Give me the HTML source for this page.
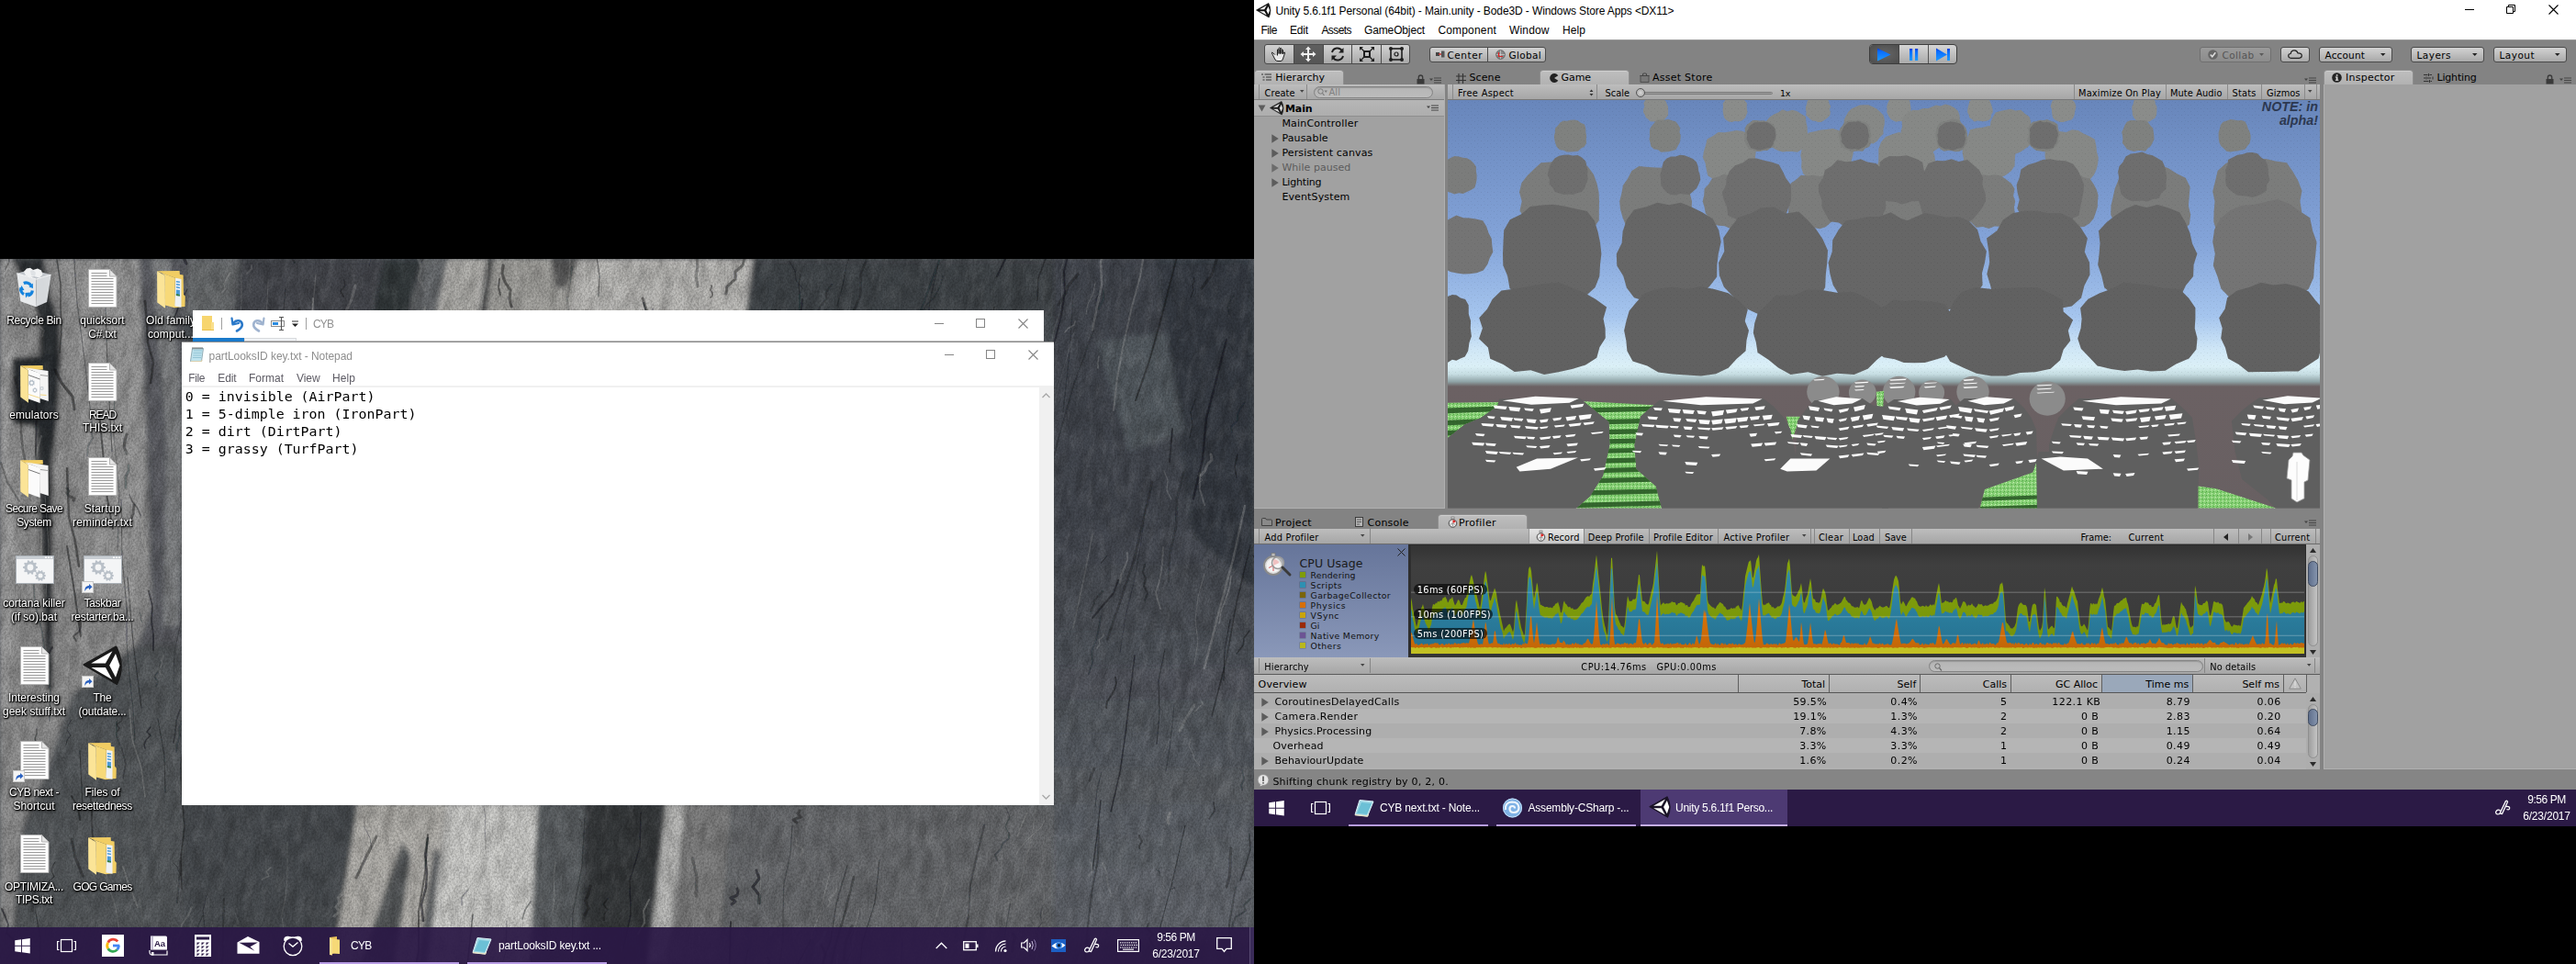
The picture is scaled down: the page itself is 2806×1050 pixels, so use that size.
<!DOCTYPE html><html><head><meta charset="utf-8"><title>desktop</title><style>
html,body{margin:0;padding:0;background:#000;}
body{width:2806px;height:1050px;position:relative;overflow:hidden;font-family:"Liberation Sans",sans-serif;}
.a{position:absolute;}
svg{display:block;overflow:visible}
</style></head><body><div class="a" id="lm" style="left:0;top:282px;width:1366px;height:768px;overflow:hidden"><svg width="1366" height="768" viewBox="0 0 1366 768" style="position:absolute;left:0;top:0">
<defs>
<filter id="wblur" x="-5%" y="-5%" width="110%" height="110%"><feGaussianBlur stdDeviation="2.500"/></filter>
<filter id="grain" x="0" y="0" width="100%" height="100%">
<feTurbulence type="fractalNoise" baseFrequency="0.55 0.4" numOctaves="2" seed="9" result="n"/>
<feColorMatrix in="n" type="matrix" values="0 0 0 0 0  0 0 0 0 0  0 0 0 0 0  3 0 0 0 -1.1"/>
</filter>
<filter id="cblur"><feGaussianBlur stdDeviation="0.700"/></filter>
<filter id="rock" x="0" y="0" width="100%" height="100%">
<feTurbulence type="fractalNoise" baseFrequency="0.09 0.035" numOctaves="4" seed="7" result="n"/>
<feColorMatrix in="n" type="matrix" values="0 0 0 0 0  0 0 0 0 0  0 0 0 0 0  2.2 1.2 0 0 -1.35"/>
</filter>
<filter id="rock2" x="0" y="0" width="100%" height="100%">
<feTurbulence type="fractalNoise" baseFrequency="0.12 0.05" numOctaves="4" seed="23" result="n"/>
<feColorMatrix in="n" type="matrix" values="0 0 0 0 1  0 0 0 0 1  0 0 0 0 1  2.2 1.2 0 0 -1.45"/>
</filter>
</defs>
<rect width="1366" height="768" fill="#4f5459"/>
<g filter="url(#wblur)"><polygon points="0,0 152,0 160,200 165,380 150,420 78,475 50,560 25,620 15,728 0,728" fill="#959595" opacity="1"/><polygon points="0,0 14,0 16,300 10,500 0,520" fill="#a5a5a5" opacity="1"/><polygon points="70,0 150,0 158,200 150,380 100,380 90,200" fill="#9f9f9f" opacity="1"/><polygon points="152,0 225,0 235,60 200,60 198,420 150,420 165,380 160,200" fill="#5e6166" opacity="1"/><polygon points="165,0 185,0 200,200 195,400 178,400 182,200" fill="#858789" opacity="1"/><polygon points="13,0 48,0 55,40 65,70 66,108 62,182 57,220 57,330 58,470 50,470 46,330 41,220 39,182 43,108 43,70 35,40" fill="#2d3035" opacity="1"/><polygon points="13,108 62,104 60,185 14,180" fill="#2a2e33" opacity="1"/><polygon points="78,475 150,420 198,420 198,728 15,728 25,620 50,560" fill="#585c5f" opacity="1"/><polygon points="205,0 262,0 255,62 200,62" fill="#6d6f72" opacity="1"/><polygon points="262,0 460,0 445,62 255,62" fill="#474a4f" opacity="1"/><polygon points="418,0 460,0 445,62 405,62" fill="#363a3e" opacity="1"/><polygon points="460,0 488,0 475,62 445,62" fill="#6b6d6f" opacity="1"/><polygon points="488,0 530,0 522,62 475,62" fill="#b7b6b2" opacity="1"/><polygon points="530,0 537,0 529,62 522,62" fill="#3a3c41" opacity="1"/><polygon points="537,0 631,0 620,62 529,62" fill="#a9a8a4" opacity="1"/><polygon points="600,0 631,0 616,32 605,32" fill="#5a5a5a" opacity="1"/><polygon points="631,0 821,0 812,62 620,62" fill="#c1c0bd" opacity="1"/><polygon points="821,0 1150,0 1150,62 812,62" fill="#42474c" opacity="1"/><polygon points="1148,0 1366,0 1366,40 1148,40" fill="#454a51" opacity="1"/><polygon points="1148,37 1366,37 1366,77 1148,77" fill="#454a51" opacity="1"/><polygon points="1148,74 1366,74 1366,114 1148,114" fill="#454a51" opacity="1"/><polygon points="1148,111 1366,111 1366,151 1148,151" fill="#454a51" opacity="1"/><polygon points="1148,148 1366,148 1366,188 1148,188" fill="#454a51" opacity="1"/><polygon points="1148,185 1366,185 1366,225 1148,225" fill="#454a51" opacity="1"/><polygon points="1148,222 1366,222 1366,262 1148,262" fill="#454a51" opacity="1"/><polygon points="1148,259 1366,259 1366,299 1148,299" fill="#454a51" opacity="1"/><polygon points="1148,296 1366,296 1366,336 1148,336" fill="#494e55" opacity="1"/><polygon points="1148,333 1366,333 1366,373 1148,373" fill="#4b5057" opacity="1"/><polygon points="1148,370 1366,370 1366,410 1148,410" fill="#4f535a" opacity="1"/><polygon points="1148,407 1366,407 1366,447 1148,447" fill="#51565d" opacity="1"/><polygon points="1148,444 1366,444 1366,484 1148,484" fill="#555960" opacity="1"/><polygon points="1148,481 1366,481 1366,521 1148,521" fill="#585d63" opacity="1"/><polygon points="1148,518 1366,518 1366,558 1148,558" fill="#5a5f66" opacity="1"/><polygon points="1148,555 1366,555 1366,595 1148,595" fill="#5e6368" opacity="1"/><polygon points="1148,592 1366,592 1366,632 1148,632" fill="#60656c" opacity="1"/><polygon points="1148,629 1366,629 1366,669 1148,669" fill="#64686e" opacity="1"/><polygon points="1148,666 1366,666 1366,706 1148,706" fill="#666b71" opacity="1"/><polygon points="1148,703 1366,703 1366,743 1148,743" fill="#666b71" opacity="1"/><polygon points="1260,0 1366,0 1366,360 1300,300" fill="#383d44" opacity="1"/><polygon points="1195,90 1270,80 1290,190 1230,210" fill="#575d64" opacity="1"/><polygon points="198,593 390,593 362,768 198,768" fill="#4b4f52" opacity="1"/><polygon points="390,593 487,593 466,768 362,768" fill="#b8b6b1" opacity="1"/><polygon points="438,635 448,650 430,768 392,768" fill="#5a5d5f" opacity="1"/><polygon points="473,640 480,650 473,768 455,768" fill="#65676b" opacity="1"/><polygon points="487,593 586,593 577,768 466,768" fill="#d4d4d1" opacity="1"/><polygon points="586,593 638,593 632,768 577,768" fill="#5f6366" opacity="1"/><polygon points="638,593 725.5,593 706,768 630,768" fill="#373b3e" opacity="1"/><polygon points="725.5,593 748,593 726,768 706,768" fill="#bfbfbd" opacity="1"/><polygon points="748,593 796,593 783,768 726,768" fill="#838383" opacity="1"/><polygon points="796,593 1148,593 1148,768 783,768" fill="#6c6e71" opacity="1"/></g><g filter="url(#cblur)"><path d="M873 -20L873 -12L876 -4" stroke="#14171b" stroke-width="1" opacity="0.26" fill="none" stroke-linecap="round" stroke-linejoin="round"/><path d="M36 121L40 163L39 205L40 247" stroke="#14171b" stroke-width="2" opacity="0.55" fill="none" stroke-linecap="round" stroke-linejoin="round"/><path d="M1308 232L1305 234L1306 237L1308 239L1310 241L1306 244" stroke="#d6d6d2" stroke-width="1" opacity="0.20" fill="none" stroke-linecap="round" stroke-linejoin="round"/><path d="M263 16L263 48L260 79L260 111L258 143L258 174" stroke="#d6d6d2" stroke-width="1" opacity="0.17" fill="none" stroke-linecap="round" stroke-linejoin="round"/><path d="M1279 484L1277 508L1274 533L1270 558" stroke="#14171b" stroke-width="1" opacity="0.34" fill="none" stroke-linecap="round" stroke-linejoin="round"/><path d="M313 -14L312 -10L313 -7L318 -3L318 0L321 4" stroke="#14171b" stroke-width="2" opacity="0.42" fill="none" stroke-linecap="round" stroke-linejoin="round"/><path d="M494 766L497 771L497 776L500 782L501 787L501 792" stroke="#d6d6d2" stroke-width="1.5" opacity="0.24" fill="none" stroke-linecap="round" stroke-linejoin="round"/><path d="M756 721L755 738L754 755L757 771L756 788" stroke="#d6d6d2" stroke-width="1" opacity="0.16" fill="none" stroke-linecap="round" stroke-linejoin="round"/><path d="M244 697L243 728L243 759L239 789" stroke="#14171b" stroke-width="2" opacity="0.38" fill="none" stroke-linecap="round" stroke-linejoin="round"/><path d="M1 222L8 243L21 264" stroke="#14171b" stroke-width="2" opacity="0.33" fill="none" stroke-linecap="round" stroke-linejoin="round"/><path d="M95 575L99 588L100 602L100 615L101 629L102 643" stroke="#14171b" stroke-width="2" opacity="0.43" fill="none" stroke-linecap="round" stroke-linejoin="round"/><path d="M510 687L503 695L503 704" stroke="#14171b" stroke-width="1.5" opacity="0.25" fill="none" stroke-linecap="round" stroke-linejoin="round"/><path d="M1174 17L1168 24L1163 30L1161 37L1157 43L1153 50" stroke="#14171b" stroke-width="3" opacity="0.42" fill="none" stroke-linecap="round" stroke-linejoin="round"/><path d="M1344 40L1340 46L1337 53L1339 60" stroke="#14171b" stroke-width="1.5" opacity="0.30" fill="none" stroke-linecap="round" stroke-linejoin="round"/><path d="M605 656L603 675L604 694L602 713" stroke="#d6d6d2" stroke-width="0.8" opacity="0.27" fill="none" stroke-linecap="round" stroke-linejoin="round"/><path d="M548 7L547 16L550 25L556 34L555 43L557 52" stroke="#14171b" stroke-width="3" opacity="0.49" fill="none" stroke-linecap="round" stroke-linejoin="round"/><path d="M1022 6L1013 46L1008 86L1008 127" stroke="#14171b" stroke-width="1" opacity="0.43" fill="none" stroke-linecap="round" stroke-linejoin="round"/><path d="M552 721L551 754L542 786L542 819L535 852" stroke="#14171b" stroke-width="0.8" opacity="0.45" fill="none" stroke-linecap="round" stroke-linejoin="round"/><path d="M1027 19L1024 30L1018 41L1008 52L1001 64" stroke="#14171b" stroke-width="1.5" opacity="0.30" fill="none" stroke-linecap="round" stroke-linejoin="round"/><path d="M1139 528L1125 623L1103 717" stroke="#d6d6d2" stroke-width="0.8" opacity="0.20" fill="none" stroke-linecap="round" stroke-linejoin="round"/><path d="M158 46L160 69L161 91L167 113L164 135" stroke="#14171b" stroke-width="2.5" opacity="0.49" fill="none" stroke-linecap="round" stroke-linejoin="round"/><path d="M866 630L868 634L867 638L874 642L874 646L872 650" stroke="#d6d6d2" stroke-width="1.5" opacity="0.20" fill="none" stroke-linecap="round" stroke-linejoin="round"/><path d="M49 258L53 313L50 368" stroke="#d6d6d2" stroke-width="1" opacity="0.24" fill="none" stroke-linecap="round" stroke-linejoin="round"/><path d="M341 43L339 101L335 159L329 217" stroke="#d6d6d2" stroke-width="2" opacity="0.27" fill="none" stroke-linecap="round" stroke-linejoin="round"/><path d="M1204 -20L1199 4L1200 28L1195 52L1190 77" stroke="#d6d6d2" stroke-width="2.5" opacity="0.25" fill="none" stroke-linecap="round" stroke-linejoin="round"/><path d="M1255 243L1235 329L1206 415" stroke="#14171b" stroke-width="2.5" opacity="0.36" fill="none" stroke-linecap="round" stroke-linejoin="round"/><path d="M1340 393L1334 426L1333 459" stroke="#14171b" stroke-width="1" opacity="0.59" fill="none" stroke-linecap="round" stroke-linejoin="round"/><path d="M2 708L6 717L9 725L7 734L15 742" stroke="#14171b" stroke-width="2" opacity="0.58" fill="none" stroke-linecap="round" stroke-linejoin="round"/><path d="M1139 206L1138 213L1137 220L1132 228L1129 235L1124 243" stroke="#14171b" stroke-width="3" opacity="0.32" fill="none" stroke-linecap="round" stroke-linejoin="round"/><path d="M128 729L125 739L126 749" stroke="#14171b" stroke-width="1" opacity="0.42" fill="none" stroke-linecap="round" stroke-linejoin="round"/><path d="M202 516L197 550L198 584L201 618L197 652L198 686" stroke="#14171b" stroke-width="1.5" opacity="0.53" fill="none" stroke-linecap="round" stroke-linejoin="round"/><path d="M912 758L910 795L903 831L901 868L895 905L889 941" stroke="#d6d6d2" stroke-width="2" opacity="0.26" fill="none" stroke-linecap="round" stroke-linejoin="round"/><path d="M375 23L376 29L371 35L374 41" stroke="#14171b" stroke-width="1.5" opacity="0.38" fill="none" stroke-linecap="round" stroke-linejoin="round"/><path d="M1236 432L1231 474L1226 517L1220 559L1210 602" stroke="#14171b" stroke-width="1.5" opacity="0.58" fill="none" stroke-linecap="round" stroke-linejoin="round"/><path d="M40 232L45 285L45 338" stroke="#d6d6d2" stroke-width="1.5" opacity="0.28" fill="none" stroke-linecap="round" stroke-linejoin="round"/><path d="M906 28L900 36L900 44L893 52L891 60L885 68" stroke="#14171b" stroke-width="2" opacity="0.36" fill="none" stroke-linecap="round" stroke-linejoin="round"/><path d="M1023 2L1013 29L1003 56L996 83" stroke="#14171b" stroke-width="2.5" opacity="0.26" fill="none" stroke-linecap="round" stroke-linejoin="round"/><path d="M172 501L179 541L180 581" stroke="#14171b" stroke-width="1" opacity="0.46" fill="none" stroke-linecap="round" stroke-linejoin="round"/><path d="M1269 425L1262 459L1263 494L1260 528" stroke="#14171b" stroke-width="1" opacity="0.49" fill="none" stroke-linecap="round" stroke-linejoin="round"/><path d="M820 58L813 98L813 138L810 177L806 217" stroke="#d6d6d2" stroke-width="1.5" opacity="0.11" fill="none" stroke-linecap="round" stroke-linejoin="round"/><path d="M495 680L494 683L497 686L495 689L493 691L492 694" stroke="#d6d6d2" stroke-width="2" opacity="0.27" fill="none" stroke-linecap="round" stroke-linejoin="round"/><path d="M1277 185L1276 197L1275 209L1274 221" stroke="#14171b" stroke-width="2" opacity="0.55" fill="none" stroke-linecap="round" stroke-linejoin="round"/><path d="M1202 409L1201 412L1197 415L1198 418L1197 421L1195 424" stroke="#d6d6d2" stroke-width="1.5" opacity="0.22" fill="none" stroke-linecap="round" stroke-linejoin="round"/><path d="M1361 405L1355 413L1354 421L1347 430" stroke="#14171b" stroke-width="1.5" opacity="0.51" fill="none" stroke-linecap="round" stroke-linejoin="round"/><path d="M815 752L810 775L808 798L808 821L811 844" stroke="#14171b" stroke-width="1" opacity="0.44" fill="none" stroke-linecap="round" stroke-linejoin="round"/><path d="M140 -30L146 -17L151 -4" stroke="#d6d6d2" stroke-width="2" opacity="0.19" fill="none" stroke-linecap="round" stroke-linejoin="round"/><path d="M860 3L866 13L867 23L874 32" stroke="#14171b" stroke-width="1" opacity="0.40" fill="none" stroke-linecap="round" stroke-linejoin="round"/><path d="M82 736L78 754L77 772" stroke="#14171b" stroke-width="1" opacity="0.31" fill="none" stroke-linecap="round" stroke-linejoin="round"/><path d="M45 193L41 206L39 219L36 233" stroke="#d6d6d2" stroke-width="2" opacity="0.21" fill="none" stroke-linecap="round" stroke-linejoin="round"/><path d="M1241 628L1242 631L1244 635L1241 639L1241 642" stroke="#14171b" stroke-width="2" opacity="0.41" fill="none" stroke-linecap="round" stroke-linejoin="round"/><path d="M110 -8L109 -3L108 2L102 7L103 12" stroke="#d6d6d2" stroke-width="1" opacity="0.22" fill="none" stroke-linecap="round" stroke-linejoin="round"/><path d="M1362 312L1347 374L1336 436L1320 498" stroke="#14171b" stroke-width="1.5" opacity="0.48" fill="none" stroke-linecap="round" stroke-linejoin="round"/><path d="M1291 617L1278 674L1263 731" stroke="#14171b" stroke-width="1" opacity="0.52" fill="none" stroke-linecap="round" stroke-linejoin="round"/><path d="M1267 314L1266 331L1264 347L1259 364L1264 381" stroke="#d6d6d2" stroke-width="2" opacity="0.23" fill="none" stroke-linecap="round" stroke-linejoin="round"/><path d="M1247 333L1245 341L1248 348L1246 356L1250 364L1247 372" stroke="#14171b" stroke-width="2" opacity="0.42" fill="none" stroke-linecap="round" stroke-linejoin="round"/><path d="M1201 658L1205 667L1206 677L1208 686L1211 695" stroke="#d6d6d2" stroke-width="2" opacity="0.15" fill="none" stroke-linecap="round" stroke-linejoin="round"/><path d="M515 714L505 807L497 901" stroke="#14171b" stroke-width="1.5" opacity="0.52" fill="none" stroke-linecap="round" stroke-linejoin="round"/><path d="M1248 268L1243 308L1236 349L1226 389L1220 429" stroke="#14171b" stroke-width="1" opacity="0.26" fill="none" stroke-linecap="round" stroke-linejoin="round"/><path d="M211 339L213 359L210 378L211 398L207 417L206 437" stroke="#14171b" stroke-width="2.5" opacity="0.36" fill="none" stroke-linecap="round" stroke-linejoin="round"/><path d="M311 33L304 111L305 189" stroke="#14171b" stroke-width="0.8" opacity="0.49" fill="none" stroke-linecap="round" stroke-linejoin="round"/><path d="M199 389L201 443L204 496L204 550" stroke="#d6d6d2" stroke-width="0.8" opacity="0.17" fill="none" stroke-linecap="round" stroke-linejoin="round"/><path d="M911 686L910 690L906 694L903 698L905 701L902 705" stroke="#d6d6d2" stroke-width="2" opacity="0.15" fill="none" stroke-linecap="round" stroke-linejoin="round"/><path d="M146 268L145 278L141 287" stroke="#14171b" stroke-width="3" opacity="0.45" fill="none" stroke-linecap="round" stroke-linejoin="round"/><path d="M1138 690L1135 717L1133 744L1127 772" stroke="#d6d6d2" stroke-width="1" opacity="0.21" fill="none" stroke-linecap="round" stroke-linejoin="round"/><path d="M123 198L126 217L123 236L128 254L126 273" stroke="#d6d6d2" stroke-width="2" opacity="0.17" fill="none" stroke-linecap="round" stroke-linejoin="round"/><path d="M463 53L459 70L461 88L460 105L458 123" stroke="#d6d6d2" stroke-width="2.5" opacity="0.28" fill="none" stroke-linecap="round" stroke-linejoin="round"/><path d="M846 722L844 728L844 734L845 740L852 747L846 753" stroke="#d6d6d2" stroke-width="3" opacity="0.15" fill="none" stroke-linecap="round" stroke-linejoin="round"/><path d="M1297 523L1295 530L1299 538L1301 545L1307 552" stroke="#d6d6d2" stroke-width="1" opacity="0.21" fill="none" stroke-linecap="round" stroke-linejoin="round"/><path d="M1169 40L1165 103L1158 167" stroke="#14171b" stroke-width="1" opacity="0.35" fill="none" stroke-linecap="round" stroke-linejoin="round"/><path d="M125 131L124 193L130 255L128 317" stroke="#14171b" stroke-width="1" opacity="0.29" fill="none" stroke-linecap="round" stroke-linejoin="round"/><path d="M295 663L290 667L293 672L285 676" stroke="#d6d6d2" stroke-width="1.5" opacity="0.20" fill="none" stroke-linecap="round" stroke-linejoin="round"/><path d="M489 597L487 623L486 649" stroke="#d6d6d2" stroke-width="1" opacity="0.19" fill="none" stroke-linecap="round" stroke-linejoin="round"/><path d="M701 48L708 70L711 91" stroke="#14171b" stroke-width="2" opacity="0.59" fill="none" stroke-linecap="round" stroke-linejoin="round"/><path d="M582 47L582 75L581 103L581 131L578 159" stroke="#d6d6d2" stroke-width="1" opacity="0.11" fill="none" stroke-linecap="round" stroke-linejoin="round"/><path d="M1083 52L1075 87L1069 122L1062 156L1053 191L1049 225" stroke="#14171b" stroke-width="1" opacity="0.56" fill="none" stroke-linecap="round" stroke-linejoin="round"/><path d="M209 706L205 715L198 725L196 735L192 745" stroke="#d6d6d2" stroke-width="2" opacity="0.20" fill="none" stroke-linecap="round" stroke-linejoin="round"/><path d="M578 700L572 709L569 719" stroke="#14171b" stroke-width="1.5" opacity="0.42" fill="none" stroke-linecap="round" stroke-linejoin="round"/><path d="M157 185L156 191L160 197L165 203L169 209" stroke="#d6d6d2" stroke-width="1" opacity="0.22" fill="none" stroke-linecap="round" stroke-linejoin="round"/><path d="M196 491L192 503L191 515L189 527" stroke="#14171b" stroke-width="1.5" opacity="0.41" fill="none" stroke-linecap="round" stroke-linejoin="round"/><path d="M775 29L775 31L774 34L776 37L776 40L774 42" stroke="#14171b" stroke-width="2" opacity="0.40" fill="none" stroke-linecap="round" stroke-linejoin="round"/><path d="M301 755L304 759L300 762L303 765L306 768L305 771" stroke="#14171b" stroke-width="2" opacity="0.29" fill="none" stroke-linecap="round" stroke-linejoin="round"/><path d="M1138 611L1134 619L1125 627L1117 635L1110 643L1106 651" stroke="#d6d6d2" stroke-width="1" opacity="0.20" fill="none" stroke-linecap="round" stroke-linejoin="round"/><path d="M1137 703L1133 713L1135 723L1128 733L1131 742" stroke="#14171b" stroke-width="1" opacity="0.36" fill="none" stroke-linecap="round" stroke-linejoin="round"/><path d="M1309 482L1310 485L1305 489L1302 493" stroke="#d6d6d2" stroke-width="1.5" opacity="0.22" fill="none" stroke-linecap="round" stroke-linejoin="round"/><path d="M930 673L921 710L910 748L901 786L890 823L884 861" stroke="#14171b" stroke-width="2.5" opacity="0.40" fill="none" stroke-linecap="round" stroke-linejoin="round"/><path d="M78 632L82 652L90 672" stroke="#14171b" stroke-width="3" opacity="0.44" fill="none" stroke-linecap="round" stroke-linejoin="round"/><path d="M85 44L90 63L89 83L92 102L93 122L99 142" stroke="#d6d6d2" stroke-width="2" opacity="0.11" fill="none" stroke-linecap="round" stroke-linejoin="round"/><path d="M529 586L527 597L529 609L528 620L529 632L529 643" stroke="#14171b" stroke-width="1" opacity="0.28" fill="none" stroke-linecap="round" stroke-linejoin="round"/><path d="M193 243L196 272L196 302L197 331L203 361L207 390" stroke="#d6d6d2" stroke-width="2" opacity="0.12" fill="none" stroke-linecap="round" stroke-linejoin="round"/><path d="M1362 697L1355 704L1357 710L1346 717L1343 724L1342 730" stroke="#14171b" stroke-width="2" opacity="0.32" fill="none" stroke-linecap="round" stroke-linejoin="round"/><path d="M904 668L893 713L876 757L865 802" stroke="#d6d6d2" stroke-width="1" opacity="0.24" fill="none" stroke-linecap="round" stroke-linejoin="round"/><path d="M983 743L981 774L972 806L970 837L965 868L960 899" stroke="#14171b" stroke-width="1" opacity="0.36" fill="none" stroke-linecap="round" stroke-linejoin="round"/><path d="M1051 589L1051 593L1046 598L1040 603L1042 608L1040 612" stroke="#d6d6d2" stroke-width="1.5" opacity="0.11" fill="none" stroke-linecap="round" stroke-linejoin="round"/><path d="M373 691L368 696L370 701L366 706L370 711L364 716" stroke="#d6d6d2" stroke-width="3" opacity="0.27" fill="none" stroke-linecap="round" stroke-linejoin="round"/><path d="M39 712L44 740L43 769L51 797L53 825L53 853" stroke="#14171b" stroke-width="1" opacity="0.57" fill="none" stroke-linecap="round" stroke-linejoin="round"/><path d="M108 167L112 209L115 251L123 294" stroke="#14171b" stroke-width="2" opacity="0.52" fill="none" stroke-linecap="round" stroke-linejoin="round"/><path d="M151 691L155 718L154 744" stroke="#d6d6d2" stroke-width="1" opacity="0.15" fill="none" stroke-linecap="round" stroke-linejoin="round"/><path d="M117 748L123 753L122 759L123 764L132 769L132 775" stroke="#14171b" stroke-width="1" opacity="0.41" fill="none" stroke-linecap="round" stroke-linejoin="round"/><path d="M454 -4L459 9L456 21L463 34" stroke="#d6d6d2" stroke-width="3" opacity="0.19" fill="none" stroke-linecap="round" stroke-linejoin="round"/><path d="M60 121L67 135L79 150L81 164" stroke="#14171b" stroke-width="3" opacity="0.51" fill="none" stroke-linecap="round" stroke-linejoin="round"/><path d="M1307 234L1307 251L1312 268" stroke="#d6d6d2" stroke-width="2" opacity="0.23" fill="none" stroke-linecap="round" stroke-linejoin="round"/><path d="M140 225L140 231L137 237L137 243L137 249" stroke="#14171b" stroke-width="3" opacity="0.26" fill="none" stroke-linecap="round" stroke-linejoin="round"/><path d="M78 502L74 508L73 513L77 519L73 524L72 529" stroke="#14171b" stroke-width="1" opacity="0.46" fill="none" stroke-linecap="round" stroke-linejoin="round"/><path d="M928 727L921 745L919 763" stroke="#14171b" stroke-width="3" opacity="0.35" fill="none" stroke-linecap="round" stroke-linejoin="round"/><path d="M707 698L701 710L702 723L695 735" stroke="#d6d6d2" stroke-width="2" opacity="0.28" fill="none" stroke-linecap="round" stroke-linejoin="round"/><path d="M1228 320L1228 328L1225 336L1221 345L1220 353" stroke="#d6d6d2" stroke-width="2" opacity="0.20" fill="none" stroke-linecap="round" stroke-linejoin="round"/><path d="M871 601L869 604L872 608L864 611L868 614" stroke="#14171b" stroke-width="3" opacity="0.44" fill="none" stroke-linecap="round" stroke-linejoin="round"/><path d="M90 282L93 311L94 340L98 369L98 399" stroke="#d6d6d2" stroke-width="1.5" opacity="0.11" fill="none" stroke-linecap="round" stroke-linejoin="round"/><path d="M1199 590L1195 628L1190 666" stroke="#14171b" stroke-width="1.5" opacity="0.55" fill="none" stroke-linecap="round" stroke-linejoin="round"/><path d="M221 715L216 726L214 737L212 748L209 758" stroke="#14171b" stroke-width="1" opacity="0.47" fill="none" stroke-linecap="round" stroke-linejoin="round"/><path d="M230 721L234 737L234 753" stroke="#d6d6d2" stroke-width="1" opacity="0.11" fill="none" stroke-linecap="round" stroke-linejoin="round"/><path d="M41 678L36 694L35 710" stroke="#14171b" stroke-width="3" opacity="0.28" fill="none" stroke-linecap="round" stroke-linejoin="round"/><path d="M196 656L196 671L194 686L193 701" stroke="#14171b" stroke-width="2" opacity="0.29" fill="none" stroke-linecap="round" stroke-linejoin="round"/><path d="M132 194L133 202L136 210L145 218L145 225" stroke="#d6d6d2" stroke-width="1.5" opacity="0.27" fill="none" stroke-linecap="round" stroke-linejoin="round"/><path d="M1201 362L1197 366L1193 371L1192 375L1190 380L1188 384" stroke="#14171b" stroke-width="2" opacity="0.35" fill="none" stroke-linecap="round" stroke-linejoin="round"/><path d="M62 1L66 27L66 52L67 77L65 102" stroke="#14171b" stroke-width="1.5" opacity="0.52" fill="none" stroke-linecap="round" stroke-linejoin="round"/><path d="M132 262L133 326L139 390" stroke="#14171b" stroke-width="1" opacity="0.43" fill="none" stroke-linecap="round" stroke-linejoin="round"/><path d="M1353 557L1354 562L1355 568L1352 573L1353 578" stroke="#14171b" stroke-width="2" opacity="0.26" fill="none" stroke-linecap="round" stroke-linejoin="round"/><path d="M36 343L38 375L46 407L50 439L55 471L54 503" stroke="#14171b" stroke-width="2" opacity="0.27" fill="none" stroke-linecap="round" stroke-linejoin="round"/><path d="M930 -14L922 7L918 29L912 51" stroke="#14171b" stroke-width="1" opacity="0.39" fill="none" stroke-linecap="round" stroke-linejoin="round"/><path d="M1192 555L1190 559L1189 563L1187 568" stroke="#14171b" stroke-width="3" opacity="0.36" fill="none" stroke-linecap="round" stroke-linejoin="round"/><path d="M923 661L911 702L905 742L890 783L879 824" stroke="#14171b" stroke-width="1.5" opacity="0.34" fill="none" stroke-linecap="round" stroke-linejoin="round"/><path d="M1275 603L1273 607L1272 611L1273 615" stroke="#d6d6d2" stroke-width="3" opacity="0.27" fill="none" stroke-linecap="round" stroke-linejoin="round"/><path d="M1275 523L1271 529L1269 535L1267 541L1261 547L1264 553" stroke="#d6d6d2" stroke-width="1.5" opacity="0.11" fill="none" stroke-linecap="round" stroke-linejoin="round"/><path d="M1336 88L1325 131L1314 174L1310 218L1300 261" stroke="#14171b" stroke-width="2.5" opacity="0.59" fill="none" stroke-linecap="round" stroke-linejoin="round"/><path d="M1162 -10L1156 12L1157 34L1155 55L1148 77L1144 99" stroke="#d6d6d2" stroke-width="0.8" opacity="0.17" fill="none" stroke-linecap="round" stroke-linejoin="round"/><path d="M1268 231L1272 241L1271 252L1276 262" stroke="#d6d6d2" stroke-width="1.5" opacity="0.18" fill="none" stroke-linecap="round" stroke-linejoin="round"/><path d="M19 232L21 249L22 265" stroke="#d6d6d2" stroke-width="3" opacity="0.19" fill="none" stroke-linecap="round" stroke-linejoin="round"/><path d="M1341 346L1339 359L1335 371L1330 384L1328 397" stroke="#d6d6d2" stroke-width="1.5" opacity="0.27" fill="none" stroke-linecap="round" stroke-linejoin="round"/><path d="M937 706L926 758L917 811L908 864" stroke="#d6d6d2" stroke-width="2.5" opacity="0.15" fill="none" stroke-linecap="round" stroke-linejoin="round"/><path d="M1193 26L1191 37L1185 49L1183 60" stroke="#d6d6d2" stroke-width="1" opacity="0.26" fill="none" stroke-linecap="round" stroke-linejoin="round"/><path d="M711 54L711 60L710 66L710 72L707 78L704 83" stroke="#14171b" stroke-width="1" opacity="0.43" fill="none" stroke-linecap="round" stroke-linejoin="round"/><path d="M348 -38L345 -35L347 -33L350 -31L351 -29L352 -27" stroke="#d6d6d2" stroke-width="1" opacity="0.11" fill="none" stroke-linecap="round" stroke-linejoin="round"/><path d="M1356 269L1343 328L1327 387L1312 446" stroke="#d6d6d2" stroke-width="2.5" opacity="0.26" fill="none" stroke-linecap="round" stroke-linejoin="round"/><path d="M5 -22L4 -13L9 -5L10 3L6 11" stroke="#14171b" stroke-width="1.5" opacity="0.37" fill="none" stroke-linecap="round" stroke-linejoin="round"/><path d="M1279 678L1277 680L1276 683L1280 685L1274 687L1276 689" stroke="#14171b" stroke-width="1" opacity="0.27" fill="none" stroke-linecap="round" stroke-linejoin="round"/><path d="M395 619L397 651L391 682L389 714" stroke="#d6d6d2" stroke-width="2.5" opacity="0.14" fill="none" stroke-linecap="round" stroke-linejoin="round"/><path d="M759 -2L760 8L758 19L760 30" stroke="#14171b" stroke-width="3" opacity="0.35" fill="none" stroke-linecap="round" stroke-linejoin="round"/><path d="M1101 699L1093 745L1085 792L1076 838L1061 885" stroke="#14171b" stroke-width="1" opacity="0.34" fill="none" stroke-linecap="round" stroke-linejoin="round"/><path d="M824 666L827 675L820 684L827 693L827 702" stroke="#14171b" stroke-width="3" opacity="0.57" fill="none" stroke-linecap="round" stroke-linejoin="round"/><path d="M160 768L159 771L160 774L157 778L157 781L160 785" stroke="#14171b" stroke-width="1.5" opacity="0.52" fill="none" stroke-linecap="round" stroke-linejoin="round"/><path d="M637 609L634 661L624 713L623 765" stroke="#14171b" stroke-width="1" opacity="0.39" fill="none" stroke-linecap="round" stroke-linejoin="round"/><path d="M1289 233L1282 262L1281 292L1274 322L1273 351" stroke="#14171b" stroke-width="2.5" opacity="0.31" fill="none" stroke-linecap="round" stroke-linejoin="round"/><path d="M80 -13L84 48L92 109L99 170" stroke="#14171b" stroke-width="0.8" opacity="0.54" fill="none" stroke-linecap="round" stroke-linejoin="round"/><path d="M623 9L618 45L621 81L618 117L622 153L614 190" stroke="#14171b" stroke-width="2.5" opacity="0.25" fill="none" stroke-linecap="round" stroke-linejoin="round"/><path d="M1101 695L1097 697L1102 700L1097 702L1094 704L1096 707" stroke="#d6d6d2" stroke-width="2" opacity="0.15" fill="none" stroke-linecap="round" stroke-linejoin="round"/><path d="M410 629L399 651L388 674" stroke="#14171b" stroke-width="3" opacity="0.44" fill="none" stroke-linecap="round" stroke-linejoin="round"/><path d="M113 643L116 675L126 707L131 739" stroke="#d6d6d2" stroke-width="0.8" opacity="0.27" fill="none" stroke-linecap="round" stroke-linejoin="round"/><path d="M650 -2L653 19L652 40" stroke="#14171b" stroke-width="1" opacity="0.55" fill="none" stroke-linecap="round" stroke-linejoin="round"/><path d="M544 22L543 31L545 39" stroke="#14171b" stroke-width="2" opacity="0.51" fill="none" stroke-linecap="round" stroke-linejoin="round"/><path d="M73 313L81 362L88 411" stroke="#14171b" stroke-width="2" opacity="0.52" fill="none" stroke-linecap="round" stroke-linejoin="round"/><path d="M100 177L99 186L101 195L96 204L95 214" stroke="#14171b" stroke-width="2" opacity="0.25" fill="none" stroke-linecap="round" stroke-linejoin="round"/><path d="M700 43L705 58L707 72" stroke="#14171b" stroke-width="3" opacity="0.39" fill="none" stroke-linecap="round" stroke-linejoin="round"/><path d="M1356 156L1351 163L1348 169L1348 176L1341 183L1342 189" stroke="#14171b" stroke-width="2" opacity="0.27" fill="none" stroke-linecap="round" stroke-linejoin="round"/><path d="M185 -35L189 -21L197 -8L203 5" stroke="#14171b" stroke-width="3" opacity="0.54" fill="none" stroke-linecap="round" stroke-linejoin="round"/><path d="M1322 592L1323 601L1317 610" stroke="#14171b" stroke-width="1.5" opacity="0.44" fill="none" stroke-linecap="round" stroke-linejoin="round"/><path d="M1119 603L1113 616L1108 629" stroke="#d6d6d2" stroke-width="1.5" opacity="0.24" fill="none" stroke-linecap="round" stroke-linejoin="round"/><path d="M1261 663L1259 665L1263 667L1263 670L1263 672" stroke="#14171b" stroke-width="1" opacity="0.34" fill="none" stroke-linecap="round" stroke-linejoin="round"/><path d="M883 741L877 754L870 766L866 779" stroke="#14171b" stroke-width="1.5" opacity="0.43" fill="none" stroke-linecap="round" stroke-linejoin="round"/><path d="M471 -20L468 -12L464 -5L459 3" stroke="#14171b" stroke-width="1.5" opacity="0.37" fill="none" stroke-linecap="round" stroke-linejoin="round"/><path d="M92 -4L93 14L95 32L94 49" stroke="#d6d6d2" stroke-width="0.8" opacity="0.13" fill="none" stroke-linecap="round" stroke-linejoin="round"/><path d="M1206 323L1204 326L1201 329L1200 331" stroke="#14171b" stroke-width="1" opacity="0.53" fill="none" stroke-linecap="round" stroke-linejoin="round"/><path d="M1319 213L1320 219L1315 224L1313 230L1308 236" stroke="#d6d6d2" stroke-width="3" opacity="0.25" fill="none" stroke-linecap="round" stroke-linejoin="round"/><path d="M326 54L326 59L326 63L324 68" stroke="#14171b" stroke-width="3" opacity="0.42" fill="none" stroke-linecap="round" stroke-linejoin="round"/><path d="M73 250L75 253L73 255L75 258L81 261L80 263" stroke="#14171b" stroke-width="3" opacity="0.42" fill="none" stroke-linecap="round" stroke-linejoin="round"/><path d="M751 51L752 64L744 76L747 88" stroke="#d6d6d2" stroke-width="1" opacity="0.18" fill="none" stroke-linecap="round" stroke-linejoin="round"/><path d="M1365 323L1370 333L1371 342L1372 352L1376 362" stroke="#14171b" stroke-width="1.5" opacity="0.51" fill="none" stroke-linecap="round" stroke-linejoin="round"/><path d="M1072 617L1064 650L1057 682L1055 715L1049 747" stroke="#14171b" stroke-width="2" opacity="0.36" fill="none" stroke-linecap="round" stroke-linejoin="round"/><path d="M928 37L920 90L917 144L911 197" stroke="#d6d6d2" stroke-width="1" opacity="0.12" fill="none" stroke-linecap="round" stroke-linejoin="round"/><path d="M1202 35L1202 44L1197 54" stroke="#14171b" stroke-width="3" opacity="0.25" fill="none" stroke-linecap="round" stroke-linejoin="round"/><path d="M87 392L88 397L88 401L86 406L80 411L83 416" stroke="#14171b" stroke-width="2" opacity="0.45" fill="none" stroke-linecap="round" stroke-linejoin="round"/><path d="M1143 -27L1140 -3L1131 21L1130 45" stroke="#14171b" stroke-width="1.5" opacity="0.49" fill="none" stroke-linecap="round" stroke-linejoin="round"/><path d="M1197 35L1197 39L1194 43L1194 46" stroke="#14171b" stroke-width="1" opacity="0.36" fill="none" stroke-linecap="round" stroke-linejoin="round"/><path d="M292 23L291 48L288 72L284 97L281 121L284 146" stroke="#d6d6d2" stroke-width="0.8" opacity="0.25" fill="none" stroke-linecap="round" stroke-linejoin="round"/><path d="M141 257L144 264L150 272L153 279" stroke="#14171b" stroke-width="1.5" opacity="0.45" fill="none" stroke-linecap="round" stroke-linejoin="round"/><path d="M207 293L202 327L199 361L197 395L190 429L189 463" stroke="#14171b" stroke-width="0.8" opacity="0.29" fill="none" stroke-linecap="round" stroke-linejoin="round"/><path d="M1286 -18L1275 25L1264 68L1252 111L1237 154" stroke="#14171b" stroke-width="2" opacity="0.51" fill="none" stroke-linecap="round" stroke-linejoin="round"/><path d="M872 17L870 28L871 38L871 48L871 59L869 69" stroke="#14171b" stroke-width="1" opacity="0.55" fill="none" stroke-linecap="round" stroke-linejoin="round"/><path d="M23 15L23 16L23 18L26 20L25 22L23 24" stroke="#d6d6d2" stroke-width="2" opacity="0.19" fill="none" stroke-linecap="round" stroke-linejoin="round"/><path d="M114 24L117 117L122 210" stroke="#14171b" stroke-width="1" opacity="0.47" fill="none" stroke-linecap="round" stroke-linejoin="round"/><path d="M1302 153L1297 167L1299 181L1296 195" stroke="#14171b" stroke-width="1" opacity="0.51" fill="none" stroke-linecap="round" stroke-linejoin="round"/><path d="M224 730L219 749L206 767" stroke="#d6d6d2" stroke-width="1.5" opacity="0.26" fill="none" stroke-linecap="round" stroke-linejoin="round"/><path d="M87 536L88 556L89 576L90 596" stroke="#14171b" stroke-width="1" opacity="0.55" fill="none" stroke-linecap="round" stroke-linejoin="round"/><path d="M60 657L57 662L56 667L59 673L53 678L55 683" stroke="#14171b" stroke-width="1" opacity="0.57" fill="none" stroke-linecap="round" stroke-linejoin="round"/><path d="M781 56L781 85L778 114" stroke="#d6d6d2" stroke-width="2" opacity="0.27" fill="none" stroke-linecap="round" stroke-linejoin="round"/><path d="M118 329L123 333L123 337L124 340L124 344L127 348" stroke="#14171b" stroke-width="1.5" opacity="0.46" fill="none" stroke-linecap="round" stroke-linejoin="round"/><path d="M206 713L209 719L209 725L205 730L209 736L208 741" stroke="#d6d6d2" stroke-width="1" opacity="0.10" fill="none" stroke-linecap="round" stroke-linejoin="round"/><path d="M672 8L668 46L666 83L660 121L656 158" stroke="#d6d6d2" stroke-width="1" opacity="0.19" fill="none" stroke-linecap="round" stroke-linejoin="round"/><path d="M809 10L806 27L804 44L801 62L800 79" stroke="#d6d6d2" stroke-width="1" opacity="0.17" fill="none" stroke-linecap="round" stroke-linejoin="round"/><path d="M212 93L214 104L224 116" stroke="#14171b" stroke-width="1.5" opacity="0.41" fill="none" stroke-linecap="round" stroke-linejoin="round"/><path d="M1170 80L1152 142L1141 204L1127 265" stroke="#d6d6d2" stroke-width="0.8" opacity="0.15" fill="none" stroke-linecap="round" stroke-linejoin="round"/><path d="M631 610L634 614L633 618" stroke="#14171b" stroke-width="1.5" opacity="0.39" fill="none" stroke-linecap="round" stroke-linejoin="round"/><path d="M1110 -22L1096 -2L1086 19" stroke="#14171b" stroke-width="2" opacity="0.58" fill="none" stroke-linecap="round" stroke-linejoin="round"/><path d="M40 512L40 517L38 523L40 528" stroke="#14171b" stroke-width="1.5" opacity="0.47" fill="none" stroke-linecap="round" stroke-linejoin="round"/><path d="M654 31L661 43L662 54" stroke="#d6d6d2" stroke-width="1.5" opacity="0.24" fill="none" stroke-linecap="round" stroke-linejoin="round"/><path d="M662 697L657 703L662 709L658 714L658 720" stroke="#14171b" stroke-width="1.5" opacity="0.53" fill="none" stroke-linecap="round" stroke-linejoin="round"/><path d="M1365 747L1365 753L1369 760L1369 766L1365 773L1368 779" stroke="#d6d6d2" stroke-width="1" opacity="0.27" fill="none" stroke-linecap="round" stroke-linejoin="round"/><path d="M1248 -17L1242 19L1232 56L1224 92L1217 129L1213 165" stroke="#d6d6d2" stroke-width="2" opacity="0.25" fill="none" stroke-linecap="round" stroke-linejoin="round"/><path d="M27 346L24 354L24 362L28 369L24 377" stroke="#d6d6d2" stroke-width="1.5" opacity="0.25" fill="none" stroke-linecap="round" stroke-linejoin="round"/><path d="M152 385L154 389L153 392L155 396" stroke="#14171b" stroke-width="1" opacity="0.36" fill="none" stroke-linecap="round" stroke-linejoin="round"/><path d="M1215 456L1216 462L1214 469L1211 475L1206 482L1205 489" stroke="#14171b" stroke-width="2" opacity="0.51" fill="none" stroke-linecap="round" stroke-linejoin="round"/><path d="M874 44L873 54L870 64" stroke="#14171b" stroke-width="2" opacity="0.56" fill="none" stroke-linecap="round" stroke-linejoin="round"/><path d="M16 129L21 149L23 169L23 189L25 209L29 228" stroke="#14171b" stroke-width="2.5" opacity="0.39" fill="none" stroke-linecap="round" stroke-linejoin="round"/><path d="M139 347L145 418L154 489" stroke="#14171b" stroke-width="1" opacity="0.53" fill="none" stroke-linecap="round" stroke-linejoin="round"/><path d="M1300 20L1301 24L1299 29L1300 33L1299 37L1297 42" stroke="#14171b" stroke-width="1" opacity="0.59" fill="none" stroke-linecap="round" stroke-linejoin="round"/><path d="M73 228L74 254L75 281L82 308L86 335" stroke="#14171b" stroke-width="2.5" opacity="0.48" fill="none" stroke-linecap="round" stroke-linejoin="round"/><path d="M210 252L213 256L210 261L208 266L213 270" stroke="#14171b" stroke-width="1.5" opacity="0.32" fill="none" stroke-linecap="round" stroke-linejoin="round"/><path d="M643 683L641 691L638 699L641 707L637 715" stroke="#14171b" stroke-width="3" opacity="0.41" fill="none" stroke-linecap="round" stroke-linejoin="round"/><path d="M206 523L209 529L206 536L207 542L204 549L200 555" stroke="#14171b" stroke-width="1.5" opacity="0.54" fill="none" stroke-linecap="round" stroke-linejoin="round"/><path d="M1166 -12L1159 13L1160 37L1156 61L1150 86L1140 110" stroke="#14171b" stroke-width="2" opacity="0.58" fill="none" stroke-linecap="round" stroke-linejoin="round"/><path d="M578 759L582 781L591 803" stroke="#14171b" stroke-width="2" opacity="0.50" fill="none" stroke-linecap="round" stroke-linejoin="round"/><path d="M754 652L759 673L758 694" stroke="#14171b" stroke-width="3" opacity="0.30" fill="none" stroke-linecap="round" stroke-linejoin="round"/><path d="M138 191L136 198L135 205L138 212" stroke="#14171b" stroke-width="3" opacity="0.42" fill="none" stroke-linecap="round" stroke-linejoin="round"/><path d="M948 -9L938 15L937 40L927 64L920 88" stroke="#14171b" stroke-width="2.5" opacity="0.34" fill="none" stroke-linecap="round" stroke-linejoin="round"/><path d="M134 662L141 684L150 706" stroke="#d6d6d2" stroke-width="2" opacity="0.21" fill="none" stroke-linecap="round" stroke-linejoin="round"/><path d="M1037 661L1018 722L1005 783" stroke="#d6d6d2" stroke-width="1" opacity="0.17" fill="none" stroke-linecap="round" stroke-linejoin="round"/><path d="M274 7L274 11L269 16" stroke="#d6d6d2" stroke-width="2" opacity="0.19" fill="none" stroke-linecap="round" stroke-linejoin="round"/><path d="M1312 343L1305 368L1302 393L1305 417L1301 442" stroke="#d6d6d2" stroke-width="1" opacity="0.22" fill="none" stroke-linecap="round" stroke-linejoin="round"/><path d="M1181 741L1173 771L1167 800L1157 829L1149 858" stroke="#d6d6d2" stroke-width="1" opacity="0.10" fill="none" stroke-linecap="round" stroke-linejoin="round"/><path d="M376 684L375 706L368 729L373 752L370 775L367 798" stroke="#d6d6d2" stroke-width="1" opacity="0.25" fill="none" stroke-linecap="round" stroke-linejoin="round"/><path d="M1301 486L1292 500L1285 514" stroke="#d6d6d2" stroke-width="3" opacity="0.22" fill="none" stroke-linecap="round" stroke-linejoin="round"/><path d="M530 -11L531 15L526 41L523 67L522 93L520 119" stroke="#d6d6d2" stroke-width="2.5" opacity="0.22" fill="none" stroke-linecap="round" stroke-linejoin="round"/><path d="M1197 106L1196 113L1196 119" stroke="#d6d6d2" stroke-width="1.5" opacity="0.26" fill="none" stroke-linecap="round" stroke-linejoin="round"/><path d="M1190 300L1180 351L1169 402" stroke="#d6d6d2" stroke-width="1.5" opacity="0.18" fill="none" stroke-linecap="round" stroke-linejoin="round"/><path d="M164 510L160 515L164 519L159 524L157 529L158 533" stroke="#14171b" stroke-width="1.5" opacity="0.60" fill="none" stroke-linecap="round" stroke-linejoin="round"/><path d="M1348 213L1345 226L1347 238" stroke="#14171b" stroke-width="1.5" opacity="0.52" fill="none" stroke-linecap="round" stroke-linejoin="round"/><path d="M652 -36L654 -25L663 -13L664 -1" stroke="#14171b" stroke-width="1.5" opacity="0.25" fill="none" stroke-linecap="round" stroke-linejoin="round"/><path d="M140 367L141 369L144 372L141 375L149 377" stroke="#d6d6d2" stroke-width="3" opacity="0.21" fill="none" stroke-linecap="round" stroke-linejoin="round"/><path d="M225 693L221 710L223 728L222 745" stroke="#14171b" stroke-width="1" opacity="0.26" fill="none" stroke-linecap="round" stroke-linejoin="round"/><path d="M811 -1L809 7L801 14L801 22L792 30L791 38" stroke="#14171b" stroke-width="3" opacity="0.44" fill="none" stroke-linecap="round" stroke-linejoin="round"/><path d="M138 380L138 417L141 454L145 491L147 529" stroke="#14171b" stroke-width="0.8" opacity="0.47" fill="none" stroke-linecap="round" stroke-linejoin="round"/><path d="M403 -8L404 -0L402 8" stroke="#14171b" stroke-width="1" opacity="0.28" fill="none" stroke-linecap="round" stroke-linejoin="round"/><path d="M204 33L200 41L195 50L192 59L188 68" stroke="#14171b" stroke-width="1.5" opacity="0.59" fill="none" stroke-linecap="round" stroke-linejoin="round"/><path d="M397 608L397 619L403 631L405 643" stroke="#14171b" stroke-width="1" opacity="0.30" fill="none" stroke-linecap="round" stroke-linejoin="round"/><path d="M155 283L155 303L161 322" stroke="#d6d6d2" stroke-width="3" opacity="0.24" fill="none" stroke-linecap="round" stroke-linejoin="round"/><path d="M1341 642L1340 653L1340 663L1339 674L1336 684" stroke="#14171b" stroke-width="3" opacity="0.38" fill="none" stroke-linecap="round" stroke-linejoin="round"/><path d="M1218 350L1213 364L1201 378L1190 391" stroke="#14171b" stroke-width="2" opacity="0.55" fill="none" stroke-linecap="round" stroke-linejoin="round"/><path d="M130 495L133 499L133 503L127 507L130 511L128 515" stroke="#14171b" stroke-width="1" opacity="0.58" fill="none" stroke-linecap="round" stroke-linejoin="round"/><path d="M1325 1L1320 17L1309 32" stroke="#14171b" stroke-width="3" opacity="0.45" fill="none" stroke-linecap="round" stroke-linejoin="round"/><path d="M162 362L166 378L165 394L167 410L167 426" stroke="#14171b" stroke-width="2" opacity="0.54" fill="none" stroke-linecap="round" stroke-linejoin="round"/><path d="M466 627L463 669L456 711L456 753L449 795" stroke="#14171b" stroke-width="2" opacity="0.50" fill="none" stroke-linecap="round" stroke-linejoin="round"/><path d="M466 631L463 649L465 667L464 685L459 703L461 721" stroke="#14171b" stroke-width="2.5" opacity="0.56" fill="none" stroke-linecap="round" stroke-linejoin="round"/><path d="M256 712L260 724L260 737" stroke="#d6d6d2" stroke-width="1" opacity="0.11" fill="none" stroke-linecap="round" stroke-linejoin="round"/><path d="M899 733L896 741L888 750L888 759" stroke="#d6d6d2" stroke-width="3" opacity="0.19" fill="none" stroke-linecap="round" stroke-linejoin="round"/><path d="M141 491L144 523L154 555L158 586" stroke="#d6d6d2" stroke-width="1.5" opacity="0.26" fill="none" stroke-linecap="round" stroke-linejoin="round"/><path d="M958 655L953 701L939 746L935 791L929 836" stroke="#14171b" stroke-width="1" opacity="0.50" fill="none" stroke-linecap="round" stroke-linejoin="round"/><path d="M796 722L794 794L788 866" stroke="#14171b" stroke-width="2" opacity="0.55" fill="none" stroke-linecap="round" stroke-linejoin="round"/><path d="M199 502L195 511L196 519L193 528L192 537" stroke="#14171b" stroke-width="2" opacity="0.27" fill="none" stroke-linecap="round" stroke-linejoin="round"/><path d="M698 604L697 641L686 677L687 714L679 751" stroke="#14171b" stroke-width="1.5" opacity="0.58" fill="none" stroke-linecap="round" stroke-linejoin="round"/><path d="M1187 655L1189 661L1190 666L1186 672" stroke="#d6d6d2" stroke-width="2" opacity="0.20" fill="none" stroke-linecap="round" stroke-linejoin="round"/><path d="M178 432L176 437L176 442L173 447L175 452" stroke="#d6d6d2" stroke-width="1.5" opacity="0.21" fill="none" stroke-linecap="round" stroke-linejoin="round"/><path d="M251 15L247 21L244 27L245 33L240 38" stroke="#d6d6d2" stroke-width="1.5" opacity="0.22" fill="none" stroke-linecap="round" stroke-linejoin="round"/><path d="M1361 626L1362 643L1357 660L1351 677" stroke="#14171b" stroke-width="1.5" opacity="0.47" fill="none" stroke-linecap="round" stroke-linejoin="round"/><path d="M1251 724L1249 729L1256 735L1252 740L1255 746L1259 752" stroke="#14171b" stroke-width="2" opacity="0.43" fill="none" stroke-linecap="round" stroke-linejoin="round"/><path d="M229 733L227 737L231 741" stroke="#d6d6d2" stroke-width="1.5" opacity="0.18" fill="none" stroke-linecap="round" stroke-linejoin="round"/><path d="M1200 559L1195 578L1193 597" stroke="#14171b" stroke-width="1" opacity="0.37" fill="none" stroke-linecap="round" stroke-linejoin="round"/><path d="M344 17L336 106L327 194" stroke="#d6d6d2" stroke-width="1.5" opacity="0.18" fill="none" stroke-linecap="round" stroke-linejoin="round"/><path d="M8 542L12 551L13 560L21 569L21 578" stroke="#d6d6d2" stroke-width="2" opacity="0.12" fill="none" stroke-linecap="round" stroke-linejoin="round"/><path d="M1123 -15L1127 -11L1121 -7L1127 -3L1123 1" stroke="#d6d6d2" stroke-width="2" opacity="0.13" fill="none" stroke-linecap="round" stroke-linejoin="round"/><path d="M57 423L52 432L50 442L52 451" stroke="#14171b" stroke-width="2" opacity="0.57" fill="none" stroke-linecap="round" stroke-linejoin="round"/><path d="M1092 649L1081 739L1072 829" stroke="#d6d6d2" stroke-width="1.5" opacity="0.11" fill="none" stroke-linecap="round" stroke-linejoin="round"/><path d="M793 729L790 735L790 742L788 749L782 755L783 762" stroke="#d6d6d2" stroke-width="1" opacity="0.16" fill="none" stroke-linecap="round" stroke-linejoin="round"/><path d="M1103 735L1106 739L1104 744L1103 749L1103 754" stroke="#14171b" stroke-width="3" opacity="0.38" fill="none" stroke-linecap="round" stroke-linejoin="round"/><path d="M829 640L829 675L826 710" stroke="#d6d6d2" stroke-width="1" opacity="0.21" fill="none" stroke-linecap="round" stroke-linejoin="round"/><path d="M863 617L861 648L854 680L853 711L853 743L848 774" stroke="#14171b" stroke-width="0.8" opacity="0.44" fill="none" stroke-linecap="round" stroke-linejoin="round"/><path d="M1171 68L1170 72L1163 76L1160 80" stroke="#d6d6d2" stroke-width="1.5" opacity="0.25" fill="none" stroke-linecap="round" stroke-linejoin="round"/><path d="M1191 78L1169 139L1152 199L1138 260" stroke="#14171b" stroke-width="1.5" opacity="0.34" fill="none" stroke-linecap="round" stroke-linejoin="round"/><path d="M621 -2L620 21L619 45L617 69L615 93" stroke="#d6d6d2" stroke-width="2" opacity="0.15" fill="none" stroke-linecap="round" stroke-linejoin="round"/><path d="M803 686L804 689L803 693L796 696L801 700L797 703" stroke="#14171b" stroke-width="3" opacity="0.55" fill="none" stroke-linecap="round" stroke-linejoin="round"/><path d="M215 446L213 475L211 503L209 532L205 560L202 589" stroke="#d6d6d2" stroke-width="1" opacity="0.19" fill="none" stroke-linecap="round" stroke-linejoin="round"/><path d="M175 439L174 444L173 449L168 455L172 460L170 466" stroke="#14171b" stroke-width="1.5" opacity="0.31" fill="none" stroke-linecap="round" stroke-linejoin="round"/><path d="M387 29L383 44L376 59L369 74" stroke="#d6d6d2" stroke-width="3" opacity="0.24" fill="none" stroke-linecap="round" stroke-linejoin="round"/><path d="M937 705L936 717L932 729L926 741L928 753L923 765" stroke="#14171b" stroke-width="1" opacity="0.32" fill="none" stroke-linecap="round" stroke-linejoin="round"/><path d="M1199 389L1197 402L1194 415L1189 427L1190 440L1186 452" stroke="#14171b" stroke-width="2" opacity="0.25" fill="none" stroke-linecap="round" stroke-linejoin="round"/><path d="M1096 598L1100 608L1095 618L1100 628" stroke="#14171b" stroke-width="1" opacity="0.34" fill="none" stroke-linecap="round" stroke-linejoin="round"/><path d="M7 561L4 568L7 575L7 581L5 588" stroke="#d6d6d2" stroke-width="1.5" opacity="0.16" fill="none" stroke-linecap="round" stroke-linejoin="round"/><path d="M836 761L839 765L836 769L838 773L835 777" stroke="#14171b" stroke-width="1.5" opacity="0.44" fill="none" stroke-linecap="round" stroke-linejoin="round"/><path d="M189 658L193 662L194 666L197 670L195 674" stroke="#14171b" stroke-width="1" opacity="0.39" fill="none" stroke-linecap="round" stroke-linejoin="round"/><path d="M1099 625L1099 631L1092 637L1090 643L1084 649L1086 655" stroke="#14171b" stroke-width="2" opacity="0.26" fill="none" stroke-linecap="round" stroke-linejoin="round"/><path d="M78 585L83 594L86 603L87 611" stroke="#14171b" stroke-width="2" opacity="0.52" fill="none" stroke-linecap="round" stroke-linejoin="round"/><path d="M895 748L899 757L897 767" stroke="#14171b" stroke-width="3" opacity="0.43" fill="none" stroke-linecap="round" stroke-linejoin="round"/><path d="M1316 327L1317 332L1316 336" stroke="#14171b" stroke-width="1" opacity="0.37" fill="none" stroke-linecap="round" stroke-linejoin="round"/><path d="M1197 617L1196 654L1189 691L1185 727L1182 764" stroke="#14171b" stroke-width="2" opacity="0.34" fill="none" stroke-linecap="round" stroke-linejoin="round"/><path d="M37 54L40 62L39 70L48 78L46 85" stroke="#d6d6d2" stroke-width="1.5" opacity="0.17" fill="none" stroke-linecap="round" stroke-linejoin="round"/><path d="M127 504L127 520L133 535L137 550L134 565" stroke="#14171b" stroke-width="1.5" opacity="0.33" fill="none" stroke-linecap="round" stroke-linejoin="round"/><path d="M313 635L313 655L313 675L311 695L307 715L309 734" stroke="#d6d6d2" stroke-width="0.8" opacity="0.22" fill="none" stroke-linecap="round" stroke-linejoin="round"/><path d="M1346 685L1339 724L1340 764L1334 803" stroke="#14171b" stroke-width="2" opacity="0.33" fill="none" stroke-linecap="round" stroke-linejoin="round"/><path d="M239 749L235 806L234 863" stroke="#d6d6d2" stroke-width="0.8" opacity="0.17" fill="none" stroke-linecap="round" stroke-linejoin="round"/></g>
<g transform="rotate(9 683 384)"><rect x="-200" y="-200" width="1800" height="1200" fill="#000" filter="url(#rock)" opacity="0.16"/></g>
<g transform="rotate(11 683 384)"><rect x="-200" y="-200" width="1800" height="1200" filter="url(#rock2)" opacity="0.07"/></g>
<rect width="1366" height="768" fill="#000" filter="url(#grain)" opacity="0.15"/>
<rect width="1366" height="768" fill="#fff" filter="url(#grain)" opacity="0.06" transform="translate(3,5)"/>
</svg></div>
<div class="a" style="left:17px;top:290.5px"><svg width="40" height="45" viewBox="0 0 40 45"><path d="M1.300 6.800L17.500 2.500L38.600 8.200L22.700 13Z" fill="#c9ced3" opacity="0.950"/><path d="M9 5L12 1.500L16 0.800L19 3L24 1.500L28 3.500L29.500 8L26 11.500L20 10L16 11L11 9Z" fill="#f1f2f3"/><path d="M16 4L19 3L22 6L21 10L17 9Z" fill="#dfe2e5"/><path d="M1.300 6.800L22.700 13L22.100 43.300L5.300 37.300Z" fill="#eceef0" opacity="0.960"/><path d="M22.700 13L38.600 8.200L34.100 37.900L22.100 43.300Z" fill="#dde0e3" opacity="0.960"/><path d="M1.300 6.800L22.700 13L38.600 8.200" fill="none" stroke="#f8f9fa" stroke-width="1"/><g fill="none" stroke="#1583dd" stroke-width="3.200"><path d="M8.800 17.500A6.300 6.300 0 0 1 16.800 20"/><path d="M18.300 25.500A6.300 6.300 0 0 1 13.300 31"/><path d="M9 29.500A6.300 6.300 0 0 1 6 22.500"/></g><path d="M14.500 21.500L18.800 17.500L19 23Z M16 27.500L11 33.500L10.500 28Z M4 25.500L6.500 20L9.500 25Z" fill="#1583dd"/></svg></div><div class="a" style="left:7.25px;top:340.80px;line-height:16px;font-size:12px;color:#fff;white-space:pre;font-family:'Liberation Sans',sans-serif;letter-spacing:-0.351px;text-shadow:1px 1px 1px #000,0 0 3px #000,1px 1px 3px rgba(0,0,0,.9),0 1px 2px rgba(0,0,0,.8);">Recycle Bin</div>
<div class="a" style="left:96.0px;top:292.5px"><svg width="32" height="42" viewBox="0 0 32 42"><path d="M0.5 0.5h23l7.5 7.5v33.5h-30.5z" fill="#fdfdfd" stroke="#b4b4b4"/><rect x="3.5" y="4" width="17" height="1" fill="#9c9c9c"/><rect x="3.5" y="7" width="17" height="1" fill="#9c9c9c"/><rect x="3.5" y="10" width="24" height="1" fill="#9c9c9c"/><rect x="3.5" y="13" width="24" height="1" fill="#9c9c9c"/><rect x="3.5" y="16" width="24" height="1" fill="#9c9c9c"/><rect x="3.5" y="19" width="24" height="1" fill="#9c9c9c"/><rect x="3.5" y="22" width="24" height="1" fill="#9c9c9c"/><rect x="3.5" y="25" width="24" height="1" fill="#9c9c9c"/><rect x="3.5" y="28" width="24" height="1" fill="#9c9c9c"/><rect x="3.5" y="31" width="24" height="1" fill="#9c9c9c"/><rect x="3.5" y="34" width="24" height="1" fill="#9c9c9c"/><rect x="3.5" y="37" width="24" height="1" fill="#9c9c9c"/><path d="M23.5 0.5v7.5h7.5z" fill="#e4e4e4" stroke="#b4b4b4" stroke-linejoin="round"/></svg></div><div class="a" style="left:87.25px;top:340.80px;line-height:16px;font-size:12px;color:#fff;white-space:pre;font-family:'Liberation Sans',sans-serif;letter-spacing:0.054px;text-shadow:1px 1px 1px #000,0 0 3px #000,1px 1px 3px rgba(0,0,0,.9),0 1px 2px rgba(0,0,0,.8);">quicksort</div><div class="a" style="left:96.25px;top:355.60px;line-height:16px;font-size:12px;color:#fff;white-space:pre;font-family:'Liberation Sans',sans-serif;letter-spacing:-0.140px;text-shadow:1px 1px 1px #000,0 0 3px #000,1px 1px 3px rgba(0,0,0,.9),0 1px 2px rgba(0,0,0,.8);">C#.txt</div>
<div class="a" style="left:170.7px;top:295.0px"><svg width="32" height="42" viewBox="0 0 32 42"><path d="M0.100 0.300L24.600 0L24.900 4L28.600 4.400L29 25.800L30.800 27.700L30.500 38.900L26.800 39.200L19 40.200L19.900 7.800L5 2.200Z" fill="#f1cd63"/><path d="M20.200 7.800L26.500 9L26.500 39.800L19.300 38.600Z" fill="#eef1f4"/><path d="M20.900 10.900L24.900 11.500V13L20.900 12.400ZM20.900 14L24.900 14.600V16.100L20.900 15.500ZM20.900 17.100L24.900 17.700V19.200L20.900 18.600ZM20.900 20.500L24.900 21.100V27.500L20.900 26.900Z" fill="#4a9ad8"/><path d="M20.900 25L24.900 26V27.500L20.900 26.900Z" fill="#3d7f3a"/><path d="M5 2.200L19.900 7.800L19 40.200L9 37.400L8.700 5.300Z" fill="#f7d979"/><path d="M0.100 0.300L8.700 5.300L9 40.800L0.300 34.600Z" fill="#fbe497"/></svg></div><div class="a" style="left:159.00px;top:340.80px;line-height:16px;font-size:12px;color:#fff;white-space:pre;font-family:'Liberation Sans',sans-serif;letter-spacing:0.066px;text-shadow:1px 1px 1px #000,0 0 3px #000,1px 1px 3px rgba(0,0,0,.9),0 1px 2px rgba(0,0,0,.8);">Old family</div><div class="a" style="left:161.00px;top:355.60px;line-height:16px;font-size:12px;color:#fff;white-space:pre;font-family:'Liberation Sans',sans-serif;letter-spacing:0.072px;text-shadow:1px 1px 1px #000,0 0 3px #000,1px 1px 3px rgba(0,0,0,.9),0 1px 2px rgba(0,0,0,.8);">comput...</div>
<div class="a" style="left:21.7px;top:397.8px"><svg width="32" height="42" viewBox="0 0 32 42"><path d="M0.100 0.300L24.600 0L24.900 4.500L9 5.300Z" fill="#f1cd63"/><path d="M6 2.500L30.500 6L30.800 39L21.500 36L21.300 9Z" fill="#f4f4f4"/><path d="M5 2.800L21.800 8.800L21.600 41L9 36.500L8.700 5.300Z" fill="#fbfbfb"/><path d="M9 10.500L21.500 15" stroke="#555" stroke-width="0.800"/><path d="M22 10.500L30 11.500" stroke="#777" stroke-width="0.700"/><polygon points="16.1,18.7 16.1,19.3 15.2,19.6 15.1,20.1 15.6,20.8 15.2,21.4 14.3,21.1 13.9,21.4 13.9,22.3 13.3,22.5 12.8,21.8 12.2,21.8 11.7,22.5 11.1,22.3 11.1,21.4 10.7,21.1 9.8,21.4 9.4,20.8 9.9,20.1 9.8,19.6 8.9,19.3 8.9,18.7 9.8,18.4 9.9,17.9 9.4,17.2 9.8,16.6 10.7,16.9 11.1,16.6 11.1,15.7 11.7,15.5 12.2,16.2 12.8,16.2 13.3,15.5 13.9,15.7 13.9,16.6 14.3,16.9 15.2,16.6 15.6,17.2 15.1,17.9 15.2,18.4" fill="#b7c0ca"/><circle cx="12.5" cy="19" r="1.5" fill="#fbfbfb"/><polygon points="18.8,26.7 18.8,27.3 18.1,27.5 18.0,27.9 18.4,28.4 18.1,28.8 17.4,28.6 17.1,28.9 17.1,29.6 16.6,29.7 16.2,29.2 15.8,29.2 15.4,29.7 14.9,29.6 14.9,28.9 14.6,28.6 13.9,28.8 13.6,28.4 14.0,27.9 13.9,27.5 13.2,27.3 13.2,26.7 13.9,26.5 14.0,26.1 13.6,25.6 13.9,25.2 14.6,25.4 14.9,25.1 14.9,24.4 15.4,24.3 15.8,24.8 16.2,24.8 16.6,24.3 17.1,24.4 17.1,25.1 17.4,25.4 18.1,25.2 18.4,25.6 18.0,26.1 18.1,26.5" fill="#b7c0ca"/><circle cx="16" cy="27" r="1.2" fill="#fbfbfb"/><polygon points="25.8,24.8 25.8,25.2 25.2,25.4 25.1,25.7 25.5,26.2 25.2,26.5 24.7,26.4 24.4,26.5 24.4,27.1 24.0,27.2 23.7,26.8 23.3,26.8 23.0,27.2 22.6,27.1 22.6,26.5 22.3,26.4 21.8,26.5 21.5,26.2 21.9,25.7 21.8,25.4 21.2,25.2 21.2,24.8 21.8,24.6 21.9,24.3 21.5,23.8 21.8,23.5 22.3,23.6 22.6,23.5 22.6,22.9 23.0,22.8 23.3,23.2 23.7,23.2 24.0,22.8 24.4,22.9 24.4,23.5 24.7,23.6 25.2,23.5 25.5,23.8 25.1,24.3 25.2,24.6" fill="#c3cad2"/><circle cx="23.5" cy="25" r="1.0" fill="#f4f4f4"/><path d="M9 31.500L21.500 35.500" stroke="#f0d27a" stroke-width="0.900"/><path d="M22 32L28.500 32.500" stroke="#f0d27a" stroke-width="0.900"/><path d="M0.100 0.300L8.700 5.300L9 40.800L0.300 34.600Z" fill="#fbe497"/></svg></div><div class="a" style="left:10.25px;top:443.60px;line-height:16px;font-size:12px;color:#fff;white-space:pre;font-family:'Liberation Sans',sans-serif;letter-spacing:0.090px;text-shadow:1px 1px 1px #000,0 0 3px #000,1px 1px 3px rgba(0,0,0,.9),0 1px 2px rgba(0,0,0,.8);">emulators</div>
<div class="a" style="left:96.0px;top:395.3px"><svg width="32" height="42" viewBox="0 0 32 42"><path d="M0.5 0.5h23l7.5 7.5v33.5h-30.5z" fill="#fdfdfd" stroke="#b4b4b4"/><rect x="3.5" y="4" width="17" height="1" fill="#9c9c9c"/><rect x="3.5" y="7" width="17" height="1" fill="#9c9c9c"/><rect x="3.5" y="10" width="24" height="1" fill="#9c9c9c"/><rect x="3.5" y="13" width="24" height="1" fill="#9c9c9c"/><rect x="3.5" y="16" width="24" height="1" fill="#9c9c9c"/><rect x="3.5" y="19" width="24" height="1" fill="#9c9c9c"/><rect x="3.5" y="22" width="24" height="1" fill="#9c9c9c"/><rect x="3.5" y="25" width="24" height="1" fill="#9c9c9c"/><rect x="3.5" y="28" width="24" height="1" fill="#9c9c9c"/><rect x="3.5" y="31" width="24" height="1" fill="#9c9c9c"/><rect x="3.5" y="34" width="24" height="1" fill="#9c9c9c"/><rect x="3.5" y="37" width="24" height="1" fill="#9c9c9c"/><path d="M23.5 0.5v7.5h7.5z" fill="#e4e4e4" stroke="#b4b4b4" stroke-linejoin="round"/></svg></div><div class="a" style="left:97.00px;top:443.60px;line-height:16px;font-size:12px;color:#fff;white-space:pre;font-family:'Liberation Sans',sans-serif;letter-spacing:-1.085px;text-shadow:1px 1px 1px #000,0 0 3px #000,1px 1px 3px rgba(0,0,0,.9),0 1px 2px rgba(0,0,0,.8);">READ</div><div class="a" style="left:90.00px;top:458.40px;line-height:16px;font-size:12px;color:#fff;white-space:pre;font-family:'Liberation Sans',sans-serif;letter-spacing:-0.042px;text-shadow:1px 1px 1px #000,0 0 3px #000,1px 1px 3px rgba(0,0,0,.9),0 1px 2px rgba(0,0,0,.8);">THIS.txt</div>
<div class="a" style="left:21.7px;top:500.6px"><svg width="32" height="42" viewBox="0 0 32 42"><path d="M0.100 0.300L24.600 0L24.900 4.500L9 5.300Z" fill="#f1cd63"/><path d="M6 2.500L30.500 6L30.800 39L21.500 36L21.300 9Z" fill="#f4f4f4"/><path d="M5 2.800L21.800 8.800L21.600 41L9 36.500L8.700 5.300Z" fill="#fbfbfb"/><path d="M9 10.500L21.500 15" stroke="#555" stroke-width="0.800"/><path d="M22 10.500L30 11.500" stroke="#777" stroke-width="0.700"/><path d="M0.100 0.300L8.700 5.300L9 40.800L0.300 34.600Z" fill="#fbe497"/></svg></div><div class="a" style="left:6.00px;top:546.40px;line-height:16px;font-size:12px;color:#fff;white-space:pre;font-family:'Liberation Sans',sans-serif;letter-spacing:-0.610px;text-shadow:1px 1px 1px #000,0 0 3px #000,1px 1px 3px rgba(0,0,0,.9),0 1px 2px rgba(0,0,0,.8);">Secure Save</div><div class="a" style="left:18.25px;top:561.20px;line-height:16px;font-size:12px;color:#fff;white-space:pre;font-family:'Liberation Sans',sans-serif;letter-spacing:-0.418px;text-shadow:1px 1px 1px #000,0 0 3px #000,1px 1px 3px rgba(0,0,0,.9),0 1px 2px rgba(0,0,0,.8);">System</div>
<div class="a" style="left:96.0px;top:498.1px"><svg width="32" height="42" viewBox="0 0 32 42"><path d="M0.5 0.5h23l7.5 7.5v33.5h-30.5z" fill="#fdfdfd" stroke="#b4b4b4"/><rect x="3.5" y="4" width="17" height="1" fill="#9c9c9c"/><rect x="3.5" y="7" width="17" height="1" fill="#9c9c9c"/><rect x="3.5" y="10" width="24" height="1" fill="#9c9c9c"/><rect x="3.5" y="13" width="24" height="1" fill="#9c9c9c"/><rect x="3.5" y="16" width="24" height="1" fill="#9c9c9c"/><rect x="3.5" y="19" width="24" height="1" fill="#9c9c9c"/><rect x="3.5" y="22" width="24" height="1" fill="#9c9c9c"/><rect x="3.5" y="25" width="24" height="1" fill="#9c9c9c"/><rect x="3.5" y="28" width="24" height="1" fill="#9c9c9c"/><rect x="3.5" y="31" width="24" height="1" fill="#9c9c9c"/><rect x="3.5" y="34" width="24" height="1" fill="#9c9c9c"/><rect x="3.5" y="37" width="24" height="1" fill="#9c9c9c"/><path d="M23.5 0.5v7.5h7.5z" fill="#e4e4e4" stroke="#b4b4b4" stroke-linejoin="round"/></svg></div><div class="a" style="left:91.75px;top:546.40px;line-height:16px;font-size:12px;color:#fff;white-space:pre;font-family:'Liberation Sans',sans-serif;letter-spacing:0.116px;text-shadow:1px 1px 1px #000,0 0 3px #000,1px 1px 3px rgba(0,0,0,.9),0 1px 2px rgba(0,0,0,.8);">Startup</div><div class="a" style="left:79.00px;top:561.20px;line-height:16px;font-size:12px;color:#fff;white-space:pre;font-family:'Liberation Sans',sans-serif;letter-spacing:0.193px;text-shadow:1px 1px 1px #000,0 0 3px #000,1px 1px 3px rgba(0,0,0,.9),0 1px 2px rgba(0,0,0,.8);">reminder.txt</div>
<div class="a" style="left:16.5px;top:605.4px"><svg width="42" height="31" viewBox="0 0 42 31"><rect x="0.5" y="0.5" width="41" height="30" fill="#f4f5f6" stroke="#aab0b6"/><rect x="1" y="1" width="40" height="3" fill="#c9ced3"/><rect x="32" y="1.5" width="2" height="1.5" fill="#fff"/><rect x="35" y="1.5" width="2" height="1.5" fill="#fff"/><rect x="38" y="1.5" width="2" height="1.5" fill="#fff"/><polygon points="24.0,12.3 24.0,13.7 22.1,14.4 21.7,15.5 22.9,17.1 22.0,18.3 20.1,17.7 19.2,18.4 19.1,20.4 17.8,20.8 16.6,19.2 15.4,19.2 14.2,20.8 12.9,20.4 12.8,18.4 11.9,17.7 10.0,18.3 9.1,17.1 10.3,15.5 9.9,14.4 8.0,13.7 8.0,12.3 9.9,11.6 10.3,10.5 9.1,8.9 10.0,7.7 11.9,8.3 12.8,7.6 12.9,5.6 14.2,5.2 15.4,6.8 16.6,6.8 17.8,5.2 19.1,5.6 19.2,7.6 20.1,8.3 22.0,7.7 22.9,8.9 21.7,10.5 22.1,11.6" fill="#b9c0c8"/><circle cx="16" cy="13" r="3.4" fill="#f4f5f6"/><polygon points="33.0,21.5 33.0,22.5 31.6,23.0 31.3,23.8 32.2,25.1 31.5,25.9 30.1,25.5 29.4,26.0 29.4,27.5 28.3,27.8 27.4,26.7 26.6,26.7 25.7,27.8 24.6,27.5 24.6,26.0 23.9,25.5 22.5,25.9 21.8,25.1 22.7,23.8 22.4,23.0 21.0,22.5 21.0,21.5 22.4,21.0 22.7,20.2 21.8,18.9 22.5,18.1 23.9,18.5 24.6,18.0 24.6,16.5 25.7,16.2 26.6,17.3 27.4,17.3 28.3,16.2 29.4,16.5 29.4,18.0 30.1,18.5 31.5,18.1 32.2,18.9 31.3,20.2 31.6,21.0" fill="#b9c0c8"/><circle cx="27" cy="22" r="2.5" fill="#f4f5f6"/></svg></div><div class="a" style="left:3.25px;top:649.20px;line-height:16px;font-size:12px;color:#fff;white-space:pre;font-family:'Liberation Sans',sans-serif;letter-spacing:-0.038px;text-shadow:1px 1px 1px #000,0 0 3px #000,1px 1px 3px rgba(0,0,0,.9),0 1px 2px rgba(0,0,0,.8);">cortana killer</div><div class="a" style="left:12.00px;top:664.00px;line-height:16px;font-size:12px;color:#fff;white-space:pre;font-family:'Liberation Sans',sans-serif;text-shadow:1px 1px 1px #000,0 0 3px #000,1px 1px 3px rgba(0,0,0,.9),0 1px 2px rgba(0,0,0,.8);">(if so).bat</div>
<div class="a" style="left:91.0px;top:605.4px"><svg width="42" height="31" viewBox="0 0 42 31"><rect x="0.5" y="0.5" width="41" height="30" fill="#f4f5f6" stroke="#aab0b6"/><rect x="1" y="1" width="40" height="3" fill="#c9ced3"/><rect x="32" y="1.5" width="2" height="1.5" fill="#fff"/><rect x="35" y="1.5" width="2" height="1.5" fill="#fff"/><rect x="38" y="1.5" width="2" height="1.5" fill="#fff"/><polygon points="24.0,12.3 24.0,13.7 22.1,14.4 21.7,15.5 22.9,17.1 22.0,18.3 20.1,17.7 19.2,18.4 19.1,20.4 17.8,20.8 16.6,19.2 15.4,19.2 14.2,20.8 12.9,20.4 12.8,18.4 11.9,17.7 10.0,18.3 9.1,17.1 10.3,15.5 9.9,14.4 8.0,13.7 8.0,12.3 9.9,11.6 10.3,10.5 9.1,8.9 10.0,7.7 11.9,8.3 12.8,7.6 12.9,5.6 14.2,5.2 15.4,6.8 16.6,6.8 17.8,5.2 19.1,5.6 19.2,7.6 20.1,8.3 22.0,7.7 22.9,8.9 21.7,10.5 22.1,11.6" fill="#b9c0c8"/><circle cx="16" cy="13" r="3.4" fill="#f4f5f6"/><polygon points="33.0,21.5 33.0,22.5 31.6,23.0 31.3,23.8 32.2,25.1 31.5,25.9 30.1,25.5 29.4,26.0 29.4,27.5 28.3,27.8 27.4,26.7 26.6,26.7 25.7,27.8 24.6,27.5 24.6,26.0 23.9,25.5 22.5,25.9 21.8,25.1 22.7,23.8 22.4,23.0 21.0,22.5 21.0,21.5 22.4,21.0 22.7,20.2 21.8,18.9 22.5,18.1 23.9,18.5 24.6,18.0 24.6,16.5 25.7,16.2 26.6,17.3 27.4,17.3 28.3,16.2 29.4,16.5 29.4,18.0 30.1,18.5 31.5,18.1 32.2,18.9 31.3,20.2 31.6,21.0" fill="#b9c0c8"/><circle cx="27" cy="22" r="2.5" fill="#f4f5f6"/></svg></div><div class="a" style="left:88.5px;top:632.9px"><svg width="13" height="13" viewBox="0 0 13 13"><rect x="0.5" y="0.5" width="12" height="12" fill="#f4f4f4" stroke="#c8c8c8"/><path d="M3.5 11 C3 7 5 5 8 5 L8 3 L11.5 6.2 L8 9.4 L8 7.4 C6 7.4 4.5 8.3 3.5 11Z" fill="#2a61c0"/></svg></div><div class="a" style="left:91.50px;top:649.20px;line-height:16px;font-size:12px;color:#fff;white-space:pre;font-family:'Liberation Sans',sans-serif;letter-spacing:-0.288px;text-shadow:1px 1px 1px #000,0 0 3px #000,1px 1px 3px rgba(0,0,0,.9),0 1px 2px rgba(0,0,0,.8);">Taskbar</div><div class="a" style="left:77.50px;top:664.00px;line-height:16px;font-size:12px;color:#fff;white-space:pre;font-family:'Liberation Sans',sans-serif;letter-spacing:-0.180px;text-shadow:1px 1px 1px #000,0 0 3px #000,1px 1px 3px rgba(0,0,0,.9),0 1px 2px rgba(0,0,0,.8);">restarter.ba...</div>
<div class="a" style="left:21.5px;top:703.7px"><svg width="32" height="42" viewBox="0 0 32 42"><path d="M0.5 0.5h23l7.5 7.5v33.5h-30.5z" fill="#fdfdfd" stroke="#b4b4b4"/><rect x="3.5" y="4" width="17" height="1" fill="#9c9c9c"/><rect x="3.5" y="7" width="17" height="1" fill="#9c9c9c"/><rect x="3.5" y="10" width="24" height="1" fill="#9c9c9c"/><rect x="3.5" y="13" width="24" height="1" fill="#9c9c9c"/><rect x="3.5" y="16" width="24" height="1" fill="#9c9c9c"/><rect x="3.5" y="19" width="24" height="1" fill="#9c9c9c"/><rect x="3.5" y="22" width="24" height="1" fill="#9c9c9c"/><rect x="3.5" y="25" width="24" height="1" fill="#9c9c9c"/><rect x="3.5" y="28" width="24" height="1" fill="#9c9c9c"/><rect x="3.5" y="31" width="24" height="1" fill="#9c9c9c"/><rect x="3.5" y="34" width="24" height="1" fill="#9c9c9c"/><rect x="3.5" y="37" width="24" height="1" fill="#9c9c9c"/><path d="M23.5 0.5v7.5h7.5z" fill="#e4e4e4" stroke="#b4b4b4" stroke-linejoin="round"/></svg></div><div class="a" style="left:9.00px;top:752.00px;line-height:16px;font-size:12px;color:#fff;white-space:pre;font-family:'Liberation Sans',sans-serif;text-shadow:1px 1px 1px #000,0 0 3px #000,1px 1px 3px rgba(0,0,0,.9),0 1px 2px rgba(0,0,0,.8);">Interesting</div><div class="a" style="left:3.00px;top:766.80px;line-height:16px;font-size:12px;color:#fff;white-space:pre;font-family:'Liberation Sans',sans-serif;letter-spacing:0.013px;text-shadow:1px 1px 1px #000,0 0 3px #000,1px 1px 3px rgba(0,0,0,.9),0 1px 2px rgba(0,0,0,.8);">geek stuff.txt</div>
<div class="a" style="left:90.2px;top:702.7px"><svg width="43.5" height="43.5" viewBox="0 0 100 100"><path d="M3 48.500L84 3Q108 50 86 97Z" fill="#1a1a1a" stroke="#1a1a1a" stroke-width="4" stroke-linejoin="round"/><path d="M21.200 44.600L74.600 14.400L57.300 44.900ZM21.700 55.400L57.300 55.100L74.200 85.900ZM82.700 20.800L92.900 50L82.700 79.700L67 50Z" fill="#fff"/></svg></div><div class="a" style="left:88.5px;top:735.7px"><svg width="13" height="13" viewBox="0 0 13 13"><rect x="0.5" y="0.5" width="12" height="12" fill="#f4f4f4" stroke="#c8c8c8"/><path d="M3.5 11 C3 7 5 5 8 5 L8 3 L11.5 6.2 L8 9.4 L8 7.4 C6 7.4 4.5 8.3 3.5 11Z" fill="#2a61c0"/></svg></div><div class="a" style="left:101.50px;top:752.00px;line-height:16px;font-size:12px;color:#fff;white-space:pre;font-family:'Liberation Sans',sans-serif;letter-spacing:-0.226px;text-shadow:1px 1px 1px #000,0 0 3px #000,1px 1px 3px rgba(0,0,0,.9),0 1px 2px rgba(0,0,0,.8);">The</div><div class="a" style="left:85.50px;top:766.80px;line-height:16px;font-size:12px;color:#fff;white-space:pre;font-family:'Liberation Sans',sans-serif;letter-spacing:-0.185px;text-shadow:1px 1px 1px #000,0 0 3px #000,1px 1px 3px rgba(0,0,0,.9),0 1px 2px rgba(0,0,0,.8);">(outdate...</div>
<div class="a" style="left:21.5px;top:806.5px"><svg width="32" height="42" viewBox="0 0 32 42"><path d="M0.5 0.5h23l7.5 7.5v33.5h-30.5z" fill="#fdfdfd" stroke="#b4b4b4"/><rect x="3.5" y="4" width="17" height="1" fill="#9c9c9c"/><rect x="3.5" y="7" width="17" height="1" fill="#9c9c9c"/><rect x="3.5" y="10" width="24" height="1" fill="#9c9c9c"/><rect x="3.5" y="13" width="24" height="1" fill="#9c9c9c"/><rect x="3.5" y="16" width="24" height="1" fill="#9c9c9c"/><rect x="3.5" y="19" width="24" height="1" fill="#9c9c9c"/><rect x="3.5" y="22" width="24" height="1" fill="#9c9c9c"/><rect x="3.5" y="25" width="24" height="1" fill="#9c9c9c"/><rect x="3.5" y="28" width="24" height="1" fill="#9c9c9c"/><rect x="3.5" y="31" width="24" height="1" fill="#9c9c9c"/><rect x="3.5" y="34" width="24" height="1" fill="#9c9c9c"/><rect x="3.5" y="37" width="24" height="1" fill="#9c9c9c"/><path d="M23.5 0.5v7.5h7.5z" fill="#e4e4e4" stroke="#b4b4b4" stroke-linejoin="round"/></svg></div><div class="a" style="left:14px;top:838.5px"><svg width="13" height="13" viewBox="0 0 13 13"><rect x="0.5" y="0.5" width="12" height="12" fill="#f4f4f4" stroke="#c8c8c8"/><path d="M3.5 11 C3 7 5 5 8 5 L8 3 L11.5 6.2 L8 9.4 L8 7.4 C6 7.4 4.5 8.3 3.5 11Z" fill="#2a61c0"/></svg></div><div class="a" style="left:10.00px;top:854.80px;line-height:16px;font-size:12px;color:#fff;white-space:pre;font-family:'Liberation Sans',sans-serif;letter-spacing:-0.402px;text-shadow:1px 1px 1px #000,0 0 3px #000,1px 1px 3px rgba(0,0,0,.9),0 1px 2px rgba(0,0,0,.8);">CYB next -</div><div class="a" style="left:14.50px;top:869.60px;line-height:16px;font-size:12px;color:#fff;white-space:pre;font-family:'Liberation Sans',sans-serif;letter-spacing:0.039px;text-shadow:1px 1px 1px #000,0 0 3px #000,1px 1px 3px rgba(0,0,0,.9),0 1px 2px rgba(0,0,0,.8);">Shortcut</div>
<div class="a" style="left:96.2px;top:809.0px"><svg width="32" height="42" viewBox="0 0 32 42"><path d="M0.100 0.300L24.600 0L24.900 4L28.600 4.400L29 25.800L30.800 27.700L30.500 38.900L26.800 39.200L19 40.200L19.900 7.800L5 2.200Z" fill="#f1cd63"/><path d="M20.200 7.800L26.500 9L26.500 39.800L19.300 38.600Z" fill="#eef1f4"/><path d="M20.900 10.900L24.900 11.500V13L20.900 12.400ZM20.900 14L24.900 14.600V16.100L20.900 15.500ZM20.900 17.100L24.900 17.700V19.200L20.900 18.600ZM20.900 20.500L24.900 21.100V27.500L20.900 26.900Z" fill="#4a9ad8"/><path d="M20.900 25L24.900 26V27.500L20.900 26.900Z" fill="#3d7f3a"/><path d="M5 2.200L19.900 7.800L19 40.200L9 37.400L8.700 5.300Z" fill="#f7d979"/><path d="M0.100 0.300L8.700 5.300L9 40.800L0.300 34.600Z" fill="#fbe497"/></svg></div><div class="a" style="left:92.50px;top:854.80px;line-height:16px;font-size:12px;color:#fff;white-space:pre;font-family:'Liberation Sans',sans-serif;letter-spacing:-0.085px;text-shadow:1px 1px 1px #000,0 0 3px #000,1px 1px 3px rgba(0,0,0,.9),0 1px 2px rgba(0,0,0,.8);">Files of</div><div class="a" style="left:79.00px;top:869.60px;line-height:16px;font-size:12px;color:#fff;white-space:pre;font-family:'Liberation Sans',sans-serif;letter-spacing:-0.309px;text-shadow:1px 1px 1px #000,0 0 3px #000,1px 1px 3px rgba(0,0,0,.9),0 1px 2px rgba(0,0,0,.8);">resettedness</div>
<div class="a" style="left:21.5px;top:909.3px"><svg width="32" height="42" viewBox="0 0 32 42"><path d="M0.5 0.5h23l7.5 7.5v33.5h-30.5z" fill="#fdfdfd" stroke="#b4b4b4"/><rect x="3.5" y="4" width="17" height="1" fill="#9c9c9c"/><rect x="3.5" y="7" width="17" height="1" fill="#9c9c9c"/><rect x="3.5" y="10" width="24" height="1" fill="#9c9c9c"/><rect x="3.5" y="13" width="24" height="1" fill="#9c9c9c"/><rect x="3.5" y="16" width="24" height="1" fill="#9c9c9c"/><rect x="3.5" y="19" width="24" height="1" fill="#9c9c9c"/><rect x="3.5" y="22" width="24" height="1" fill="#9c9c9c"/><rect x="3.5" y="25" width="24" height="1" fill="#9c9c9c"/><rect x="3.5" y="28" width="24" height="1" fill="#9c9c9c"/><rect x="3.5" y="31" width="24" height="1" fill="#9c9c9c"/><rect x="3.5" y="34" width="24" height="1" fill="#9c9c9c"/><rect x="3.5" y="37" width="24" height="1" fill="#9c9c9c"/><path d="M23.5 0.5v7.5h7.5z" fill="#e4e4e4" stroke="#b4b4b4" stroke-linejoin="round"/></svg></div><div class="a" style="left:5.00px;top:957.60px;line-height:16px;font-size:12px;color:#fff;white-space:pre;font-family:'Liberation Sans',sans-serif;letter-spacing:-0.243px;text-shadow:1px 1px 1px #000,0 0 3px #000,1px 1px 3px rgba(0,0,0,.9),0 1px 2px rgba(0,0,0,.8);">OPTIMIZA...</div><div class="a" style="left:17.00px;top:972.40px;line-height:16px;font-size:12px;color:#fff;white-space:pre;font-family:'Liberation Sans',sans-serif;letter-spacing:-0.334px;text-shadow:1px 1px 1px #000,0 0 3px #000,1px 1px 3px rgba(0,0,0,.9),0 1px 2px rgba(0,0,0,.8);">TIPS.txt</div>
<div class="a" style="left:96.2px;top:911.8px"><svg width="32" height="42" viewBox="0 0 32 42"><path d="M0.100 0.300L24.600 0L24.900 4L28.600 4.400L29 25.800L30.800 27.700L30.500 38.900L26.800 39.200L19 40.200L19.900 7.800L5 2.200Z" fill="#f1cd63"/><path d="M20.200 7.800L26.500 9L26.500 39.800L19.300 38.600Z" fill="#eef1f4"/><path d="M20.900 10.900L24.900 11.500V13L20.900 12.400ZM20.900 14L24.900 14.600V16.100L20.900 15.500ZM20.900 17.100L24.900 17.700V19.200L20.900 18.600ZM20.900 20.500L24.900 21.100V27.500L20.900 26.900Z" fill="#4a9ad8"/><path d="M20.900 25L24.900 26V27.500L20.900 26.900Z" fill="#3d7f3a"/><path d="M5 2.200L19.900 7.800L19 40.200L9 37.400L8.700 5.300Z" fill="#f7d979"/><path d="M0.100 0.300L8.700 5.300L9 40.800L0.300 34.600Z" fill="#fbe497"/></svg></div><div class="a" style="left:79.50px;top:957.60px;line-height:16px;font-size:12px;color:#fff;white-space:pre;font-family:'Liberation Sans',sans-serif;letter-spacing:-0.668px;text-shadow:1px 1px 1px #000,0 0 3px #000,1px 1px 3px rgba(0,0,0,.9),0 1px 2px rgba(0,0,0,.8);">GOG Games</div>
<div class="a" style="left:210px;top:338px;width:927px;height:40px;background:#fff"></div><div class="a" style="left:210px;top:371px;width:927px;height:1px;background:#b9b9b9"></div><div class="a" style="left:266px;top:368px;width:57px;height:3px;background:#f0f2f5;border:1px solid #d9dbde;border-bottom:none;box-sizing:border-box"></div><div class="a" style="left:210px;top:368px;width:56px;height:4px;background:#1979ca"></div><svg class="a" style="left:219px;top:343px" width="15" height="18" viewBox="0 0 15 18"><path d="M1 1h11v16h-11z" fill="#f7d56e"/><path d="M11 8h3v9h-3z" fill="#f9df8d"/><path d="M1 16h13v1h-13z" fill="#e8bf4d"/></svg><div class="a" style="left:241px;top:346px;width:1px;height:13px;background:#a0a0a0"></div><svg class="a" style="left:250px;top:344px" width="17" height="18" viewBox="0 0 17 18"><path d="M2.5 2.5 L3.5 9.5 L10 8" fill="none" stroke="#2b79c9" stroke-width="2.2" stroke-linejoin="round" stroke-linecap="round"/><path d="M4 8.5 C7 3.5 13.5 4.5 13.8 9.5 C14 12.5 11.5 14.5 8 16.5" fill="none" stroke="#2b79c9" stroke-width="2.6" stroke-linecap="round"/></svg><svg class="a" style="left:273px;top:344px" width="17" height="18" viewBox="0 0 17 18"><path d="M14.5 2.5 L13.5 9.5 L7 8" fill="none" stroke="#9fb3cf" stroke-width="2.2" stroke-linejoin="round" stroke-linecap="round"/><path d="M13 8.5 C10 3.5 3.5 4.5 3.2 9.5 C3 12.5 5.5 14.5 9 16.5" fill="none" stroke="#9fb3cf" stroke-width="2.6" stroke-linecap="round"/></svg><svg class="a" style="left:294px;top:344px" width="18" height="17" viewBox="0 0 18 17"><rect x="1.5" y="5.5" width="14" height="6" fill="#fff" stroke="#8c8c8c"/><rect x="3" y="7" width="6" height="3" fill="#2b8be0"/><path d="M10 1.5h5M10 15.500h5M12.500 1.500v14" stroke="#555" stroke-width="1.2" fill="none"/></svg><svg class="a" style="left:317px;top:349px" width="9" height="8" viewBox="0 0 9 8"><rect x="1" y="0.5" width="7" height="1" fill="#333"/><path d="M1 3.500h7l-3.500 3.500z" fill="#222"/></svg><div class="a" style="left:333px;top:346px;width:1px;height:13px;background:#a0a0a0"></div><div class="a" style="left:341.00px;top:345.40px;line-height:16px;font-size:12px;color:#909090;white-space:pre;font-family:'Liberation Sans',sans-serif;letter-spacing:-0.891px;">CYB</div><div class="a" style="left:1018px;top:352px;width:10px;height:1px;background:#858585"></div><div class="a" style="left:1063px;top:347px;width:8px;height:8px;border:1px solid #858585"></div><svg class="a" style="left:1108.5px;top:347px" width="11" height="11" viewBox="0 0 11 11"><path d="M0.5 0.5L10.5 10.5M10.5 0.5L0.5 10.5" stroke="#858585" stroke-width="1.1"/></svg>
<div class="a" style="left:198px;top:372px;width:950px;height:505px;background:#fff;border-top:1px solid #8d8d8d;box-sizing:border-box"></div><svg class="a" style="left:206px;top:377px" width="17" height="18" viewBox="0 0 17 18"><path d="M3.500 2.500h12l-2 14h-12z" fill="#bfe3ee" stroke="#7d9aa5" stroke-width="0.8"/><path d="M2 16.500h11.500l0.500-1.500" fill="none" stroke="#d9cfae" stroke-width="1.2"/><path d="M5 5h9M4.600 7.500h9M4.300 10h9M4 12.500h9" stroke="#8ec1d1" stroke-width="0.9"/><path d="M4 1v2.500M6 1v2.500M8 1v2.500M10 1v2.500M12 1v2.500M14 1v2.500" stroke="#6a6a6a" stroke-width="0.9"/></svg><div class="a" style="left:227.50px;top:380.10px;line-height:16px;font-size:12px;color:#8e8e8e;white-space:pre;font-family:'Liberation Sans',sans-serif;letter-spacing:-0.047px;">partLooksID key.txt - Notepad</div><div class="a" style="left:1029px;top:386px;width:10px;height:1px;background:#858585"></div><div class="a" style="left:1074px;top:381px;width:8px;height:8px;border:1px solid #858585"></div><svg class="a" style="left:1119.5px;top:381px" width="11" height="11" viewBox="0 0 11 11"><path d="M0.5 0.5L10.5 10.5M10.5 0.5L0.5 10.5" stroke="#858585" stroke-width="1.1"/></svg><div class="a" style="left:205.20px;top:404.00px;line-height:16px;font-size:12px;color:#5c5a63;white-space:pre;font-family:'Liberation Sans',sans-serif;letter-spacing:-0.334px;">File</div><div class="a" style="left:237.30px;top:404.00px;line-height:16px;font-size:12px;color:#5c5a63;white-space:pre;font-family:'Liberation Sans',sans-serif;letter-spacing:-0.169px;">Edit</div><div class="a" style="left:271.00px;top:404.00px;line-height:16px;font-size:12px;color:#5c5a63;white-space:pre;font-family:'Liberation Sans',sans-serif;">Format</div><div class="a" style="left:323.00px;top:404.00px;line-height:16px;font-size:12px;color:#5c5a63;white-space:pre;font-family:'Liberation Sans',sans-serif;letter-spacing:-0.073px;">View</div><div class="a" style="left:362.00px;top:404.00px;line-height:16px;font-size:12px;color:#5c5a63;white-space:pre;font-family:'Liberation Sans',sans-serif;letter-spacing:0.080px;">Help</div><div class="a" style="left:198px;top:420px;width:950px;height:2px;background:#f0f0f0"></div><div class="a" style="left:1132px;top:422px;width:16px;height:455px;background:#f0f0f0"></div><svg class="a" style="left:1135px;top:428px" width="9" height="6" viewBox="0 0 9 6"><path d="M0.500 5L4.500 1L8.500 5" fill="none" stroke="#a8a8a8" stroke-width="1.3"/></svg><svg class="a" style="left:1135px;top:865px" width="9" height="6" viewBox="0 0 9 6"><path d="M0.500 1L4.500 5L8.500 1" fill="none" stroke="#a8a8a8" stroke-width="1.3"/></svg><div class="a" style="left:201.70px;top:422.90px;line-height:19px;font-size:14.9px;color:#000;white-space:pre;font-family:'DejaVu Sans Mono','Liberation Mono',monospace;letter-spacing:0.030px;">0 = invisible (AirPart)</div><div class="a" style="left:201.70px;top:441.80px;line-height:19px;font-size:14.9px;color:#000;white-space:pre;font-family:'DejaVu Sans Mono','Liberation Mono',monospace;letter-spacing:0.030px;">1 = 5-dimple iron (IronPart)</div><div class="a" style="left:201.70px;top:460.70px;line-height:19px;font-size:14.9px;color:#000;white-space:pre;font-family:'DejaVu Sans Mono','Liberation Mono',monospace;letter-spacing:0.030px;">2 = dirt (DirtPart)</div><div class="a" style="left:201.70px;top:479.60px;line-height:19px;font-size:14.9px;color:#000;white-space:pre;font-family:'DejaVu Sans Mono','Liberation Mono',monospace;letter-spacing:0.030px;">3 = grassy (TurfPart)</div>
<div class="a" style="left:0;top:1010px;width:1366px;height:40px;background:rgba(42,24,69,0.93)"></div><div class="a" style="left:1361px;top:1010px;width:5px;height:40px;background:#3a2b58;border-left:1px solid #5a4c74;box-sizing:border-box"></div><svg class="a" style="left:15.5px;top:1021.5px" width="17" height="16.5" viewBox="0 0 17 17"><path d="M0 2.400L7 1.400V8H0zM8 1.250L17 0V8H8zM0 9H7V15.600L0 14.600zM8 9H17V17L8 15.750z" fill="#fff"/></svg><svg class="a" style="left:61.5px;top:1023px" width="21" height="15" viewBox="0 0 21 15"><rect x="4.500" y="0.500" width="12" height="13" fill="none" stroke="#fff" stroke-width="1.2"/><path d="M2.500 2.500H0.600V11.500H2.500M18.500 2.500H20.400V11.500H18.500" fill="none" stroke="#fff" stroke-width="1.2"/></svg><div class="a" style="left:111px;top:1018px;width:24px;height:24px;background:#fff"></div><svg class="a" style="left:115px;top:1022px" width="16" height="16" viewBox="0 0 16 16"><path d="M8 8 L15.300 8" stroke="#4285f4" stroke-width="2.800" fill="none"/><path d="M13.200 3.400A6.300 6.300 0 0 0 2.700 4.700" fill="none" stroke="#ea4335" stroke-width="2.800"/><path d="M2.700 4.700A6.300 6.300 0 0 0 2.700 11.300" fill="none" stroke="#fbbc05" stroke-width="2.800"/><path d="M2.700 11.300A6.300 6.300 0 0 0 12.700 12.400" fill="none" stroke="#34a853" stroke-width="2.800"/><path d="M12.700 12.400A6.300 6.300 0 0 0 14.300 8" fill="none" stroke="#4285f4" stroke-width="2.800"/></svg><svg class="a" style="left:162px;top:1019px" width="21" height="22" viewBox="0 0 21 22"><path d="M2 0.500H18.500Q20 0.500 20 2V15.500H2z" fill="#fff"/><rect x="2.500" y="1" width="2.500" height="14" fill="#c9c3d6"/><path d="M1 16Q0.500 21 3.500 21H20V16.500" fill="none" stroke="#fff" stroke-width="1.200"/><rect x="3" y="18" width="2.500" height="3.500" fill="#fff"/><text x="6" y="12" font-family="Liberation Sans,sans-serif" font-weight="bold" font-size="9.500" fill="#2b1a45">Aa</text></svg><svg class="a" style="left:212px;top:1018px" width="18" height="24" viewBox="0 0 18 24"><rect width="18" height="24" fill="#fff"/><rect x="2" y="2.500" width="14" height="3" fill="#2b1a45"/><path d="M2.5 8.5h3.300l-3.300 3z" fill="#2b1a45"/><path d="M7.5 8.5h3.300l-3.300 3z" fill="#2b1a45"/><path d="M12.5 8.5h3.300l-3.300 3z" fill="#2b1a45"/><path d="M2.5 12.5h3.300l-3.300 3z" fill="#2b1a45"/><path d="M7.5 12.5h3.300l-3.300 3z" fill="#2b1a45"/><path d="M12.5 12.5h3.300l-3.300 3z" fill="#2b1a45"/><path d="M2.5 16.5h3.300l-3.300 3z" fill="#2b1a45"/><path d="M7.5 16.5h3.300l-3.300 3z" fill="#2b1a45"/><path d="M12.5 16.5h3.300l-3.300 3z" fill="#2b1a45"/><path d="M2.5 20.5h3.300l-3.300 3z" fill="#2b1a45"/><path d="M7.5 20.5h3.300l-3.300 3z" fill="#2b1a45"/><path d="M12.5 20.5h3.300l-3.300 3z" fill="#2b1a45"/></svg><svg class="a" style="left:257.500px;top:1019px" width="25" height="21" viewBox="0 0 25 21"><path d="M0.500 7.600L12 1L24.500 6.900V19.800H0.500z" fill="#fff"/><path d="M2.400 7.800L22.900 7.400L14.500 12.200L19.500 16.700z" fill="#2b1a45"/></svg><svg class="a" style="left:307px;top:1018px" width="24" height="24" viewBox="0 0 24 24"><path d="M2.500 7Q1 2.500 6 1.800Q9 1.500 12 3.500Q15 1.500 18 1.800Q23 2.500 21.500 7z" fill="#fff"/><circle cx="12" cy="12.800" r="9.800" fill="#2b1a45" stroke="#fff" stroke-width="1.300"/><path d="M7.500 9.500L12 13L17.500 8.500" fill="none" stroke="#fff" stroke-width="1.400"/></svg><svg class="a" style="left:357.5px;top:1019px" width="14" height="22" viewBox="0 0 14 22"><path d="M1 2L9 1V18L1 21z" fill="#e9c25a"/><path d="M3 3.500L12 4.500V20L3 19.500z" fill="#f6d977"/><path d="M1 2L4 4V21.500L1 21z" fill="#f9e08f"/></svg><div class="a" style="left:382.00px;top:1021.90px;line-height:16px;font-size:12px;color:#fff;white-space:pre;font-family:'Liberation Sans',sans-serif;letter-spacing:-0.725px;">CYB</div><div class="a" style="left:348px;top:1048px;width:152px;height:2px;background:#b79ce4"></div><svg class="a" style="left:514px;top:1020px" width="22.0" height="20.0" viewBox="0 0 22 20"><path d="M6 1.500L21 3L14.500 19L1 17.500z" fill="#9fd8e6" stroke="#dff3f8" stroke-width="1"/><path d="M8 4L19 5.200L14 17L3 15.800z" fill="#6cc0d6"/><path d="M1 17.500L14.500 19L15.500 17" fill="none" stroke="#e8e2c8" stroke-width="1.300"/></svg><div class="a" style="left:543.00px;top:1021.90px;line-height:16px;font-size:12px;color:#fff;white-space:pre;font-family:'Liberation Sans',sans-serif;letter-spacing:-0.137px;">partLooksID key.txt ...</div><div class="a" style="left:509px;top:1048px;width:152px;height:2px;background:#b79ce4"></div><svg class="a" style="left:1019px;top:1026px" width="13" height="8" viewBox="0 0 13 8"><path d="M0.700 7L6.500 1.200L12.300 7" fill="none" stroke="#fff" stroke-width="1.300"/></svg><svg class="a" style="left:1049px;top:1025px" width="17" height="11" viewBox="0 0 17 11"><rect x="0.700" y="0.700" width="13.600" height="9" fill="none" stroke="#fff" stroke-width="1.300"/><rect x="15" y="3.500" width="1.500" height="3.500" fill="#fff"/><rect x="2.500" y="2.700" width="4" height="5" fill="#fff"/></svg><svg class="a" style="left:1083px;top:1023px" width="15" height="15" viewBox="0 0 15 15"><circle cx="12" cy="12.500" r="1.600" fill="#fff"/><path d="M7.500 13.500A5 5 0 0 1 12.500 8" fill="none" stroke="#fff" stroke-width="1.200"/><path d="M4.500 13.500A8.300 8.300 0 0 1 12.500 5" fill="none" stroke="#fff" stroke-width="1.200"/><path d="M1.500 13.500A11.500 11.500 0 0 1 12.500 1.800" fill="none" stroke="#fff" stroke-width="1.200"/></svg><svg class="a" style="left:1112px;top:1022px" width="18" height="15" viewBox="0 0 18 15"><path d="M0.700 5H3.500L7 1.500V13.500L3.500 10H0.700z" fill="none" stroke="#fff" stroke-width="1.200"/><path d="M9.500 5Q11 7.500 9.500 10" fill="none" stroke="#fff" stroke-width="1.100"/><path d="M12 3Q14.500 7.500 12 12" fill="none" stroke="#cbbfe0" stroke-width="1"/><path d="M14.500 1.500Q18 7.500 14.500 13.500" fill="none" stroke="#8f7fb0" stroke-width="1"/></svg><svg class="a" style="left:1145px;top:1023px" width="16" height="14" viewBox="0 0 16 14"><rect width="16" height="14" fill="#1c5fc4"/><path d="M0.500 7.500Q8 0 15.500 6.500Q8 13.500 0.500 7.500z" fill="#fff"/><circle cx="8.500" cy="6.800" r="3.300" fill="#2a7de0"/><circle cx="8.500" cy="6.800" r="1.700" fill="#0b1c3a"/></svg><svg class="a" style="left:1180px;top:1021px" width="18" height="17" viewBox="0 0 18 17"><path d="M6 15.500C2 17 0.500 14 2.500 12C4 10.500 6 11 6.500 12.500" fill="none" stroke="#fff" stroke-width="1.300"/><path d="M6 15L12.500 1.500Q14 0.500 14.500 2.500L8.500 15.500z" fill="none" stroke="#fff" stroke-width="1.300"/><path d="M13 7.500Q17.500 7 16.500 10Q15.500 11.500 13.500 10.500" fill="none" stroke="#fff" stroke-width="1.300"/></svg><svg class="a" style="left:1216.500px;top:1023px" width="24" height="14" viewBox="0 0 24 14"><rect x="0.600" y="0.600" width="22.800" height="12.800" fill="none" stroke="#fff" stroke-width="1.200"/><rect x="3.0" y="3.2" width="1.300" height="1.200" fill="#fff"/><rect x="5.4" y="3.2" width="1.300" height="1.200" fill="#fff"/><rect x="7.8" y="3.2" width="1.300" height="1.200" fill="#fff"/><rect x="10.2" y="3.2" width="1.300" height="1.200" fill="#fff"/><rect x="12.6" y="3.2" width="1.300" height="1.200" fill="#fff"/><rect x="15.0" y="3.2" width="1.300" height="1.200" fill="#fff"/><rect x="17.4" y="3.2" width="1.300" height="1.200" fill="#fff"/><rect x="19.8" y="3.2" width="1.300" height="1.200" fill="#fff"/><rect x="3.6" y="5.8" width="1.300" height="1.200" fill="#fff"/><rect x="6.0" y="5.8" width="1.300" height="1.200" fill="#fff"/><rect x="8.4" y="5.8" width="1.300" height="1.200" fill="#fff"/><rect x="10.799999999999999" y="5.8" width="1.300" height="1.200" fill="#fff"/><rect x="13.2" y="5.8" width="1.300" height="1.200" fill="#fff"/><rect x="15.6" y="5.8" width="1.300" height="1.200" fill="#fff"/><rect x="18.0" y="5.8" width="1.300" height="1.200" fill="#fff"/><rect x="20.400000000000002" y="5.8" width="1.300" height="1.200" fill="#fff"/><rect x="3.0" y="8.4" width="1.300" height="1.200" fill="#fff"/><rect x="5.4" y="8.4" width="1.300" height="1.200" fill="#fff"/><rect x="7.8" y="8.4" width="1.300" height="1.200" fill="#fff"/><rect x="10.2" y="8.4" width="1.300" height="1.200" fill="#fff"/><rect x="12.6" y="8.4" width="1.300" height="1.200" fill="#fff"/><rect x="15.0" y="8.4" width="1.300" height="1.200" fill="#fff"/><rect x="17.4" y="8.4" width="1.300" height="1.200" fill="#fff"/><rect x="19.8" y="8.4" width="1.300" height="1.200" fill="#fff"/><rect x="6" y="10.600" width="12" height="1.100" fill="#fff"/></svg><div class="a" style="left:1260.15px;top:1012.60px;line-height:16px;font-size:12px;color:#fff;white-space:pre;font-family:'Liberation Sans',sans-serif;letter-spacing:-0.427px;">9:56 PM</div><div class="a" style="left:1255.15px;top:1031.40px;line-height:16px;font-size:12px;color:#fff;white-space:pre;font-family:'Liberation Sans',sans-serif;letter-spacing:-0.187px;">6/23/2017</div><svg class="a" style="left:1324.500px;top:1021px" width="17" height="17" viewBox="0 0 17 17"><path d="M0.700 0.700H16.300V12.300H11L8.500 15.500L6 12.300H0.700z" fill="none" stroke="#fff" stroke-width="1.300"/></svg>
<div class="a" style="left:1366px;top:0px;width:1440px;height:43px;background:#fff;"></div><div class="a" style="left:1368px;top:2.500px"><svg width="16.5" height="16.5" viewBox="0 0 100 100"><path d="M3 48.500L84 3Q108 50 86 97Z" fill="#111" stroke="#111" stroke-width="4" stroke-linejoin="round"/><path d="M24 43.500L72 17L56 43.800ZM24.500 56L56 55.800L71.500 82.500ZM82 24L91 50L82 76.500L69 50Z" fill="#fff"/></svg></div><div class="a" style="left:1389.40px;top:4.40px;line-height:16px;font-size:12px;color:#000;white-space:pre;font-family:'Liberation Sans',sans-serif;letter-spacing:-0.108px;">Unity 5.6.1f1 Personal (64bit) - Main.unity - Bode3D - Windows Store Apps &lt;DX11&gt;</div><div class="a" style="left:1373.50px;top:25.10px;line-height:16px;font-size:12px;color:#000;white-space:pre;font-family:'Liberation Sans',sans-serif;letter-spacing:-0.459px;">File</div><div class="a" style="left:1405.00px;top:25.10px;line-height:16px;font-size:12px;color:#000;white-space:pre;font-family:'Liberation Sans',sans-serif;letter-spacing:-0.169px;">Edit</div><div class="a" style="left:1439.40px;top:25.10px;line-height:16px;font-size:12px;color:#000;white-space:pre;font-family:'Liberation Sans',sans-serif;letter-spacing:-0.569px;">Assets</div><div class="a" style="left:1486.00px;top:25.10px;line-height:16px;font-size:12px;color:#000;white-space:pre;font-family:'Liberation Sans',sans-serif;letter-spacing:-0.136px;">GameObject</div><div class="a" style="left:1566.40px;top:25.10px;line-height:16px;font-size:12px;color:#000;white-space:pre;font-family:'Liberation Sans',sans-serif;letter-spacing:0.173px;">Component</div><div class="a" style="left:1644.00px;top:25.10px;line-height:16px;font-size:12px;color:#000;white-space:pre;font-family:'Liberation Sans',sans-serif;letter-spacing:0.170px;">Window</div><div class="a" style="left:1702.00px;top:25.10px;line-height:16px;font-size:12px;color:#000;white-space:pre;font-family:'Liberation Sans',sans-serif;letter-spacing:0.080px;">Help</div><div class="a" style="left:2685px;top:10px;width:10px;height:1px;background:#000;"></div><svg class="a" style="left:2730px;top:5px" width="10" height="10" viewBox="0 0 10 10"><path d="M0.500 2.500H7.500V9.500H0.500z" fill="none" stroke="#000"/><path d="M2.500 2.500V0.500H9.500V7.500H7.500" fill="none" stroke="#000"/></svg><svg class="a" style="left:2775.500px;top:5px" width="11" height="11" viewBox="0 0 11 11"><path d="M0.500 0.500L10.500 10.500M10.500 0.500L0.500 10.500" stroke="#000" stroke-width="1.100"/></svg><div class="a" style="left:1366px;top:43px;width:1440px;height:795px;background:#838383;"></div><div class="a" style="left:1366px;top:43px;width:1440px;height:1px;background:#9a9a9a;"></div><div class="a" style="left:1377.0px;top:48px;width:32.8px;height:22px;background:linear-gradient(#d2d2d2,#a9a9a9);border:1px solid #4a4a4a;border-radius:3px 0 0 3px;box-sizing:border-box;"></div><div class="a" style="left:1408.8px;top:48px;width:32.8px;height:22px;background:linear-gradient(#5f5f5f,#555);border:1px solid #4a4a4a;border-radius:0;box-sizing:border-box;"></div><div class="a" style="left:1440.6px;top:48px;width:32.8px;height:22px;background:linear-gradient(#d2d2d2,#a9a9a9);border:1px solid #4a4a4a;border-radius:0;box-sizing:border-box;"></div><div class="a" style="left:1472.4px;top:48px;width:32.8px;height:22px;background:linear-gradient(#d2d2d2,#a9a9a9);border:1px solid #4a4a4a;border-radius:0;box-sizing:border-box;"></div><div class="a" style="left:1504.2px;top:48px;width:32px;height:22px;background:linear-gradient(#d2d2d2,#a9a9a9);border:1px solid #4a4a4a;border-radius:0 3px 3px 0;box-sizing:border-box;"></div><svg class="a" style="left:1384px;top:50px" width="18" height="18" viewBox="0 0 18 18"><path d="M4.500 9.500L2.500 7.500Q1 6.500 1.500 8L5 15Q6 16.500 8 16.500H11Q13 16.500 13.500 14L15.500 8Q15.800 6.500 14.500 7L13.500 9V4.500Q13 3.300 12 4.500V8.500V3Q11.300 1.800 10.500 3V8.500V2.500Q9.800 1.300 9 2.500V8.500V4Q8.200 2.800 7.500 4V10.500" fill="#e8e8e8" stroke="#1e1e1e" stroke-width="1" stroke-linejoin="round"/></svg><svg class="a" style="left:1416px;top:50px" width="18" height="18" viewBox="0 0 18 18"><path d="M9 0.500L12 4H10V8H14V6L17.500 9L14 12V10H10V14H12L9 17.500L6 14H8V10H4V12L0.500 9L4 6V8H8V4H6z" fill="#f0f0f0"/></svg><svg class="a" style="left:1448px;top:50px" width="18" height="18" viewBox="0 0 18 18"><path d="M3 7A6 6 0 0 1 14 5.500" fill="none" stroke="#1e1e1e" stroke-width="2"/><path d="M15.500 2V7.500H10z" fill="#1e1e1e"/><path d="M15 11A6 6 0 0 1 4 12.500" fill="none" stroke="#1e1e1e" stroke-width="2"/><path d="M2.500 16V10.500H8z" fill="#1e1e1e"/></svg><svg class="a" style="left:1480px;top:50px" width="18" height="18" viewBox="0 0 18 18"><rect x="6" y="6" width="6" height="6" fill="none" stroke="#1e1e1e" stroke-width="2"/><path d="M1 1H5L1 5zM17 1V5L13 1zM1 17V13L5 17zM17 17H13L17 13z" fill="#1e1e1e"/><path d="M2 2L6 6M16 2L12 6M2 16L6 12M16 16L12 12" stroke="#1e1e1e" stroke-width="1.300"/></svg><svg class="a" style="left:1512px;top:50px" width="18" height="18" viewBox="0 0 18 18"><rect x="3" y="3" width="12" height="12" fill="none" stroke="#1e1e1e" stroke-width="1.600"/><circle cx="9" cy="9" r="2" fill="none" stroke="#1e1e1e" stroke-width="1.200"/><circle cx="3" cy="3" r="2" fill="#1e1e1e"/><circle cx="15" cy="3" r="2" fill="#1e1e1e"/><circle cx="3" cy="15" r="2" fill="#1e1e1e"/><circle cx="15" cy="15" r="2" fill="#1e1e1e"/></svg><div class="a" style="left:1556.5px;top:50.5px;width:64px;height:17.5px;background:linear-gradient(#d2d2d2,#a9a9a9);border:1px solid #4a4a4a;border-radius:3px 0 0 3px;box-sizing:border-box;"></div><div class="a" style="left:1619.5px;top:50.5px;width:64.5px;height:17.5px;background:linear-gradient(#d2d2d2,#a9a9a9);border:1px solid #4a4a4a;border-radius:0 3px 3px 0;box-sizing:border-box;"></div><svg class="a" style="left:1563.500px;top:55px" width="10" height="8" viewBox="0 0 10 8"><rect x="0" y="2" width="4" height="4" fill="#444"/><path d="M3 4H6" stroke="#c33" stroke-width="1.500"/><rect x="6" y="0.500" width="3.500" height="7" fill="#555"/></svg><div class="a" style="left:1576.50px;top:53.10px;line-height:14px;font-size:10.5px;color:#000;white-space:pre;font-family:'DejaVu Sans','Liberation Sans',sans-serif;letter-spacing:0.527px;">Center</div><svg class="a" style="left:1628.500px;top:54px" width="11" height="11" viewBox="0 0 11 11"><circle cx="5.500" cy="5.500" r="4.800" fill="#888" stroke="#555" stroke-width="0.800"/><path d="M5.500 1V10M1 5.500H10" stroke="#ddd" stroke-width="0.600"/><path d="M3.500 3V7.500H8" fill="none" stroke="#d22" stroke-width="1.200"/></svg><div class="a" style="left:1643.50px;top:53.10px;line-height:14px;font-size:10.5px;color:#000;white-space:pre;font-family:'DejaVu Sans','Liberation Sans',sans-serif;letter-spacing:0.334px;">Global</div><div class="a" style="left:2036px;top:48px;width:96px;height:22px;background:linear-gradient(#d6d6d6,#aaa);border:1px solid #3c3c3c;border-radius:4px;box-sizing:border-box;"></div><div class="a" style="left:2037px;top:49px;width:31.5px;height:20px;background:radial-gradient(ellipse at center,#666 0%,#4c4c4c 100%);border-radius:3px 0 0 3px;"></div><div class="a" style="left:2068px;top:49px;width:1px;height:20px;background:#444;"></div><div class="a" style="left:2100px;top:49px;width:1px;height:20px;background:#555;"></div><svg class="a" style="left:2036px;top:48px" width="96" height="22" viewBox="0 0 96 22"><defs><linearGradient id="pb" x1="0" y1="0" x2="0" y2="1"><stop offset="0" stop-color="#0b38d8"/><stop offset="0.250" stop-color="#0a6cff"/><stop offset="1" stop-color="#1e9bff"/></linearGradient></defs><path d="M9 4.500L23.500 11.500L9 18.500z" fill="url(#pb)"/><rect x="44" y="5" width="3.200" height="13" fill="url(#pb)"/><rect x="50" y="5" width="3.200" height="13" fill="url(#pb)"/><path d="M73 4.500L85 11.500L73 18.500z" fill="url(#pb)"/><rect x="85" y="5" width="3" height="13" fill="url(#pb)"/></svg><div class="a" style="left:2396px;top:50.5px;width:78px;height:17px;background:linear-gradient(#9a9a9a,#8c8c8c);border:1px solid #6f6f6f;border-radius:3px;box-sizing:border-box;"></div><svg class="a" style="left:2405px;top:53.500px" width="11" height="11" viewBox="0 0 11 11"><circle cx="5.500" cy="5.500" r="5.300" fill="#666"/><path d="M2.800 5.500L4.800 7.800L8.300 3.300" fill="none" stroke="#ddd" stroke-width="1.600"/></svg><div class="a" style="left:2420.50px;top:53.00px;line-height:14px;font-size:10.5px;color:#555;white-space:pre;font-family:'DejaVu Sans','Liberation Sans',sans-serif;letter-spacing:0.385px;">Collab</div><svg class="a" style="left:2461px;top:58px" width="5" height="3" viewBox="0 0 5 3"><path d="M0 0H5L2.5 3z" fill="#5a5a5a"/></svg><div class="a" style="left:2484px;top:50.5px;width:32px;height:17.5px;background:linear-gradient(#d2d2d2,#a9a9a9);border:1px solid #4a4a4a;border-radius:3px;box-sizing:border-box;"></div><svg class="a" style="left:2492px;top:54px" width="16" height="10" viewBox="0 0 16 10"><path d="M3.500 9.300Q0.700 9.300 0.700 6.800Q0.700 4.600 3.200 4.500Q3.700 0.800 7.200 0.800Q10.200 0.800 11 3.800Q15.300 3.600 15.300 6.600Q15.300 9.300 12.500 9.300z" fill="none" stroke="#222" stroke-width="1.200"/></svg><div class="a" style="left:2526px;top:50.5px;width:79.5px;height:17.5px;background:linear-gradient(#d2d2d2,#a9a9a9);border:1px solid #4a4a4a;border-radius:3px;box-sizing:border-box;"></div><div class="a" style="left:2532.50px;top:53.00px;line-height:14px;font-size:10.5px;color:#000;white-space:pre;font-family:'DejaVu Sans','Liberation Sans',sans-serif;letter-spacing:0.158px;">Account</div><svg class="a" style="left:2592.5px;top:58px" width="5.5" height="3" viewBox="0 0 5.5 3"><path d="M0 0H5.5L2.75 3z" fill="#222"/></svg><div class="a" style="left:2626px;top:50.5px;width:79.5px;height:17.5px;background:linear-gradient(#d2d2d2,#a9a9a9);border:1px solid #4a4a4a;border-radius:3px;box-sizing:border-box;"></div><div class="a" style="left:2632.50px;top:53.00px;line-height:14px;font-size:10.5px;color:#000;white-space:pre;font-family:'DejaVu Sans','Liberation Sans',sans-serif;letter-spacing:0.459px;">Layers</div><svg class="a" style="left:2692.5px;top:58px" width="5.5" height="3" viewBox="0 0 5.5 3"><path d="M0 0H5.5L2.75 3z" fill="#222"/></svg><div class="a" style="left:2716px;top:50.5px;width:79.5px;height:17.5px;background:linear-gradient(#d2d2d2,#a9a9a9);border:1px solid #4a4a4a;border-radius:3px;box-sizing:border-box;"></div><div class="a" style="left:2722.50px;top:53.00px;line-height:14px;font-size:10.5px;color:#000;white-space:pre;font-family:'DejaVu Sans','Liberation Sans',sans-serif;letter-spacing:0.468px;">Layout</div><svg class="a" style="left:2782.5px;top:58px" width="5.5" height="3" viewBox="0 0 5.5 3"><path d="M0 0H5.5L2.75 3z" fill="#222"/></svg><div class="a" style="left:1366px;top:76px;width:98px;height:16.5px;background:linear-gradient(#bebebe,#b1b1b1);border-radius:4px 4px 0 0;border:1px solid #8f8f8f;border-bottom:none;box-sizing:border-box;box-shadow:inset 0 1px 0 #cfcfcf;"></div><svg class="a" style="left:1374px;top:80px" width="11" height="8" viewBox="0 0 11 8"><path d="M0 1H2M3.500 1H11M1.500 4H3.500M5 4H11M1.500 7H3.500M5 7H11" stroke="#333" stroke-width="1.200"/></svg><div class="a" style="left:1389.20px;top:78.40px;line-height:14px;font-size:11px;color:#000;white-space:pre;font-family:'DejaVu Sans','Liberation Sans',sans-serif;letter-spacing:0.092px;">Hierarchy</div><svg class="a" style="left:1542.5px;top:80.5px" width="9" height="11" viewBox="0 0 9 11"><rect x="0.500" y="5" width="8" height="5.500" fill="#3a3a3a"/><path d="M2.300 5V3.200Q2.300 1 4.500 1Q6.700 1 6.700 3.200V5" fill="none" stroke="#3a3a3a" stroke-width="1.300"/></svg><svg class="a" style="left:1557px;top:83.5px" width="13" height="7" viewBox="0 0 13 7"><path d="M0 1.500H4L2 4z" fill="#444"/><path d="M5 1H13M5 3.500H13M5 6H13" stroke="#444" stroke-width="1"/></svg><div class="a" style="left:1366px;top:92px;width:207.5px;height:462px;background:#a1a1a1;border-right:1px solid #b0b0b0;border-bottom:1px solid #b0b0b0;box-sizing:border-box;"></div><div class="a" style="left:1366px;top:92px;width:207px;height:16.5px;background:linear-gradient(#bdbdbd,#a6a6a6);border-bottom:1px solid #7d7d7d;box-sizing:border-box;"></div><div class="a" style="left:1371px;top:92px;width:1px;height:16px;background:#8a8a8a;"></div><div class="a" style="left:1423px;top:92px;width:1px;height:16px;background:#8a8a8a;"></div><div class="a" style="left:1377.60px;top:94.60px;line-height:13px;font-size:9.8px;color:#000;white-space:pre;font-family:'DejaVu Sans','Liberation Sans',sans-serif;letter-spacing:0.073px;">Create</div><svg class="a" style="left:1416px;top:98px" width="4.5" height="2.8" viewBox="0 0 4.5 2.8"><path d="M0 0H4.5L2.25 2.8z" fill="#444"/></svg><div class="a" style="left:1431px;top:93.5px;width:129.5px;height:13px;background:linear-gradient(#b5b5b5,#bcbcbc);border:1px solid #848484;border-radius:7px;box-sizing:border-box;box-shadow:inset 0 1px 1px #999;"></div><svg class="a" style="left:1435px;top:96px" width="11" height="9" viewBox="0 0 11 9"><circle cx="3.500" cy="3.500" r="2.700" fill="none" stroke="#7a7a7a" stroke-width="1"/><path d="M5.500 5.500L7.500 8" stroke="#7a7a7a" stroke-width="1.200"/><path d="M7.500 2.500H11L9.200 5z" fill="#7a7a7a"/></svg><div class="a" style="left:1447.50px;top:94.00px;line-height:13px;font-size:10px;color:#808080;white-space:pre;font-family:'DejaVu Sans','Liberation Sans',sans-serif;letter-spacing:0.034px;">All</div><div class="a" style="left:1366px;top:108.5px;width:207px;height:18px;background:linear-gradient(#b6b6b6,#aeaeae);border-bottom:1px solid #8e8e8e;box-sizing:border-box;"></div><svg class="a" style="left:1370px;top:113.500px" width="9" height="8" viewBox="0 0 9 8"><path d="M0.500 0.500H8.500L4.500 7.500z" fill="#5d5d5d"/></svg><div class="a" style="left:1382.500px;top:110px"><svg width="15.5" height="15.5" viewBox="0 0 100 100"><path d="M3 48.500L84 3Q108 50 86 97Z" fill="#1c1c1c" stroke="#1c1c1c" stroke-width="4" stroke-linejoin="round"/><path d="M24 43.500L72 17L56 43.800ZM24.500 56L56 55.800L71.500 82.500ZM82 24L91 50L82 76.500L69 50Z" fill="#dcdcdc"/></svg></div><div class="a" style="left:1400.00px;top:111.60px;line-height:14px;font-size:11px;color:#000;white-space:pre;font-family:'DejaVu Sans','Liberation Sans',sans-serif;font-weight:bold;letter-spacing:-0.118px;">Main</div><svg class="a" style="left:1553.5px;top:114px" width="13" height="7" viewBox="0 0 13 7"><path d="M0 1.500H4L2 4z" fill="#444"/><path d="M5 1H13M5 3.500H13M5 6H13" stroke="#444" stroke-width="1"/></svg><div class="a" style="left:1396.40px;top:128.00px;line-height:14px;font-size:11px;color:#000;white-space:pre;font-family:'DejaVu Sans','Liberation Sans',sans-serif;letter-spacing:0.188px;">MainController</div><div class="a" style="left:1396.40px;top:144.00px;line-height:14px;font-size:11px;color:#000;white-space:pre;font-family:'DejaVu Sans','Liberation Sans',sans-serif;letter-spacing:0.159px;">Pausable</div><svg class="a" style="left:1385px;top:145.7px" width="8" height="10" viewBox="0 0 8 10"><path d="M0.300 0.300L7.800 5L0.300 9.700z" fill="#5c5c5c"/></svg><div class="a" style="left:1396.40px;top:160.00px;line-height:14px;font-size:11px;color:#000;white-space:pre;font-family:'DejaVu Sans','Liberation Sans',sans-serif;letter-spacing:0.138px;">Persistent canvas</div><svg class="a" style="left:1385px;top:161.7px" width="8" height="10" viewBox="0 0 8 10"><path d="M0.300 0.300L7.800 5L0.300 9.700z" fill="#5c5c5c"/></svg><div class="a" style="left:1396.40px;top:176.00px;line-height:14px;font-size:11px;color:#5c5c5c;white-space:pre;font-family:'DejaVu Sans','Liberation Sans',sans-serif;letter-spacing:0.050px;">While paused</div><svg class="a" style="left:1385px;top:177.7px" width="8" height="10" viewBox="0 0 8 10"><path d="M0.300 0.300L7.800 5L0.300 9.700z" fill="#6c6c6c"/></svg><div class="a" style="left:1396.40px;top:192.00px;line-height:14px;font-size:11px;color:#000;white-space:pre;font-family:'DejaVu Sans','Liberation Sans',sans-serif;letter-spacing:-0.183px;">Lighting</div><svg class="a" style="left:1385px;top:193.7px" width="8" height="10" viewBox="0 0 8 10"><path d="M0.300 0.300L7.800 5L0.300 9.700z" fill="#5c5c5c"/></svg><div class="a" style="left:1396.40px;top:208.00px;line-height:14px;font-size:11px;color:#000;white-space:pre;font-family:'DejaVu Sans','Liberation Sans',sans-serif;letter-spacing:0.133px;">EventSystem</div><svg class="a" style="left:1585.500px;top:79.500px" width="11" height="11" viewBox="0 0 11 11"><path d="M3 0V11M7.500 0V11M0 3H11M0 7.500H11" stroke="#333" stroke-width="1.100"/></svg><div class="a" style="left:1600.50px;top:78.40px;line-height:14px;font-size:11px;color:#000;white-space:pre;font-family:'DejaVu Sans','Liberation Sans',sans-serif;letter-spacing:0.093px;">Scene</div><div class="a" style="left:1676.5px;top:76px;width:98.5px;height:16.5px;background:linear-gradient(#bebebe,#b1b1b1);border-radius:4px 4px 0 0;border:1px solid #8f8f8f;border-bottom:none;box-sizing:border-box;box-shadow:inset 0 1px 0 #cfcfcf;"></div><svg class="a" style="left:1688px;top:80px" width="10" height="10" viewBox="0 0 10 10"><path d="M5 5L9.300 2.200A5 5 0 1 0 9.300 7.800z" fill="#222"/></svg><div class="a" style="left:1700.50px;top:78.40px;line-height:14px;font-size:11px;color:#000;white-space:pre;font-family:'DejaVu Sans','Liberation Sans',sans-serif;letter-spacing:-0.062px;">Game</div><svg class="a" style="left:1786px;top:79px" width="11" height="11" viewBox="0 0 11 11"><rect x="1" y="3.500" width="9" height="7" fill="#777" stroke="#444" stroke-width="0.800"/><path d="M0.500 3.500H10.500M3.500 3.500Q2.500 0.500 5.500 0.800Q8.500 0.500 7.500 3.500" fill="none" stroke="#444" stroke-width="1"/></svg><div class="a" style="left:1800.00px;top:78.40px;line-height:14px;font-size:11px;color:#000;white-space:pre;font-family:'DejaVu Sans','Liberation Sans',sans-serif;letter-spacing:0.260px;">Asset Store</div><svg class="a" style="left:2510px;top:84px" width="13" height="7" viewBox="0 0 13 7"><path d="M0 1.500H4L2 4z" fill="#444"/><path d="M5 1H13M5 3.500H13M5 6H13" stroke="#444" stroke-width="1"/></svg><div class="a" style="left:1577px;top:92px;width:950px;height:16.5px;background:linear-gradient(#bdbdbd,#a6a6a6);border-bottom:1px solid #777;box-sizing:border-box;"></div><div class="a" style="left:1582px;top:92px;width:1px;height:16px;background:#8a8a8a;"></div><div class="a" style="left:1739px;top:92px;width:1px;height:16px;background:#8a8a8a;"></div><div class="a" style="left:1588.00px;top:94.50px;line-height:13px;font-size:9.8px;color:#000;white-space:pre;font-family:'DejaVu Sans','Liberation Sans',sans-serif;letter-spacing:0.345px;">Free Aspect</div><svg class="a" style="left:1731px;top:96.500px" width="5" height="8" viewBox="0 0 5 8"><path d="M0.500 3L2.500 0.500L4.500 3zM0.500 5L2.500 7.500L4.500 5z" fill="#333"/></svg><div class="a" style="left:1748.60px;top:95.10px;line-height:13px;font-size:9.8px;color:#000;white-space:pre;font-family:'DejaVu Sans','Liberation Sans',sans-serif;letter-spacing:0.027px;">Scale</div><div class="a" style="left:1787px;top:99.5px;width:144px;height:3px;background:linear-gradient(#8a8a8a,#b0b0b0);border-radius:2px;border:1px solid #7a7a7a;box-sizing:border-box;"></div><div class="a" style="left:1781.5px;top:96px;width:10px;height:10px;background:radial-gradient(#d8d8d8,#a0a0a0);border:1px solid #555;border-radius:5px;box-sizing:border-box;"></div><div class="a" style="left:1939.00px;top:95.80px;line-height:12px;font-size:9.5px;color:#000;white-space:pre;font-family:'DejaVu Sans','Liberation Sans',sans-serif;letter-spacing:-0.333px;">1x</div><div class="a" style="left:2259px;top:92px;width:1px;height:16px;background:#8a8a8a;"></div><div class="a" style="left:2359px;top:92px;width:1px;height:16px;background:#8a8a8a;"></div><div class="a" style="left:2426.3px;top:92px;width:1px;height:16px;background:#8a8a8a;"></div><div class="a" style="left:2463.4px;top:92px;width:1px;height:16px;background:#8a8a8a;"></div><div class="a" style="left:2510px;top:92px;width:1px;height:16px;background:#8a8a8a;"></div><div class="a" style="left:2522.5px;top:92px;width:1px;height:16px;background:#8a8a8a;"></div><div class="a" style="left:2264.00px;top:94.50px;line-height:13px;font-size:9.8px;color:#000;white-space:pre;font-family:'DejaVu Sans','Liberation Sans',sans-serif;letter-spacing:0.186px;">Maximize On Play</div><div class="a" style="left:2364.00px;top:94.50px;line-height:13px;font-size:9.8px;color:#000;white-space:pre;font-family:'DejaVu Sans','Liberation Sans',sans-serif;letter-spacing:0.099px;">Mute Audio</div><div class="a" style="left:2431.50px;top:94.50px;line-height:13px;font-size:9.8px;color:#000;white-space:pre;font-family:'DejaVu Sans','Liberation Sans',sans-serif;letter-spacing:0.197px;">Stats</div><div class="a" style="left:2469.00px;top:94.50px;line-height:13px;font-size:9.8px;color:#000;white-space:pre;font-family:'DejaVu Sans','Liberation Sans',sans-serif;letter-spacing:0.065px;">Gizmos</div><svg class="a" style="left:2513.5px;top:98px" width="4.5" height="2.8" viewBox="0 0 4.5 2.8"><path d="M0 0H4.5L2.25 2.8z" fill="#444"/></svg><svg class="a" style="left:1577px;top:109px" width="950" height="444.5" viewBox="0 0 950 444.5"><defs><linearGradient id="sky" x1="0" y1="0" x2="0" y2="1"><stop offset="0" stop-color="#6886bb"/><stop offset="0.34" stop-color="#83a3d8"/><stop offset="0.53" stop-color="#a5c5ee"/><stop offset="0.61" stop-color="#cfe6f6"/><stop offset="0.652" stop-color="#dbf0f7"/><stop offset="0.672" stop-color="#c6dde2"/><stop offset="0.69" stop-color="#8fa3a6"/><stop offset="0.702" stop-color="#6b6163"/><stop offset="1" stop-color="#686062"/></linearGradient><pattern id="spk" width="7" height="7" patternUnits="userSpaceOnUse"><rect x="1" y="2" width="1" height="1" fill="#000" opacity="0.250"/><rect x="4" y="5" width="1" height="1" fill="#000" opacity="0.200"/><rect x="5" y="1" width="1" height="1" fill="#000" opacity="0.120"/></pattern><pattern id="grs" width="4" height="4" patternUnits="userSpaceOnUse"><rect width="4" height="4" fill="#86cf74"/><rect x="0" y="0" width="1" height="1" fill="#c9f0b8"/><rect x="2" y="2" width="1" height="1" fill="#4fa445"/><rect x="3" y="1" width="1" height="1" fill="#a9e59a"/><rect x="1" y="3" width="1" height="1" fill="#5fb552"/></pattern><clipPath id="gclip"><rect width="950" height="444.5"/></clipPath></defs><g clip-path="url(#gclip)"><rect width="950" height="444.5" fill="url(#sky)"/><path d="M240.1 10.1L240.1 13.1L240.1 16.5L238.0 19.0L235.8 21.4L232.9 22.9L229.7 22.8L226.8 23.5L223.7 23.5L220.5 23.2L218.2 20.8L215.8 18.9L214.7 15.9L213.0 13.2L213.1 10.1L214.3 7.2L213.4 3.6L214.9 0.6L217.6 -1.4L220.6 -2.8L223.9 -2.6L226.8 -2.5L229.8 -3.2L232.6 -1.9L235.4 -0.8L237.7 1.4L238.7 4.3L240.0 7.1z" fill="#8a8c8a"/><path d="M325.9 10.1L326.5 13.2L325.3 16.2L324.1 19.2L321.6 21.4L318.9 23.0L315.7 23.3L312.7 23.1L309.5 24.1L306.2 23.5L303.3 21.8L301.1 19.3L300.3 16.0L299.8 13.0L299.6 10.1L300.1 7.2L299.6 3.8L301.5 1.2L303.3 -1.7L306.6 -2.4L309.5 -3.9L312.7 -3.8L315.5 -2.4L318.5 -2.1L322.1 -1.7L323.9 1.1L326.0 3.6L325.7 7.1z" fill="#8a8c8a"/><path d="M416.0 10.1L416.8 13.2L416.4 16.4L414.3 18.8L411.8 20.8L409.3 22.5L406.5 24.1L403.3 23.9L400.4 22.7L397.4 22.4L394.7 20.8L392.6 18.6L390.2 16.4L390.6 13.0L389.9 10.1L390.1 7.1L391.1 4.2L391.7 0.8L394.7 -0.7L397.1 -2.8L400.4 -2.6L403.3 -3.1L406.2 -2.7L409.2 -2.2L412.8 -1.8L415.0 0.8L415.7 4.1L417.2 6.9z" fill="#8a8c8a"/><path d="M504.5 10.1L504.7 13.1L504.8 16.4L503.0 19.2L500.1 20.8L498.0 23.5L494.5 22.9L491.6 23.1L488.4 23.8L485.6 22.5L482.8 21.1L480.9 18.6L479.5 15.9L478.2 13.1L478.6 10.1L478.2 7.0L479.1 4.1L480.4 1.1L482.1 -1.8L485.5 -2.6L488.5 -3.3L491.6 -3.9L494.5 -2.7L497.4 -2.1L501.0 -1.7L503.3 0.8L503.8 4.2L504.3 7.2z" fill="#8a8c8a"/><path d="M593.6 10.1L593.8 13.3L592.0 16.0L591.7 19.6L589.2 21.9L586.0 22.9L582.8 23.2L579.8 22.8L577.0 22.6L573.4 23.4L571.1 21.0L568.3 19.3L567.5 16.0L566.1 13.2L566.3 10.1L566.9 7.1L567.7 4.2L568.3 0.9L571.3 -0.6L573.9 -2.2L576.8 -3.3L579.8 -3.8L582.9 -3.3L585.8 -2.2L589.3 -1.8L590.7 1.4L591.8 4.3L592.7 7.1z" fill="#8a8c8a"/><path d="M683.8 10.1L683.0 12.9L682.7 15.9L681.6 18.9L679.5 21.5L676.3 22.2L673.5 23.1L670.5 24.1L667.3 24.1L664.3 23.0L661.3 21.6L659.1 19.2L658.4 15.9L658.0 12.9L657.9 10.1L656.6 6.9L657.5 3.8L658.6 0.6L662.0 -0.5L664.3 -2.8L667.5 -3.1L670.5 -3.6L673.4 -2.9L676.9 -3.3L679.0 -0.6L681.8 1.0L683.5 3.8L684.4 6.9z" fill="#8a8c8a"/><path d="M772.5 10.1L772.3 13.2L771.9 16.4L770.6 19.5L767.6 21.2L765.0 23.0L761.9 24.0L758.7 24.0L755.8 23.2L752.4 23.2L749.4 21.8L747.4 19.2L745.9 16.3L745.7 13.1L745.3 10.1L745.3 7.0L746.7 4.3L747.3 0.9L749.2 -1.9L752.4 -3.2L755.6 -3.5L758.7 -3.1L761.9 -3.5L764.9 -2.7L767.7 -1.1L770.5 0.7L770.8 4.3L772.4 7.0z" fill="#8a8c8a"/><path d="M334.9 62.6L336.6 69.1L335.0 75.6L331.3 81.2L327.6 87.3L320.9 89.7L314.5 91.3L307.9 92.6L301.6 90.1L295.6 88.1L289.1 86.1L283.2 82.2L281.7 75.2L280.6 68.8L277.9 62.6L278.9 56.0L280.9 49.6L282.6 42.4L289.0 38.9L294.6 34.9L301.6 35.2L307.9 34.2L314.6 33.1L321.6 34.1L328.0 37.3L331.7 43.6L335.3 49.4L335.7 56.2z" fill="#868886"/><path d="M391.8 33.9L392.6 39.1L392.5 44.8L390.0 50.0L385.7 53.8L380.9 56.8L375.0 56.0L369.9 55.9L364.8 56.5L359.7 55.1L355.0 52.6L350.8 49.2L347.9 44.5L347.2 39.1L347.5 33.9L346.3 28.5L346.9 22.9L350.7 18.6L355.3 15.6L360.0 13.5L364.5 10.2L369.9 12.3L375.2 10.7L380.4 12.0L385.0 15.1L389.9 18.0L390.4 24.1L391.6 29.0z" fill="#868886"/><path d="M441.3 60.2L439.6 66.3L441.1 73.8L436.2 78.8L431.3 83.3L425.2 85.8L419.4 89.0L412.8 88.6L406.3 89.0L399.5 87.8L392.9 85.2L387.4 80.5L385.1 73.5L385.5 66.4L384.3 60.2L385.5 53.9L387.3 47.9L388.8 41.0L393.1 35.4L400.3 34.1L406.5 32.6L412.8 32.1L419.5 31.1L425.9 33.0L432.4 35.7L437.7 40.3L439.6 47.3L442.2 53.5z" fill="#868886"/><path d="M542.8 33.9L540.3 39.1L541.6 45.4L538.5 50.4L533.1 53.2L528.6 56.4L523.3 58.0L517.8 59.0L512.5 57.2L506.8 56.7L501.0 55.0L497.0 50.6L494.0 45.4L494.3 39.3L493.5 33.9L495.0 28.7L494.6 22.8L496.9 17.3L501.5 13.5L506.6 10.7L512.6 11.1L517.8 8.9L523.5 8.9L529.3 10.0L533.9 13.7L538.6 17.3L539.9 23.3L542.6 28.3z" fill="#868886"/><path d="M531.1 67.3L528.9 74.2L526.6 80.8L524.7 88.1L519.7 93.7L513.3 97.7L505.7 98.0L498.7 96.6L491.4 99.2L485.3 95.2L477.1 94.4L473.6 87.4L469.9 81.2L466.9 74.6L469.1 67.3L469.3 60.6L469.3 53.2L471.9 45.9L477.0 40.1L484.2 37.3L491.3 34.9L498.7 36.4L506.1 34.9L512.2 39.4L518.9 42.0L525.0 46.4L527.4 53.5L530.3 60.1z" fill="#868886"/><path d="M618.5 57.8L617.8 64.3L617.6 71.4L613.7 77.2L608.2 81.4L602.3 84.5L596.1 87.4L589.4 87.8L583.1 85.2L575.8 86.1L569.0 83.3L565.1 77.1L562.0 71.0L562.0 64.0L560.6 57.8L561.0 51.3L561.9 44.6L566.6 39.6L569.0 32.3L576.3 30.6L583.0 29.7L589.4 28.1L595.9 29.2L602.4 30.7L609.1 33.1L612.3 39.5L616.6 44.7L617.5 51.4z" fill="#868886"/><path d="M638.4 33.9L638.1 39.6L635.2 44.5L633.3 49.9L628.6 53.2L624.0 56.4L618.8 58.5L613.2 58.9L607.8 57.5L602.6 56.1L597.8 53.3L592.8 50.2L589.5 45.4L590.6 39.1L588.6 33.9L590.9 28.8L591.4 23.5L593.8 18.4L596.8 13.4L602.6 11.8L607.9 10.7L613.2 9.7L618.4 11.4L624.4 10.7L628.6 14.7L633.4 17.9L635.2 23.4L636.0 28.7z" fill="#868886"/><path d="M708.8 62.6L708.2 69.0L706.7 75.4L703.9 81.6L699.4 86.8L692.6 88.6L686.3 90.0L680.0 91.6L673.4 91.4L666.9 89.8L659.9 87.7L655.5 82.1L651.7 76.2L652.5 68.8L650.6 62.6L650.6 55.8L651.6 48.9L656.4 43.7L661.2 38.9L666.3 34.1L673.8 35.1L680.0 32.2L686.8 32.9L692.5 36.6L698.7 39.2L704.8 42.8L706.4 49.9L707.0 56.4z" fill="#868886"/><path d="M475.7 26.8L474.5 31.6L474.5 36.9L470.7 40.6L467.7 44.7L463.4 47.6L458.0 46.8L453.4 47.5L448.4 48.5L443.1 48.1L438.1 45.9L436.1 40.6L433.0 36.6L431.4 31.8L431.9 26.8L431.6 21.8L433.8 17.3L436.2 13.1L439.6 9.5L444.1 7.6L448.5 5.4L453.4 5.3L458.3 5.3L462.8 7.3L467.3 9.4L470.9 12.8L474.6 16.6L475.9 21.6z" fill="#868886"/><path d="M559.5 26.8L557.2 31.4L556.2 36.1L556.0 42.0L551.3 44.8L547.0 47.8L541.7 47.6L536.9 48.2L532.0 48.1L527.2 47.0L522.3 45.1L519.8 40.4L516.1 36.8L514.7 31.8L516.2 26.8L515.7 21.9L516.0 16.7L519.0 12.5L523.0 9.3L527.5 7.3L532.0 5.5L536.9 6.6L542.0 4.5L547.0 5.7L551.7 8.2L555.8 11.7L557.6 16.8L557.9 22.0z" fill="#868886"/><path d="M151.1 38.7L150.8 42.6L151.0 47.0L148.8 50.7L145.0 52.8L142.0 55.8L137.7 56.2L133.7 56.5L129.7 56.4L126.0 54.8L121.6 53.9L118.6 50.8L117.1 46.7L116.2 42.7L116.0 38.7L116.9 34.9L117.0 30.7L120.0 27.7L122.4 24.5L125.9 22.5L130.1 22.7L133.7 21.8L137.7 21.4L141.7 22.2L144.9 24.7L149.0 26.5L150.3 30.7L150.4 34.9z" fill="#7f817f"/><path d="M253.8 38.7L253.5 42.6L252.7 46.6L250.6 50.1L248.6 54.1L244.3 55.3L240.3 56.2L236.3 56.4L232.2 56.7L228.9 54.1L224.6 53.4L221.4 50.6L220.5 46.3L219.5 42.6L220.1 38.7L219.9 35.0L220.3 31.0L222.5 27.7L225.1 24.7L228.1 21.6L232.4 21.6L236.3 21.5L240.4 20.7L244.2 22.3L248.6 23.4L251.1 27.0L253.2 30.6L252.5 35.0z" fill="#7f817f"/><path d="M357.7 38.7L357.9 42.7L355.7 46.1L355.6 50.9L351.4 52.6L348.1 54.9L344.1 55.1L340.3 55.9L336.4 56.0L332.9 54.1L328.2 54.0L326.0 50.2L324.0 46.6L323.1 42.6L323.4 38.7L323.7 34.9L323.7 30.7L325.7 27.1L329.1 24.6L332.3 22.0L336.5 22.1L340.3 22.5L344.1 22.2L347.7 23.3L351.4 24.8L355.3 26.8L356.4 31.0L358.2 34.6z" fill="#7f817f"/><path d="M461.5 38.7L460.0 42.4L461.1 47.0L459.1 50.9L454.8 52.5L452.1 55.8L447.7 55.6L443.9 55.8L439.7 56.7L436.3 54.5L432.3 53.2L428.6 50.9L427.1 46.8L426.9 42.6L425.7 38.7L426.2 34.7L427.4 30.8L430.0 27.7L432.1 24.0L436.1 22.5L440.1 22.3L443.9 22.5L447.8 21.6L451.3 23.2L455.3 24.3L458.6 26.9L460.1 30.9L460.4 34.9z" fill="#7f817f"/><path d="M566.2 38.7L565.7 42.6L565.6 46.8L563.4 50.3L561.1 54.1L557.1 55.9L552.8 56.2L548.8 55.3L545.1 55.0L540.6 55.8L536.9 53.7L534.1 50.4L532.8 46.4L532.3 42.5L531.3 38.7L531.7 34.8L532.4 30.8L534.1 27.0L536.9 23.8L541.3 23.0L545.0 22.2L548.8 20.5L552.9 20.8L557.0 21.7L559.7 25.0L562.5 27.8L564.7 31.1L565.7 34.9z" fill="#7f817f"/><path d="M666.4 38.7L665.2 42.4L665.4 46.6L662.8 49.7L660.0 52.5L657.0 55.3L652.9 55.8L649.0 56.2L645.2 55.5L641.2 54.9L637.9 52.7L634.8 50.1L632.3 46.8L631.3 42.8L632.7 38.7L632.8 35.0L632.1 30.6L634.3 27.0L637.1 23.7L641.4 23.0L645.2 21.8L649.0 22.0L653.0 21.0L656.7 22.7L660.8 24.0L664.4 26.5L664.9 31.0L666.1 34.8z" fill="#7f817f"/><path d="M769.3 38.7L769.5 42.8L767.7 46.5L765.9 50.1L762.6 52.5L759.8 55.7L755.3 54.9L751.6 55.0L747.7 55.9L743.8 55.0L739.8 53.5L737.4 50.0L734.8 46.8L735.4 42.4L735.0 38.7L734.2 34.7L736.1 31.3L737.4 27.4L739.7 23.8L743.6 22.1L747.8 22.1L751.6 22.3L755.4 22.0L759.6 22.0L763.0 24.4L765.4 27.7L768.3 30.7L768.8 34.8z" fill="#7f817f"/><path d="M874.6 38.7L874.5 42.8L873.6 46.9L870.9 50.2L868.5 53.7L864.2 54.6L860.4 55.4L856.5 55.7L852.5 56.6L848.3 55.8L845.3 52.8L842.3 50.1L840.5 46.4L839.8 42.5L839.6 38.7L839.7 34.9L840.9 31.2L841.9 27.1L844.6 23.7L848.7 22.4L852.5 21.0L856.5 21.4L860.3 22.3L864.6 21.9L868.6 23.6L870.7 27.5L871.9 31.3L873.6 34.8z" fill="#7f817f"/><path d="M165.0 110.3L164.8 120.1L164.8 131.0L158.7 139.7L151.8 147.8L140.4 148.8L131.6 153.1L121.8 154.7L112.6 150.7L103.2 148.9L92.1 147.5L83.9 140.6L83.1 128.9L78.5 120.2L80.7 110.3L78.0 100.3L80.4 90.3L86.7 82.3L93.9 75.3L101.6 68.3L112.1 67.6L121.8 66.0L131.4 68.2L141.0 70.4L152.3 72.0L158.8 80.8L162.5 90.7L164.6 100.5z" fill="#7b7c7b"/><path d="M266.0 110.3L265.6 119.1L264.8 128.6L258.6 135.7L253.5 143.7L244.5 147.2L235.8 149.7L226.8 149.8L217.8 149.6L208.5 148.1L199.7 144.2L194.0 136.4L190.5 127.7L188.0 119.1L187.2 110.3L189.3 101.7L190.9 93.0L195.9 85.7L200.4 77.1L208.3 72.0L218.3 73.0L226.8 73.6L235.1 73.8L244.0 74.4L251.8 78.9L260.8 83.1L261.0 93.8L263.8 101.8z" fill="#7b7c7b"/><path d="M806.9 115.0L809.2 124.9L807.9 135.3L800.7 142.8L793.3 149.4L785.4 155.5L775.7 158.1L765.9 160.1L756.7 155.3L747.2 153.8L738.1 149.9L730.9 143.0L726.5 134.0L722.2 125.0L722.5 115.0L724.7 105.6L726.7 96.2L730.6 86.9L738.1 80.2L745.7 73.1L756.4 73.4L765.9 71.9L776.0 70.8L785.5 74.4L794.0 79.9L803.8 84.8L808.6 94.5L807.7 105.5z" fill="#7b7c7b"/><path d="M928.4 110.3L930.3 121.7L925.5 132.0L919.3 141.3L910.8 148.4L903.4 157.9L891.6 159.3L880.4 157.3L869.6 157.8L858.6 155.6L849.2 149.4L837.8 144.3L834.3 132.5L834.6 120.7L835.5 110.3L833.2 99.5L835.9 88.8L838.7 77.0L847.5 69.0L858.4 64.5L870.0 64.9L880.4 64.5L891.0 64.0L901.6 66.4L913.9 68.2L920.7 78.1L926.4 88.1L930.5 98.8z" fill="#7b7c7b"/><path d="M335.7 110.3L336.4 116.8L333.9 122.8L332.8 130.2L326.0 133.0L321.5 138.5L314.6 139.8L307.9 140.0L301.7 137.2L295.2 136.7L288.1 135.1L284.9 128.6L280.8 123.3L279.6 116.7L277.7 110.3L279.2 103.7L279.6 96.6L284.3 91.5L288.0 85.3L294.9 83.4L301.1 80.5L307.9 83.1L314.6 80.8L320.5 84.1L327.2 86.0L332.1 91.0L333.9 97.7L337.4 103.5z" fill="#7b7c7b"/><path d="M708.0 110.3L707.8 116.6L705.8 122.7L703.6 129.1L699.2 134.3L693.4 138.1L686.4 138.2L680.0 139.5L673.8 137.3L667.1 137.1L660.8 134.3L654.5 130.6L651.8 123.9L651.1 116.9L653.1 110.3L652.0 103.9L652.2 96.9L656.6 91.6L660.6 85.9L667.0 83.3L673.9 83.5L680.0 80.0L686.7 80.9L692.6 84.1L699.6 85.8L703.6 91.5L706.8 97.4L708.6 103.8z" fill="#7b7c7b"/><path d="M31.6 81.6L31.6 86.1L30.8 90.7L29.3 95.4L25.2 98.1L20.9 100.0L16.7 102.1L12.1 101.3L7.3 102.6L2.9 100.8L-1.8 99.0L-4.5 94.9L-7.7 91.2L-6.8 86.0L-7.1 81.6L-6.8 77.3L-7.3 72.3L-5.2 67.8L-0.9 65.4L3.0 62.9L7.4 61.0L12.1 61.4L16.4 62.8L20.9 63.3L25.0 65.4L28.2 68.8L30.9 72.6L30.9 77.3z" fill="#7b7c7b"/><path d="M524.3 115.0L522.0 122.5L520.9 130.3L517.9 137.9L512.4 144.1L505.0 147.9L496.6 147.7L489.2 147.8L481.7 147.8L474.8 144.9L467.0 142.9L460.3 138.1L455.7 131.2L454.9 122.9L455.1 115.0L455.6 107.4L459.4 100.7L461.6 93.0L467.1 87.4L473.7 82.8L482.0 83.5L489.2 82.1L496.8 81.9L505.0 82.3L512.5 85.8L517.7 92.3L519.5 100.4L523.4 107.2z" fill="#7b7c7b"/><path d="M428.5 110.3L427.1 116.8L425.2 123.1L422.7 129.5L417.0 133.4L411.9 138.1L405.4 140.3L398.5 139.0L391.9 139.4L384.9 138.5L380.0 133.6L373.1 130.6L371.0 123.5L371.2 116.5L371.3 110.3L371.0 104.0L371.2 97.1L373.8 90.6L379.7 86.6L384.8 81.7L392.2 82.4L398.5 81.8L404.7 83.2L412.3 81.6L417.0 87.2L423.9 90.1L425.8 97.1L427.1 103.7z" fill="#7b7c7b"/><path d="M618.2 110.3L617.0 116.6L617.8 124.0L615.0 130.7L609.4 135.3L602.6 137.7L595.6 137.4L589.4 140.0L583.1 137.9L575.7 138.7L570.7 133.7L565.0 129.7L561.2 123.9L562.1 116.5L560.6 110.3L562.4 104.1L563.8 97.9L566.1 91.8L569.0 84.7L575.6 81.7L582.8 81.3L589.4 82.3L596.0 81.3L602.8 82.4L608.4 86.5L613.8 90.8L617.5 96.7L616.1 104.2z" fill="#7b7c7b"/><path d="M152.1 81.6L152.6 86.5L150.8 91.0L149.2 95.9L145.9 99.9L140.8 101.2L136.2 103.0L131.4 102.5L126.5 103.1L121.8 101.6L116.7 100.1L114.2 95.3L110.6 91.6L111.0 86.3L108.7 81.6L109.8 76.7L111.1 71.9L113.4 67.4L116.7 63.3L121.3 60.8L126.3 59.7L131.4 59.5L136.2 60.4L141.7 60.1L146.4 62.8L150.2 66.6L151.5 72.0L152.5 76.8z" fill="#6e6e6e"/><path d="M274.7 81.6L275.3 86.7L273.4 91.5L271.2 96.1L267.3 99.6L263.3 103.0L257.8 102.5L253.0 102.0L248.0 103.5L242.7 103.0L238.2 100.3L234.7 96.3L232.1 91.7L232.2 86.4L231.3 81.6L232.8 77.0L233.6 72.3L235.0 67.3L238.6 63.5L243.3 61.6L248.4 61.5L253.0 59.7L257.9 60.3L262.5 61.9L267.1 64.0L270.9 67.4L272.7 72.2L273.2 77.0z" fill="#6e6e6e"/><path d="M374.1 100.7L374.0 109.3L371.1 117.4L368.0 125.9L360.4 130.6L353.4 135.9L344.3 135.0L336.5 137.6L328.3 136.5L319.4 136.3L313.6 129.5L305.3 125.7L304.1 116.3L300.9 108.9L298.8 100.7L303.1 93.1L303.6 84.9L307.0 77.2L312.9 71.2L321.0 68.6L328.0 63.6L336.5 63.6L344.5 65.7L352.6 67.4L360.8 70.2L365.1 78.0L368.5 85.3L373.7 92.2z" fill="#6e6e6e"/><path d="M476.4 100.7L477.0 108.8L477.2 117.9L473.4 126.2L465.5 130.8L457.2 133.5L449.4 135.4L441.5 138.3L433.0 137.9L425.7 133.4L416.4 132.2L411.8 124.4L407.7 117.0L407.4 108.5L404.1 100.7L403.9 92.2L408.8 85.0L410.8 76.3L418.3 71.7L424.4 65.3L433.8 67.2L441.5 66.6L449.8 64.3L457.4 67.6L466.7 69.1L473.0 75.6L476.3 84.0L475.4 93.0z" fill="#6e6e6e"/><path d="M585.4 100.7L586.2 109.3L582.5 117.0L577.5 123.6L572.1 129.9L564.8 133.9L557.1 137.1L548.8 135.2L541.0 134.9L533.0 133.6L524.3 131.5L517.6 125.7L515.4 116.8L512.6 109.0L511.4 100.7L512.9 92.5L516.0 84.9L519.3 77.2L523.5 69.0L532.2 66.1L540.9 66.2L548.8 64.3L556.5 67.0L566.1 64.9L572.7 70.8L579.1 76.6L582.9 84.3L582.4 93.1z" fill="#6e6e6e"/><path d="M692.4 100.7L690.7 108.6L689.1 116.6L687.5 125.7L679.1 129.4L672.1 133.8L664.5 137.3L656.2 135.4L648.3 135.3L639.7 134.8L633.0 129.8L624.5 126.0L620.3 118.0L622.7 108.4L620.6 100.7L619.6 92.4L622.7 84.6L624.4 75.4L632.1 70.5L640.5 68.1L648.0 65.0L656.2 64.3L664.1 65.8L672.8 66.2L681.1 69.5L686.4 76.6L690.1 84.4L693.1 92.3z" fill="#6e6e6e"/><path d="M783.2 84.0L782.4 90.0L782.6 96.7L777.6 101.0L774.6 106.9L767.9 107.9L762.4 110.4L756.4 109.4L750.5 109.9L744.0 109.7L738.1 106.9L733.4 102.3L732.3 95.6L730.4 90.0L731.0 84.0L730.1 78.0L731.5 72.1L735.5 67.4L738.5 61.6L744.1 58.5L750.4 57.8L756.4 56.6L762.1 59.0L767.8 60.2L773.0 63.2L778.5 66.4L781.0 72.2L782.2 78.1z" fill="#6e6e6e"/><path d="M894.0 81.6L895.4 87.2L892.3 92.0L892.0 98.5L887.0 101.9L881.8 104.4L876.5 106.1L870.9 104.8L865.7 104.3L860.2 103.7L855.7 100.7L851.2 97.3L847.9 92.7L847.1 87.1L847.7 81.6L846.9 76.2L849.4 71.3L850.0 65.0L855.4 62.3L860.3 59.7L865.7 59.0L870.9 57.2L876.5 57.0L882.1 58.3L886.1 62.6L890.8 65.8L893.1 70.9L893.7 76.4z" fill="#6e6e6e"/><path d="M521.7 86.4L518.6 92.0L518.8 98.4L516.8 104.6L512.6 109.9L505.4 110.2L499.9 112.3L494.0 113.4L488.3 111.0L482.3 110.5L475.5 109.6L472.8 103.3L469.4 98.2L468.6 92.2L468.0 86.4L469.2 80.8L470.5 75.1L470.5 67.7L475.7 63.6L481.6 60.9L488.2 61.2L494.0 61.0L499.9 60.2L505.6 62.3L511.5 64.4L517.2 67.8L518.4 74.6L519.5 80.6z" fill="#6e6e6e"/><path d="M357.4 38.7L356.6 42.2L355.0 45.3L354.0 48.9L351.7 51.8L347.9 52.4L344.7 53.6L341.3 54.3L337.7 54.5L334.2 53.3L330.5 52.2L328.5 48.9L327.0 45.6L325.5 42.3L326.2 38.7L325.6 35.1L327.3 32.0L328.6 28.6L331.4 26.3L334.3 24.2L338.0 24.2L341.3 24.0L344.6 24.1L348.2 24.3L351.3 26.1L354.1 28.5L356.6 31.3L356.8 35.2z" fill="#6e6e6e"/><path d="M664.9 38.7L663.6 42.0L663.3 45.6L661.2 48.5L659.5 51.9L655.9 52.9L652.4 53.4L649.0 53.1L645.7 53.3L642.2 52.8L638.9 51.4L635.5 49.5L634.2 45.9L634.3 42.1L634.0 38.7L634.5 35.4L633.8 31.4L636.3 28.6L638.4 25.4L641.9 23.9L645.4 22.8L649.0 24.3L652.4 23.9L655.9 24.4L658.8 26.5L662.5 28.0L663.2 31.9L664.6 35.1z" fill="#6e6e6e"/><path d="M459.2 38.7L458.2 42.0L458.1 45.6L456.3 48.7L453.6 50.9L450.5 52.6L447.4 54.0L443.9 53.1L440.5 53.5L437.0 53.0L433.5 51.7L431.5 48.5L429.0 45.9L429.2 42.1L428.2 38.7L428.4 35.2L430.0 32.0L431.4 28.8L433.9 26.2L436.7 23.9L440.4 23.7L443.9 23.7L447.5 22.9L450.6 24.7L453.9 26.1L456.5 28.6L457.8 32.0L458.2 35.4z" fill="#6e6e6e"/><path d="M563.2 38.7L564.2 42.2L563.4 45.7L562.2 49.4L559.7 52.3L555.6 52.8L552.3 54.2L548.8 54.7L545.5 53.3L541.7 53.5L538.3 51.8L535.2 49.5L533.7 46.0L534.2 42.1L533.3 38.7L534.4 35.4L534.5 31.8L536.1 28.6L539.1 26.5L541.9 24.4L545.4 23.9L548.8 23.4L552.2 24.0L555.5 24.8L559.0 26.0L561.7 28.5L562.7 32.0L564.3 35.2z" fill="#6e6e6e"/><path d="M945.4 167.5L944.0 179.9L943.2 193.2L937.8 205.7L926.9 213.8L916.3 222.3L903.2 225.7L889.9 225.1L876.7 225.7L865.3 218.7L851.9 215.2L842.4 205.4L838.5 192.3L833.8 180.3L835.8 167.5L833.2 154.6L835.1 141.1L841.8 129.1L852.2 120.2L864.6 114.9L877.7 114.0L889.9 111.3L903.5 108.1L916.3 112.8L927.4 120.6L939.2 128.2L942.2 142.4L946.5 154.6z" fill="#747474"/><path d="M48.3 158.0L49.3 165.4L45.8 171.9L43.3 179.0L38.8 185.5L31.5 188.3L24.0 189.2L16.9 189.4L9.9 188.4L2.8 187.1L-3.5 183.4L-10.3 179.7L-13.9 172.8L-13.5 164.9L-15.7 158.0L-12.2 151.4L-11.3 144.4L-9.3 137.1L-3.5 132.4L2.9 129.1L9.4 125.5L16.9 128.3L23.6 128.4L30.5 129.5L38.2 131.3L42.2 137.8L44.5 144.7L47.8 150.9z" fill="#747474"/><path d="M167.4 167.5L166.0 179.2L165.3 191.9L160.6 204.1L150.8 212.9L139.4 218.9L126.8 220.9L114.7 223.1L101.9 223.5L90.8 217.2L79.4 211.8L67.5 205.2L65.1 191.4L60.3 179.9L60.0 167.5L60.5 155.2L61.2 141.8L67.8 130.2L80.2 124.3L89.9 116.1L102.6 114.6L114.7 113.7L126.6 115.4L138.4 118.2L151.7 121.1L159.9 131.4L163.7 143.9L166.1 155.8z" fill="#666666"/><path d="M294.8 167.5L293.4 179.5L293.2 192.6L285.3 202.8L276.1 211.4L264.8 216.8L252.9 219.3L241.1 223.7L229.2 219.4L216.2 219.2L203.0 215.3L194.9 204.4L191.2 191.6L184.3 180.5L183.8 167.5L189.6 155.8L190.6 143.2L194.8 130.6L202.9 119.6L216.4 116.2L228.3 111.7L241.1 114.3L253.8 111.7L265.6 116.6L277.3 122.2L288.8 129.5L295.2 141.5L297.7 154.6z" fill="#666666"/><path d="M413.3 177.1L411.8 189.9L411.2 203.8L404.6 216.2L395.7 227.3L382.7 233.3L368.0 231.3L355.6 233.5L342.4 235.0L330.3 229.6L318.5 223.5L310.1 213.3L300.8 203.5L295.8 190.7L295.1 177.1L301.3 164.7L300.1 150.3L307.8 138.9L316.5 128.0L329.8 123.5L342.0 117.3L355.6 116.5L367.9 123.4L382.4 121.4L392.4 131.0L401.3 140.7L408.5 151.6L414.0 163.7z" fill="#666666"/><path d="M525.7 177.1L519.8 188.4L518.8 200.5L511.9 210.4L505.6 221.6L494.0 226.7L481.8 228.3L470.1 228.3L457.8 231.0L445.2 228.8L435.7 220.2L426.4 211.9L419.7 201.4L416.4 189.3L414.6 177.1L418.7 165.3L419.2 152.6L425.6 141.6L433.5 131.2L447.2 129.4L458.7 127.0L470.1 127.1L482.6 122.3L493.3 128.8L505.4 132.8L512.4 143.4L518.8 153.6L519.2 165.9z" fill="#666666"/><path d="M585.0 177.1L582.0 188.4L582.6 201.4L575.2 211.4L566.3 219.9L556.0 226.7L543.8 228.3L532.1 228.0L520.9 226.3L509.4 224.2L495.1 223.4L488.9 211.6L484.9 199.8L482.1 188.5L479.7 177.1L477.0 164.5L484.2 154.0L485.9 140.2L496.9 132.9L508.4 127.8L519.8 123.1L532.1 125.2L543.4 127.8L556.2 127.0L568.1 132.0L577.1 141.2L580.5 153.8L586.9 164.6z" fill="#666666"/><path d="M699.1 177.1L699.5 190.2L693.5 201.9L690.0 215.5L679.8 224.6L665.9 227.0L653.6 228.4L641.9 229.8L630.0 229.0L618.1 226.4L605.6 222.6L594.2 215.1L591.0 201.5L587.3 189.5L590.2 177.1L589.3 165.1L587.0 150.6L598.3 142.3L604.8 130.6L615.9 123.1L629.0 120.7L641.9 120.7L654.1 123.3L667.8 123.2L680.2 129.0L689.6 139.0L696.9 150.6L693.7 165.2z" fill="#666666"/><path d="M816.4 167.5L812.6 179.3L812.1 192.1L804.1 201.8L798.2 214.0L783.7 214.4L773.1 220.1L761.1 218.3L749.4 218.9L737.6 216.5L725.2 212.6L715.2 204.2L712.2 191.1L708.2 179.6L709.6 167.5L710.5 156.0L709.0 142.4L717.8 133.0L727.5 125.4L737.7 118.8L748.9 114.0L761.1 116.9L773.4 114.0L785.2 117.5L797.2 122.3L803.7 133.6L808.5 144.7L811.0 156.2z" fill="#666666"/><path d="M171.6 248.6L171.8 259.3L165.5 269.1L162.3 280.7L150.2 288.4L135.4 292.9L120.5 296.2L105.1 298.9L90.3 294.3L72.8 295.9L60.5 288.0L46.2 281.7L43.9 269.4L34.0 260.1L37.9 248.6L34.2 237.2L43.1 227.6L48.6 216.9L58.4 207.4L75.4 205.2L90.2 202.6L105.1 199.9L121.3 198.8L135.4 204.4L149.0 209.9L161.3 217.1L173.1 225.6L169.5 238.3z" fill="#616161"/><path d="M328.0 251.0L325.5 261.7L324.6 273.2L314.6 282.0L305.7 291.8L292.1 298.3L275.9 300.4L260.2 299.5L245.0 298.4L229.4 296.6L217.3 289.4L201.5 284.4L195.4 273.3L194.3 261.8L192.1 251.0L194.6 240.3L197.7 229.5L205.6 220.0L214.7 210.3L229.4 205.4L245.0 203.6L260.2 206.0L275.5 203.0L290.5 206.1L305.6 210.3L317.2 218.6L326.8 228.1L323.7 240.7z" fill="#616161"/><path d="M479.4 253.4L483.3 264.3L477.8 274.7L467.1 283.2L457.6 292.7L442.7 298.9L424.1 297.8L408.1 300.7L392.6 296.3L373.5 298.9L360.0 291.6L349.6 282.9L337.5 274.9L335.8 263.8L332.8 253.4L334.3 242.7L337.8 232.0L347.6 222.9L357.1 212.9L377.1 212.7L391.2 206.5L408.1 206.9L423.8 209.8L441.9 208.9L456.0 215.4L468.7 222.8L478.9 231.8L476.5 243.5z" fill="#616161"/><path d="M675.8 251.0L678.3 262.0L670.7 271.7L667.2 283.3L656.6 292.7L640.0 296.2L623.6 296.9L608.5 300.4L592.1 300.4L575.9 297.7L561.6 291.5L547.2 284.7L540.6 273.6L542.7 261.4L540.4 251.0L543.1 240.7L546.5 230.5L551.2 219.5L559.9 209.0L575.6 204.0L593.5 205.9L608.5 205.1L623.9 204.3L641.4 203.9L655.7 210.2L669.6 217.4L670.7 230.4L681.1 239.6z" fill="#616161"/><path d="M813.7 248.6L816.5 259.6L815.4 271.4L807.4 281.6L793.4 287.4L781.6 294.8L766.0 295.6L751.6 293.6L737.3 295.0L722.8 292.9L707.6 289.5L698.7 279.9L689.8 270.7L686.2 259.7L689.6 248.6L690.6 238.3L689.1 226.4L697.5 216.7L710.2 210.2L723.5 205.5L736.2 198.8L751.6 200.3L765.9 202.1L779.9 205.1L797.5 206.0L807.2 215.8L814.4 226.2L814.4 238.0z" fill="#616161"/><path d="M955.4 248.6L955.6 259.3L951.4 269.5L948.6 281.2L937.7 288.5L926.6 295.6L912.3 295.4L899.5 296.1L886.5 296.0L872.0 296.2L861.7 288.1L850.0 281.5L847.0 269.7L842.2 259.5L843.7 248.6L840.2 237.3L846.6 227.4L849.1 215.2L860.1 207.5L873.5 203.7L885.9 198.8L899.5 201.6L912.8 199.9L925.9 202.9L937.8 208.6L945.3 218.2L953.2 227.1L954.8 238.1z" fill="#616161"/><path d="M24.8 248.6L25.9 257.2L23.4 264.6L22.2 273.3L18.7 279.4L13.8 281.5L9.4 283.7L4.9 282.8L0.2 285.8L-3.9 281.5L-8.4 278.5L-11.7 272.3L-14.8 265.6L-15.8 257.1L-15.3 248.6L-15.1 240.5L-13.2 233.1L-12.8 223.4L-7.9 219.9L-4.1 215.3L0.5 213.7L4.9 211.9L9.6 212.4L13.9 215.4L19.1 217.0L22.7 223.3L22.8 233.2L25.1 240.4z" fill="#616161"/><path d="M555.8 251.0L554.8 258.5L553.3 266.2L547.6 273.0L541.0 279.8L530.3 283.1L519.7 286.0L508.3 286.3L496.8 286.1L486.8 282.3L474.9 280.3L467.3 273.9L462.0 266.6L458.1 259.0L463.0 251.0L461.2 243.5L463.6 236.0L467.3 228.1L477.2 223.8L485.2 217.5L497.8 219.0L508.3 218.1L518.6 219.3L529.8 219.8L541.3 222.0L546.5 229.7L551.7 236.4L556.4 243.3z" fill="#616161"/><rect x="0" y="0" width="950" height="300" fill="url(#spk)" opacity="0.3"/><ellipse cx="408.9" cy="317.7" rx="17.7" ry="16.9" fill="#8b8b8b"/><polygon points="398.2,304.4 410.8,303.8 409.3,304.9 399.7,305.5" fill="#fbfbfb" /><ellipse cx="451.8" cy="318.6" rx="14.9" ry="14.2" fill="#8b8b8b"/><polygon points="442.9,307.4 458.8,306.7 457.3,308.1 444.4,308.8" fill="#fbfbfb" /><polygon points="442.9,311.5 454.2,311.0 452.7,312.2 444.4,312.7" fill="#fbfbfb" /><polygon points="442.9,315.6 453.9,315.1 452.4,316.0 444.4,316.5" fill="#fbfbfb" /><ellipse cx="491.7" cy="317.7" rx="17.7" ry="16.9" fill="#8b8b8b"/><polygon points="481.0,304.4 500.0,303.5 498.5,304.9 482.5,305.8" fill="#fbfbfb" /><polygon points="481.0,308.5 499.0,307.7 497.5,308.6 482.5,309.4" fill="#fbfbfb" /><polygon points="481.0,312.6 497.6,311.8 496.1,313.2 482.5,313.9" fill="#fbfbfb" /><ellipse cx="527.1" cy="318.6" rx="14.0" ry="13.3" fill="#8b8b8b"/><polygon points="518.7,308.1 533.4,307.4 531.9,308.3 520.2,309.0" fill="#fbfbfb" /><polygon points="518.7,312.2 532.1,311.6 530.6,312.8 520.2,313.4" fill="#fbfbfb" /><ellipse cx="572.0" cy="317.7" rx="17.7" ry="16.9" fill="#8b8b8b"/><polygon points="561.3,304.4 573.7,303.8 572.2,305.3 562.8,305.9" fill="#fbfbfb" /><polygon points="561.3,308.5 577.3,307.8 575.8,308.8 562.8,309.5" fill="#fbfbfb" /><polygon points="561.3,312.6 577.5,311.9 576.0,313.3 562.8,314.1" fill="#fbfbfb" /><ellipse cx="653.2" cy="325.1" rx="19.6" ry="18.6" fill="#8b8b8b"/><polygon points="641.4,310.4 658.7,309.7 657.2,310.8 642.9,311.6" fill="#fbfbfb" /><polygon points="641.4,314.5 658.1,313.8 656.6,314.7 642.9,315.5" fill="#fbfbfb" /><polygon points="641.4,318.7 661.4,317.8 659.9,318.6 642.9,319.5" fill="#fbfbfb" /><clipPath id="gc1"><polygon points="0.0,329.8 56.0,328.9 54.1,333.5 35.5,346.6 18.7,353.2 0.0,368.1"/></clipPath><polygon points="0.0,329.8 56.0,328.9 54.1,333.5 35.5,346.6 18.7,353.2 0.0,368.1" fill="url(#grs)"/><g clip-path="url(#gc1)"><polygon points="0.0,335.6 56.0,333.4 56.0,339.0 0.0,341.2" fill="#2c5c27" opacity="0.920"/><polygon points="0.0,348.7 56.0,346.4 56.0,352.0 0.0,354.3" fill="#2c5c27" opacity="0.920"/><polygon points="0.0,359.9 56.0,357.6 56.0,363.2 0.0,365.5" fill="#2c5c27" opacity="0.920"/></g><clipPath id="gc2"><polygon points="145.6,327.9 229.6,332.6 220.3,335.4 210.0,344.7 203.5,375.6 205.4,401.7 226.8,420.4 233.4,445.6 139.1,445.6 155.0,431.6 169.0,409.2 176.4,375.6 175.5,350.4 166.2,342.9 155.9,334.5"/></clipPath><polygon points="145.6,327.9 229.6,332.6 220.3,335.4 210.0,344.7 203.5,375.6 205.4,401.7 226.8,420.4 233.4,445.6 139.1,445.6 155.0,431.6 169.0,409.2 176.4,375.6 175.5,350.4 166.2,342.9 155.9,334.5" fill="url(#grs)"/><g clip-path="url(#gc2)"><polygon points="139.1,335.6 233.4,333.4 233.4,338.6 139.1,340.8" fill="#2c5c27" opacity="0.920"/><polygon points="139.1,348.7 233.4,346.4 233.4,351.7 139.1,353.9" fill="#2c5c27" opacity="0.920"/><polygon points="139.1,359.9 233.4,357.6 233.4,362.9 139.1,365.1" fill="#2c5c27" opacity="0.920"/><polygon points="139.1,370.1 233.4,367.9 233.4,373.1 139.1,375.4" fill="#2c5c27" opacity="0.920"/><polygon points="139.1,380.4 233.4,378.2 233.4,383.4 139.1,385.6" fill="#2c5c27" opacity="0.920"/><polygon points="139.1,391.1 233.4,388.8 233.4,394.0 139.1,396.3" fill="#2c5c27" opacity="0.920"/><polygon points="139.1,401.5 233.4,399.3 233.4,404.5 139.1,406.7" fill="#2c5c27" opacity="0.920"/><polygon points="139.1,412.5 233.4,410.3 233.4,415.5 139.1,417.8" fill="#2c5c27" opacity="0.920"/><polygon points="139.1,425.6 233.4,423.4 233.4,428.6 139.1,430.8" fill="#2c5c27" opacity="0.920"/><polygon points="139.1,438.7 233.4,436.4 233.4,441.6 139.1,443.9" fill="#2c5c27" opacity="0.920"/></g><polygon points="368.7,344.7 383.7,344.7 375.3,370.0" fill="url(#grs)" /><polygon points="466.8,317.7 475.2,316.7 474.2,334.5 467.7,336.3" fill="url(#grs)" /><polygon points="0.0,368.1 18.7,353.2 35.5,346.6 54.1,333.5 56.0,325.5 143.8,324.6 155.9,334.5 166.2,342.9 175.5,350.4 176.4,375.6 169.0,409.2 155.0,431.6 138.2,445.6 0.0,445.6" fill="#5f5f5f" /><polygon points="203.5,375.6 210.0,344.7 220.3,335.4 230.6,327.0 343.5,325.1 354.7,333.5 365.9,345.7 373.4,358.8 379.0,386.8 480.0,386.8 480.0,445.6 233.4,445.6 226.8,420.4 205.4,401.7" fill="#5f5f5f" /><polygon points="380.9,349.4 392.1,334.5 399.6,327.0 451.8,325.1 463.0,332.6 480.0,334.5 480.0,390.5 379.0,390.5" fill="#5f5f5f" /><polygon points="473.0,334.5 486.1,326.1 547.7,325.5 553.3,332.6 562.6,325.1 616.8,325.1 628.0,335.4 635.4,345.7 641.0,358.8 642.0,392.4 637.3,405.4 585.0,424.1 577.6,445.6 473.0,445.6" fill="#5f5f5f" /><clipPath id="gc3"><polygon points="579.4,445.6 585.0,424.1 637.3,405.4 642.0,392.4 642.0,445.6"/></clipPath><polygon points="579.4,445.6 585.0,424.1 637.3,405.4 642.0,392.4 642.0,445.6" fill="url(#grs)"/><g clip-path="url(#gc3)"><polygon points="579.4,432.7 642.0,430.4 642.0,434.6 579.4,436.8" fill="#2c5c27" opacity="0.920"/><polygon points="579.4,443.0 642.0,440.7 642.0,444.8 579.4,447.1" fill="#2c5c27" opacity="0.920"/></g><polygon points="655.0,375.6 659.7,360.6 665.3,345.7 676.5,334.5 687.7,325.1 788.5,325.1 799.7,334.5 810.9,345.7 815.6,375.6 818.4,401.7 816.5,445.6 642.0,445.6 641.0,392.4 643.8,383.0 655.0,383.0" fill="#5f5f5f" /><polygon points="817.5,420.4 837.1,423.2 902.4,444.6 902.4,445.6 817.5,445.6" fill="url(#grs)" /><polygon points="853.9,349.4 865.1,338.2 874.4,330.7 883.8,324.2 953.0,324.2 953.0,445.6 902.4,445.6 893.1,435.3 865.1,412.9 857.6,383.0" fill="#5f5f5f" /><polygon points="59.7,327.2 95.5,322.7 142.8,325.0 132.6,329.8 91.1,331.7" fill="#fbfbfb" /><polygon points="49.5,332.5 64.7,333.8 63.2,337.0 51.0,335.7" fill="#fbfbfb" /><polygon points="66.3,333.9 79.4,335.1 77.9,339.3 67.8,338.2" fill="#fbfbfb" /><polygon points="83.1,335.4 93.8,336.3 92.3,339.0 84.6,338.0" fill="#fbfbfb" /><polygon points="99.9,336.8 112.9,335.2 111.4,339.7 101.4,341.4" fill="#fbfbfb" /><polygon points="133.5,332.6 148.4,330.7 146.9,333.9 135.0,335.7" fill="#fbfbfb" /><polygon points="42.9,344.0 51.7,344.7 50.2,347.3 44.4,346.6" fill="#fbfbfb" /><polygon points="57.2,345.1 71.1,346.1 69.6,349.7 58.7,348.6" fill="#fbfbfb" /><polygon points="71.4,346.2 82.4,347.0 80.9,349.7 72.9,348.8" fill="#fbfbfb" /><polygon points="85.7,347.3 96.7,348.1 95.2,352.0 87.1,351.1" fill="#fbfbfb" /><polygon points="99.9,348.4 109.7,347.3 108.3,350.4 101.4,351.5" fill="#fbfbfb" /><polygon points="114.1,346.8 124.3,345.6 122.8,348.3 115.6,349.4" fill="#fbfbfb" /><polygon points="128.4,345.2 140.1,343.9 138.6,348.1 129.9,349.4" fill="#fbfbfb" /><polygon points="142.6,343.6 156.8,342.0 155.3,346.8 144.1,348.4" fill="#fbfbfb" /><polygon points="36.4,351.9 50.5,352.8 49.0,355.7 37.9,354.7" fill="#fbfbfb" /><polygon points="52.3,352.9 64.5,353.8 63.0,356.9 53.8,356.0" fill="#fbfbfb" /><polygon points="68.1,354.0 79.6,354.8 78.1,357.5 69.6,356.7" fill="#fbfbfb" /><polygon points="84.0,355.1 98.9,356.2 97.4,358.7 85.5,357.7" fill="#fbfbfb" /><polygon points="99.9,356.2 109.6,355.2 108.1,357.3 101.4,358.3" fill="#fbfbfb" /><polygon points="115.8,354.6 127.9,353.4 126.4,355.4 117.3,356.6" fill="#fbfbfb" /><polygon points="131.6,353.0 145.6,351.6 144.1,354.4 133.1,355.8" fill="#fbfbfb" /><polygon points="147.5,351.4 159.8,350.2 158.3,352.7 149.0,354.0" fill="#fbfbfb" /><polygon points="29.9,363.0 40.5,363.7 39.0,366.2 31.4,365.5" fill="#fbfbfb" /><polygon points="71.9,365.7 85.8,366.5 84.3,369.2 73.4,368.3" fill="#fbfbfb" /><polygon points="85.9,366.5 95.2,367.1 93.7,369.6 87.4,369.1" fill="#fbfbfb" /><polygon points="99.9,367.4 112.6,366.2 111.1,368.8 101.4,370.0" fill="#fbfbfb" /><polygon points="113.9,366.1 123.6,365.2 122.1,367.8 115.4,368.7" fill="#fbfbfb" /><polygon points="127.9,364.9 139.5,363.8 138.0,366.2 129.4,367.3" fill="#fbfbfb" /><polygon points="155.9,362.3 169.7,361.0 168.2,362.7 157.4,364.0" fill="#fbfbfb" /><polygon points="26.1,372.8 40.2,373.6 38.7,376.5 27.6,375.7" fill="#fbfbfb" /><polygon points="40.9,373.6 52.8,374.3 51.3,377.0 42.4,376.3" fill="#fbfbfb" /><polygon points="85.1,376.3 97.4,377.0 95.9,379.0 86.6,378.3" fill="#fbfbfb" /><polygon points="99.9,377.1 111.6,376.1 110.1,378.4 101.4,379.4" fill="#fbfbfb" /><polygon points="129.4,374.6 141.9,373.5 140.4,376.2 130.9,377.3" fill="#fbfbfb" /><polygon points="40.9,382.1 54.8,382.9 53.3,385.9 42.4,385.1" fill="#fbfbfb" /><polygon points="55.6,383.0 69.3,383.8 67.8,385.9 57.1,385.1" fill="#fbfbfb" /><polygon points="70.4,383.8 83.2,384.6 81.7,386.4 71.9,385.7" fill="#fbfbfb" /><polygon points="114.6,384.3 125.0,383.4 123.5,385.3 116.1,386.2" fill="#fbfbfb" /><polygon points="129.4,383.0 140.3,382.1 138.8,383.9 130.9,384.8" fill="#fbfbfb" /><polygon points="40.9,391.7 52.4,392.4 50.9,394.6 42.4,393.9" fill="#fbfbfb" /><polygon points="144.1,391.3 156.0,390.3 154.5,392.3 145.6,393.4" fill="#fbfbfb" /><polygon points="158.9,401.2 172.4,400.0 171.0,402.6 160.4,403.8" fill="#fbfbfb" /><polygon points="234.3,327.8 281.4,323.3 342.6,325.5 332.3,330.4 275.8,332.2" fill="#fbfbfb" /><polygon points="224.0,334.9 233.9,335.5 232.4,338.3 225.5,337.7" fill="#fbfbfb" /><polygon points="239.8,336.0 253.9,336.9 252.4,341.2 241.3,340.3" fill="#fbfbfb" /><polygon points="255.6,337.1 268.8,338.0 267.3,342.1 257.0,341.2" fill="#fbfbfb" /><polygon points="271.3,338.1 281.8,338.9 280.3,342.6 272.8,341.8" fill="#fbfbfb" /><polygon points="287.1,339.2 301.1,337.8 299.6,343.0 288.6,344.4" fill="#fbfbfb" /><polygon points="302.8,337.6 315.7,336.3 314.2,340.1 304.3,341.4" fill="#fbfbfb" /><polygon points="318.6,336.0 328.2,335.1 326.8,337.7 320.1,338.7" fill="#fbfbfb" /><polygon points="334.3,334.4 345.8,333.3 344.3,336.8 335.8,338.0" fill="#fbfbfb" /><polygon points="217.5,344.4 229.0,345.2 227.5,348.3 219.0,347.6" fill="#fbfbfb" /><polygon points="245.3,346.2 254.4,346.8 252.9,350.6 246.8,350.1" fill="#fbfbfb" /><polygon points="259.2,347.1 271.3,347.8 269.8,350.9 260.7,350.1" fill="#fbfbfb" /><polygon points="273.2,347.9 285.9,348.7 284.4,353.2 274.6,352.4" fill="#fbfbfb" /><polygon points="287.1,348.8 299.7,347.6 298.2,352.3 288.6,353.4" fill="#fbfbfb" /><polygon points="301.0,347.5 314.8,346.3 313.3,351.3 302.5,352.6" fill="#fbfbfb" /><polygon points="314.9,346.2 327.4,345.1 325.9,349.5 316.4,350.7" fill="#fbfbfb" /><polygon points="328.8,345.0 340.1,343.9 338.6,347.8 330.3,348.8" fill="#fbfbfb" /><polygon points="342.7,343.7 353.8,342.7 352.3,347.4 344.2,348.4" fill="#fbfbfb" /><polygon points="211.0,352.9 225.6,353.8 224.1,356.2 212.5,355.4" fill="#fbfbfb" /><polygon points="226.2,353.8 240.9,354.7 239.4,357.6 227.7,356.7" fill="#fbfbfb" /><polygon points="241.4,354.7 251.9,355.3 250.4,357.5 242.9,356.9" fill="#fbfbfb" /><polygon points="256.6,355.6 266.8,356.1 265.3,359.3 258.1,358.8" fill="#fbfbfb" /><polygon points="271.8,356.4 286.5,357.3 285.0,359.5 273.3,358.6" fill="#fbfbfb" /><polygon points="287.1,357.3 300.5,356.2 299.0,358.7 288.6,359.8" fill="#fbfbfb" /><polygon points="302.3,356.0 315.4,354.9 313.9,357.6 303.8,358.7" fill="#fbfbfb" /><polygon points="317.5,354.8 327.9,353.9 326.4,356.4 319.0,357.3" fill="#fbfbfb" /><polygon points="332.7,353.5 345.6,352.4 344.1,354.2 334.2,355.3" fill="#fbfbfb" /><polygon points="347.9,352.2 361.5,351.1 360.0,354.3 349.4,355.4" fill="#fbfbfb" /><polygon points="204.4,362.3 213.0,362.7 211.5,365.5 205.9,365.1" fill="#fbfbfb" /><polygon points="245.8,364.5 254.6,364.9 253.1,367.5 247.2,367.0" fill="#fbfbfb" /><polygon points="259.5,365.2 269.1,365.7 267.6,367.7 261.0,367.2" fill="#fbfbfb" /><polygon points="273.3,365.9 283.9,366.5 282.4,369.4 274.8,368.8" fill="#fbfbfb" /><polygon points="328.4,363.5 337.1,362.8 335.6,366.1 329.9,366.7" fill="#fbfbfb" /><polygon points="355.9,361.3 364.3,360.7 362.8,362.8 357.4,363.4" fill="#fbfbfb" /><polygon points="229.5,374.8 240.3,375.4 238.9,377.1 231.0,376.6" fill="#fbfbfb" /><polygon points="243.9,375.6 253.4,376.0 251.9,377.8 245.4,377.3" fill="#fbfbfb" /><polygon points="272.7,377.0 285.6,377.7 284.1,379.5 274.2,378.9" fill="#fbfbfb" /><polygon points="330.2,374.6 343.1,373.6 341.6,376.8 331.7,377.8" fill="#fbfbfb" /><polygon points="344.6,373.5 358.2,372.5 356.7,375.4 346.1,376.4" fill="#fbfbfb" /><polygon points="200.7,381.8 211.2,382.3 209.7,384.2 202.2,383.6" fill="#fbfbfb" /><polygon points="229.5,383.2 238.9,383.7 237.4,386.4 231.0,385.9" fill="#fbfbfb" /><polygon points="287.1,386.1 297.2,385.4 295.7,388.1 288.6,388.8" fill="#fbfbfb" /><polygon points="258.3,394.0 272.3,394.7 270.8,398.0 259.8,397.3" fill="#fbfbfb" /><polygon points="344.6,391.2 357.3,390.2 355.9,392.3 346.1,393.3" fill="#fbfbfb" /><polygon points="258.3,404.8 268.3,405.3 266.8,407.1 259.8,406.6" fill="#fbfbfb" /><polygon points="403.3,327.8 423.1,323.3 450.9,325.5 440.6,330.4 420.5,332.2" fill="#fbfbfb" /><polygon points="393.0,333.3 405.2,334.9 403.7,339.0 394.5,337.4" fill="#fbfbfb" /><polygon points="409.4,335.4 419.6,336.8 418.1,339.4 410.8,338.1" fill="#fbfbfb" /><polygon points="425.7,337.6 437.2,335.4 435.7,338.6 427.2,340.8" fill="#fbfbfb" /><polygon points="442.0,334.4 454.9,331.9 453.4,336.7 443.5,339.2" fill="#fbfbfb" /><polygon points="386.5,343.5 395.1,344.5 393.6,348.7 388.0,347.7" fill="#fbfbfb" /><polygon points="399.6,345.0 410.1,346.1 408.6,350.6 401.0,349.4" fill="#fbfbfb" /><polygon points="412.6,346.4 420.8,347.3 419.3,351.9 414.1,350.9" fill="#fbfbfb" /><polygon points="425.7,347.9 435.1,346.3 433.6,349.0 427.2,350.5" fill="#fbfbfb" /><polygon points="438.8,345.7 449.1,344.1 447.6,348.5 440.3,350.2" fill="#fbfbfb" /><polygon points="451.8,343.6 463.4,341.7 461.9,346.7 453.3,348.6" fill="#fbfbfb" /><polygon points="379.9,353.0 391.8,354.2 390.3,357.4 381.4,356.3" fill="#fbfbfb" /><polygon points="395.2,354.5 404.9,355.4 403.4,357.3 396.7,356.4" fill="#fbfbfb" /><polygon points="425.7,357.4 437.5,355.7 436.0,358.5 427.2,360.1" fill="#fbfbfb" /><polygon points="440.9,355.3 453.2,353.6 451.7,355.9 442.4,357.6" fill="#fbfbfb" /><polygon points="456.2,353.1 468.9,351.4 467.4,354.0 457.7,355.8" fill="#fbfbfb" /><polygon points="373.4,363.9 386.1,364.9 384.6,368.1 374.9,367.0" fill="#fbfbfb" /><polygon points="386.5,365.0 397.8,365.9 396.3,367.9 388.0,366.9" fill="#fbfbfb" /><polygon points="399.6,366.1 412.4,367.1 410.9,370.3 401.0,369.3" fill="#fbfbfb" /><polygon points="412.6,367.2 424.2,368.1 422.7,370.2 414.1,369.2" fill="#fbfbfb" /><polygon points="425.7,368.2 436.5,366.9 435.0,369.1 427.2,370.4" fill="#fbfbfb" /><polygon points="451.8,365.1 464.8,363.5 463.4,365.3 453.3,366.9" fill="#fbfbfb" /><polygon points="464.9,363.5 474.9,362.2 473.4,364.2 466.4,365.4" fill="#fbfbfb" /><polygon points="369.7,372.2 383.0,373.3 381.5,375.0 371.2,374.0" fill="#fbfbfb" /><polygon points="383.7,373.3 392.3,374.0 390.8,376.9 385.2,376.2" fill="#fbfbfb" /><polygon points="411.7,375.5 425.6,376.6 424.1,379.1 413.2,378.0" fill="#fbfbfb" /><polygon points="425.7,376.6 435.8,375.4 434.3,377.2 427.2,378.4" fill="#fbfbfb" /><polygon points="439.7,375.0 448.3,374.0 446.8,376.0 441.2,377.0" fill="#fbfbfb" /><polygon points="467.7,371.8 477.0,370.7 475.5,372.5 469.2,373.6" fill="#fbfbfb" /><polygon points="383.7,384.3 397.1,385.4 395.6,387.7 385.2,386.6" fill="#fbfbfb" /><polygon points="425.7,387.6 437.4,386.2 435.9,388.9 427.2,390.2" fill="#fbfbfb" /><polygon points="439.7,386.0 453.4,384.4 451.9,387.0 441.2,388.5" fill="#fbfbfb" /><polygon points="467.7,382.8 477.4,381.7 475.9,383.9 469.2,385.0" fill="#fbfbfb" /><polygon points="489.8,328.1 513.8,323.7 546.7,325.9 536.5,330.7 510.7,332.6" fill="#fbfbfb" /><polygon points="479.5,333.6 493.7,335.3 492.2,338.3 481.0,336.6" fill="#fbfbfb" /><polygon points="498.2,335.8 512.4,337.5 510.9,342.4 499.7,340.8" fill="#fbfbfb" /><polygon points="516.9,338.0 533.8,335.1 532.3,338.3 518.4,341.1" fill="#fbfbfb" /><polygon points="535.5,334.8 548.8,332.5 547.3,335.6 537.0,337.8" fill="#fbfbfb" /><polygon points="473.0,343.0 487.2,344.5 485.7,349.2 474.5,347.8" fill="#fbfbfb" /><polygon points="487.6,344.5 501.1,345.8 499.6,348.9 489.1,347.6" fill="#fbfbfb" /><polygon points="502.3,346.0 514.7,347.2 513.2,351.7 503.7,350.4" fill="#fbfbfb" /><polygon points="516.9,347.4 530.8,345.4 529.3,348.2 518.4,350.2" fill="#fbfbfb" /><polygon points="531.5,345.3 544.2,343.4 542.7,347.3 533.0,349.2" fill="#fbfbfb" /><polygon points="546.1,343.2 557.7,341.5 556.2,344.3 547.6,346.0" fill="#fbfbfb" /><polygon points="466.5,354.6 480.2,355.8 478.7,358.0 468.0,356.8" fill="#fbfbfb" /><polygon points="483.3,356.1 497.2,357.3 495.7,360.4 484.8,359.2" fill="#fbfbfb" /><polygon points="500.1,357.5 513.6,358.7 512.1,361.1 501.6,359.9" fill="#fbfbfb" /><polygon points="516.9,359.0 529.9,357.3 528.4,359.3 518.4,360.9" fill="#fbfbfb" /><polygon points="533.7,356.9 549.2,354.9 547.7,356.6 535.2,358.6" fill="#fbfbfb" /><polygon points="474.2,364.7 485.4,365.6 483.9,367.8 475.7,367.0" fill="#fbfbfb" /><polygon points="488.4,365.8 498.1,366.6 496.6,368.9 489.9,368.2" fill="#fbfbfb" /><polygon points="516.9,368.0 527.0,366.9 525.5,369.1 518.4,370.3" fill="#fbfbfb" /><polygon points="531.1,366.4 541.5,365.2 540.0,367.9 532.6,369.0" fill="#fbfbfb" /><polygon points="545.3,364.8 554.5,363.8 553.0,365.6 546.8,366.6" fill="#fbfbfb" /><polygon points="456.2,373.6 466.7,374.4 465.2,376.6 457.7,375.9" fill="#fbfbfb" /><polygon points="516.9,378.0 531.4,376.5 529.9,379.8 518.4,381.3" fill="#fbfbfb" /><polygon points="532.0,376.4 547.0,374.8 545.5,376.6 533.5,378.1" fill="#fbfbfb" /><polygon points="562.4,373.2 576.2,371.8 574.7,374.1 563.9,375.6" fill="#fbfbfb" /><polygon points="456.2,383.8 470.3,384.8 468.8,386.9 457.7,385.9" fill="#fbfbfb" /><polygon points="532.0,386.5 543.2,385.4 541.7,387.1 533.5,388.2" fill="#fbfbfb" /><polygon points="501.7,396.4 513.4,397.2 511.9,399.3 503.2,398.4" fill="#fbfbfb" /><polygon points="562.4,392.7 572.4,391.6 570.9,393.4 563.9,394.4" fill="#fbfbfb" /><polygon points="566.4,327.8 587.0,323.3 615.8,325.5 605.6,330.4 584.3,332.2" fill="#fbfbfb" /><polygon points="556.1,334.1 571.5,336.1 570.0,341.1 557.6,339.1" fill="#fbfbfb" /><polygon points="572.9,336.3 589.2,338.4 587.7,341.1 574.4,339.0" fill="#fbfbfb" /><polygon points="589.7,338.5 606.1,335.4 604.6,339.6 591.2,342.7" fill="#fbfbfb" /><polygon points="606.5,335.3 617.3,333.2 615.8,337.0 608.0,339.1" fill="#fbfbfb" /><polygon points="549.5,343.0 560.6,344.2 559.2,346.8 551.0,345.6" fill="#fbfbfb" /><polygon points="562.9,344.4 572.5,345.5 571.0,350.4 564.4,349.4" fill="#fbfbfb" /><polygon points="576.3,345.9 585.2,346.9 583.7,351.5 577.8,350.5" fill="#fbfbfb" /><polygon points="589.7,347.4 601.0,345.6 599.5,348.5 591.2,350.3" fill="#fbfbfb" /><polygon points="616.5,343.1 625.6,341.6 624.1,344.8 617.9,346.2" fill="#fbfbfb" /><polygon points="543.0,354.3 554.2,355.4 552.7,358.7 544.5,357.6" fill="#fbfbfb" /><polygon points="558.6,355.8 572.1,357.1 570.6,359.1 560.1,357.8" fill="#fbfbfb" /><polygon points="574.1,357.3 587.8,358.5 586.3,361.8 575.6,360.6" fill="#fbfbfb" /><polygon points="589.7,358.7 600.9,357.2 599.4,359.5 591.2,361.0" fill="#fbfbfb" /><polygon points="549.8,363.1 557.8,363.7 556.3,366.6 551.3,365.9" fill="#fbfbfb" /><polygon points="589.7,366.4 600.2,365.1 598.7,367.3 591.2,368.6" fill="#fbfbfb" /><polygon points="603.0,364.8 614.7,363.4 613.2,365.1 604.5,366.5" fill="#fbfbfb" /><polygon points="616.3,363.2 624.4,362.2 622.9,365.1 617.8,366.1" fill="#fbfbfb" /><polygon points="629.6,361.6 637.7,360.6 636.2,363.6 631.1,364.6" fill="#fbfbfb" /><polygon points="532.7,372.4 541.3,373.0 539.8,374.8 534.2,374.1" fill="#fbfbfb" /><polygon points="561.2,374.6 570.9,375.3 569.4,378.3 562.7,377.5" fill="#fbfbfb" /><polygon points="575.5,375.7 589.4,376.7 587.9,379.0 576.9,377.9" fill="#fbfbfb" /><polygon points="603.9,375.2 616.9,373.7 615.4,375.6 605.4,377.0" fill="#fbfbfb" /><polygon points="618.2,373.6 631.2,372.1 629.8,375.2 619.7,376.7" fill="#fbfbfb" /><polygon points="561.2,385.6 575.0,386.6 573.5,388.9 562.7,387.8" fill="#fbfbfb" /><polygon points="575.5,386.7 587.1,387.6 585.6,389.8 576.9,388.9" fill="#fbfbfb" /><polygon points="532.7,392.5 542.2,393.2 540.7,395.0 534.2,394.3" fill="#fbfbfb" /><polygon points="547.0,393.6 558.6,394.5 557.1,396.9 548.5,396.0" fill="#fbfbfb" /><polygon points="589.7,396.9 600.8,395.6 599.3,398.0 591.2,399.3" fill="#fbfbfb" /><polygon points="618.2,393.7 626.9,392.7 625.4,395.2 619.7,396.2" fill="#fbfbfb" /><polygon points="632.4,392.1 641.7,391.1 640.2,394.0 633.9,395.0" fill="#fbfbfb" /><polygon points="691.4,327.8 733.1,323.3 787.6,325.5 777.3,330.4 728.0,332.2" fill="#fbfbfb" /><polygon points="681.2,334.5 692.5,335.4 691.0,338.6 682.7,337.8" fill="#fbfbfb" /><polygon points="709.7,336.7 720.9,337.5 719.4,342.1 711.1,341.2" fill="#fbfbfb" /><polygon points="723.9,337.8 736.8,338.8 735.3,342.1 725.4,341.1" fill="#fbfbfb" /><polygon points="738.1,338.9 750.8,337.4 749.3,341.1 739.6,342.5" fill="#fbfbfb" /><polygon points="752.4,337.3 764.8,335.9 763.3,339.0 753.9,340.3" fill="#fbfbfb" /><polygon points="766.6,335.7 779.7,334.2 778.2,337.5 768.1,338.9" fill="#fbfbfb" /><polygon points="780.8,334.1 793.3,332.7 791.8,337.4 782.3,338.8" fill="#fbfbfb" /><polygon points="690.5,344.3 705.1,345.3 703.7,349.0 692.0,348.0" fill="#fbfbfb" /><polygon points="722.3,346.5 735.8,347.4 734.3,350.7 723.7,349.8" fill="#fbfbfb" /><polygon points="738.1,347.6 751.4,346.2 749.9,349.3 739.6,350.6" fill="#fbfbfb" /><polygon points="754.0,346.0 765.8,344.8 764.3,349.8 755.5,350.9" fill="#fbfbfb" /><polygon points="769.9,344.4 782.7,343.1 781.2,347.3 771.4,348.6" fill="#fbfbfb" /><polygon points="785.7,342.8 800.4,341.3 798.9,346.4 787.2,347.9" fill="#fbfbfb" /><polygon points="668.1,352.2 679.9,352.9 678.4,355.1 669.6,354.4" fill="#fbfbfb" /><polygon points="682.1,353.1 691.0,353.6 689.5,356.8 683.6,356.2" fill="#fbfbfb" /><polygon points="696.1,354.0 705.2,354.5 703.7,357.3 697.6,356.7" fill="#fbfbfb" /><polygon points="710.1,354.8 719.6,355.4 718.1,357.9 711.6,357.3" fill="#fbfbfb" /><polygon points="752.1,355.3 764.4,354.2 762.9,355.9 753.6,357.0" fill="#fbfbfb" /><polygon points="766.1,354.0 774.6,353.2 773.1,355.5 767.6,356.3" fill="#fbfbfb" /><polygon points="780.1,352.7 792.0,351.7 790.5,353.9 781.6,354.9" fill="#fbfbfb" /><polygon points="794.1,351.5 804.7,350.5 803.2,352.4 795.6,353.4" fill="#fbfbfb" /><polygon points="676.9,365.0 690.6,365.8 689.1,368.1 678.4,367.3" fill="#fbfbfb" /><polygon points="692.2,365.8 702.9,366.4 701.4,369.8 693.7,369.2" fill="#fbfbfb" /><polygon points="707.5,366.7 720.8,367.5 719.3,370.6 709.0,369.9" fill="#fbfbfb" /><polygon points="722.8,367.6 737.1,368.4 735.6,371.4 724.3,370.6" fill="#fbfbfb" /><polygon points="738.1,368.5 750.2,367.5 748.7,370.3 739.6,371.3" fill="#fbfbfb" /><polygon points="753.4,367.2 763.1,366.4 761.7,369.3 754.9,370.1" fill="#fbfbfb" /><polygon points="784.1,364.6 798.0,363.5 796.5,365.4 785.5,366.6" fill="#fbfbfb" /><polygon points="657.8,371.8 667.8,372.4 666.3,374.5 659.3,373.9" fill="#fbfbfb" /><polygon points="684.6,373.3 694.0,373.8 692.5,376.2 686.1,375.7" fill="#fbfbfb" /><polygon points="698.0,374.0 709.3,374.6 707.8,376.8 699.5,376.2" fill="#fbfbfb" /><polygon points="778.3,373.0 788.0,372.2 786.5,375.0 779.8,375.8" fill="#fbfbfb" /><polygon points="791.6,371.9 804.6,370.9 803.1,373.2 793.1,374.3" fill="#fbfbfb" /><polygon points="805.0,370.9 814.8,370.1 813.3,372.5 806.5,373.2" fill="#fbfbfb" /><polygon points="657.8,382.4 670.9,383.1 669.4,385.2 659.3,384.5" fill="#fbfbfb" /><polygon points="724.7,386.0 733.4,386.5 731.9,389.4 726.2,388.9" fill="#fbfbfb" /><polygon points="751.5,385.7 764.1,384.7 762.6,386.5 753.0,387.5" fill="#fbfbfb" /><polygon points="778.3,383.5 789.6,382.6 788.1,385.0 779.8,385.9" fill="#fbfbfb" /><polygon points="791.6,382.5 804.0,381.5 802.5,384.0 793.1,385.0" fill="#fbfbfb" /><polygon points="791.6,391.3 803.0,390.4 801.5,393.3 793.1,394.2" fill="#fbfbfb" /><polygon points="684.6,404.0 697.5,404.7 696.0,407.9 686.1,407.2" fill="#fbfbfb" /><polygon points="724.7,406.2 733.5,406.7 732.0,409.9 726.2,409.5" fill="#fbfbfb" /><polygon points="738.1,406.9 748.5,406.1 747.0,409.1 739.6,409.9" fill="#fbfbfb" /><polygon points="805.0,401.6 818.3,400.5 816.8,402.7 806.5,403.8" fill="#fbfbfb" /><polygon points="887.5,326.8 914.9,322.3 952.1,324.6 941.8,329.4 911.5,331.3" fill="#fbfbfb" /><polygon points="877.2,332.5 889.0,333.8 887.5,336.5 878.7,335.3" fill="#fbfbfb" /><polygon points="890.9,334.0 901.2,335.1 899.7,337.8 892.4,336.7" fill="#fbfbfb" /><polygon points="904.7,335.4 913.1,336.3 911.6,340.0 906.2,339.1" fill="#fbfbfb" /><polygon points="918.4,336.9 927.1,335.5 925.6,339.2 919.9,340.6" fill="#fbfbfb" /><polygon points="932.1,334.8 941.0,333.4 939.5,336.5 933.6,337.9" fill="#fbfbfb" /><polygon points="945.8,332.6 959.3,330.5 957.8,334.6 947.3,336.7" fill="#fbfbfb" /><polygon points="870.7,342.4 880.5,343.3 879.0,348.1 872.2,347.2" fill="#fbfbfb" /><polygon points="886.6,343.8 897.0,344.8 895.6,347.7 888.1,346.7" fill="#fbfbfb" /><polygon points="902.5,345.3 917.2,346.7 915.7,349.7 904.0,348.3" fill="#fbfbfb" /><polygon points="918.4,346.8 932.0,344.9 930.5,348.5 919.9,350.3" fill="#fbfbfb" /><polygon points="934.3,344.6 944.2,343.3 942.7,346.0 935.8,347.4" fill="#fbfbfb" /><polygon points="950.2,342.5 964.1,340.6 962.6,344.3 951.7,346.2" fill="#fbfbfb" /><polygon points="864.2,351.9 874.7,352.8 873.3,355.0 865.6,354.1" fill="#fbfbfb" /><polygon points="877.7,353.0 889.6,354.0 888.1,356.1 879.2,355.1" fill="#fbfbfb" /><polygon points="891.3,354.1 902.3,355.0 900.8,358.1 892.8,357.2" fill="#fbfbfb" /><polygon points="904.8,355.2 914.5,356.0 913.0,359.3 906.3,358.5" fill="#fbfbfb" /><polygon points="931.9,354.7 944.2,353.2 942.7,355.2 933.4,356.6" fill="#fbfbfb" /><polygon points="945.5,353.1 953.9,352.1 952.4,354.9 947.0,355.9" fill="#fbfbfb" /><polygon points="959.1,351.5 970.3,350.2 968.8,353.3 960.6,354.6" fill="#fbfbfb" /><polygon points="857.6,361.6 870.3,362.5 868.8,365.2 859.1,364.3" fill="#fbfbfb" /><polygon points="872.8,362.7 887.0,363.7 885.5,367.0 874.3,366.0" fill="#fbfbfb" /><polygon points="888.0,363.8 901.2,364.8 899.7,366.5 889.5,365.6" fill="#fbfbfb" /><polygon points="903.2,364.9 916.2,365.8 914.8,369.2 904.7,368.2" fill="#fbfbfb" /><polygon points="918.4,366.0 929.2,364.9 927.7,367.2 919.9,368.3" fill="#fbfbfb" /><polygon points="933.6,364.4 942.8,363.4 941.3,365.9 935.1,366.8" fill="#fbfbfb" /><polygon points="853.9,370.8 864.4,371.5 862.9,373.6 855.4,372.9" fill="#fbfbfb" /><polygon points="886.1,372.9 896.3,373.6 894.8,376.1 887.6,375.4" fill="#fbfbfb" /><polygon points="902.3,374.0 917.6,375.1 916.1,378.1 903.8,377.1" fill="#fbfbfb" /><polygon points="918.4,375.1 929.9,374.0 928.4,376.4 919.9,377.5" fill="#fbfbfb" /><polygon points="950.6,371.9 966.5,370.4 965.0,372.3 952.1,373.9" fill="#fbfbfb" /><polygon points="886.1,383.0 897.5,383.8 896.0,385.5 887.6,384.7" fill="#fbfbfb" /><polygon points="950.6,382.0 964.8,380.6 963.3,383.2 952.1,384.6" fill="#fbfbfb" /><polygon points="966.8,380.4 980.8,379.0 979.3,380.8 968.3,382.2" fill="#fbfbfb" /><polygon points="853.9,392.1 869.2,393.1 867.7,396.1 855.4,395.1" fill="#fbfbfb" /><polygon points="74.7,399.8 97.1,390.5 141.9,389.6 112.0,401.7 78.4,404.5" fill="#fbfbfb" /><polygon points="362.2,401.7 373.4,390.5 416.4,390.5 401.4,403.6 369.7,404.5" fill="#fbfbfb" /><polygon points="646.6,390.5 667.2,388.6 697.0,390.5 713.9,401.7 670.9,403.6" fill="#fbfbfb" /><g transform="translate(913.0,384.0)"><path d="M8 0H17L19 3L26 8L24 30L20 32V50L12 54L6 50V30L1 28L3 8L7 4z" fill="#fdfdfd" stroke="#9a9a9a" stroke-width="0.800"/><path d="M12 10V52" stroke="#d0d0d0" stroke-width="0.800"/></g></g><text x="948" y="11.500" text-anchor="end" font-family="Liberation Sans,sans-serif" font-weight="bold" font-style="italic" font-size="14.300" fill="#2c3850">NOTE: in</text><text x="948" y="26.800" text-anchor="end" font-family="Liberation Sans,sans-serif" font-weight="bold" font-style="italic" font-size="14.300" fill="#2c3850">alpha!</text></svg><div class="a" style="left:2531px;top:76px;width:98px;height:16.5px;background:linear-gradient(#bebebe,#b1b1b1);border-radius:4px 4px 0 0;border:1px solid #8f8f8f;border-bottom:none;box-sizing:border-box;box-shadow:inset 0 1px 0 #cfcfcf;"></div><svg class="a" style="left:2539.500px;top:78.500px" width="11" height="11" viewBox="0 0 11 11"><circle cx="5.500" cy="5.500" r="5.300" fill="#222"/><rect x="4.700" y="4.500" width="1.800" height="4" fill="#ddd"/><rect x="4.700" y="2.200" width="1.800" height="1.500" fill="#ddd"/><rect x="3.800" y="4.500" width="1.500" height="1" fill="#ddd"/><rect x="3.800" y="7.800" width="3.600" height="1" fill="#ddd"/></svg><div class="a" style="left:2555.00px;top:78.40px;line-height:14px;font-size:11px;color:#000;white-space:pre;font-family:'DejaVu Sans','Liberation Sans',sans-serif;letter-spacing:0.243px;">Inspector</div><svg class="a" style="left:2640px;top:80px" width="11" height="10" viewBox="0 0 11 10"><path d="M0 1.500H4.500M6.500 1.500H9M0 5H2M4 5H8M0 8.500H5.500M7.500 8.500H9" stroke="#333" stroke-width="1"/><path d="M5.500 0V3M3 3.500V6.500M6.500 7V10M10 3.500V6.500" stroke="#333" stroke-width="1"/></svg><div class="a" style="left:2654.50px;top:78.40px;line-height:14px;font-size:11px;color:#000;white-space:pre;font-family:'DejaVu Sans','Liberation Sans',sans-serif;letter-spacing:-0.183px;">Lighting</div><svg class="a" style="left:2773px;top:80.5px" width="9" height="11" viewBox="0 0 9 11"><rect x="0.500" y="5" width="8" height="5.500" fill="#3a3a3a"/><path d="M2.300 5V3.200Q2.300 1 4.500 1Q6.700 1 6.700 3.200V5" fill="none" stroke="#3a3a3a" stroke-width="1.300"/></svg><svg class="a" style="left:2787.5px;top:84px" width="13" height="7" viewBox="0 0 13 7"><path d="M0 1.500H4L2 4z" fill="#444"/><path d="M5 1H13M5 3.500H13M5 6H13" stroke="#444" stroke-width="1"/></svg><div class="a" style="left:2531px;top:92px;width:275px;height:746px;background:#a1a1a1;border-left:1px solid #b0b0b0;border-bottom:1px solid #b0b0b0;box-sizing:border-box;"></div><svg class="a" style="left:1374px;top:564px" width="12" height="9" viewBox="0 0 12 9"><path d="M0.500 8.500V1.500Q0.500 0.500 1.500 0.500H4.500L5.500 2H10.500Q11.500 2 11.500 3V8.500z" fill="#8a8a8a" stroke="#3a3a3a" stroke-width="0.900"/></svg><div class="a" style="left:1389.00px;top:562.60px;line-height:14px;font-size:11px;color:#000;white-space:pre;font-family:'DejaVu Sans','Liberation Sans',sans-serif;letter-spacing:0.338px;">Project</div><svg class="a" style="left:1475.500px;top:563px" width="9" height="11" viewBox="0 0 9 11"><rect x="0.500" y="0.500" width="8" height="10" fill="#b5b5b5" stroke="#333" stroke-width="0.900"/><path d="M2 3H7M2 5.500H7M2 8H5" stroke="#444" stroke-width="0.800"/></svg><div class="a" style="left:1489.60px;top:562.60px;line-height:14px;font-size:11px;color:#000;white-space:pre;font-family:'DejaVu Sans','Liberation Sans',sans-serif;letter-spacing:0.190px;">Console</div><div class="a" style="left:1566px;top:559.5px;width:98px;height:16.5px;background:linear-gradient(#bebebe,#b1b1b1);border-radius:4px 4px 0 0;border:1px solid #8f8f8f;border-bottom:none;box-sizing:border-box;box-shadow:inset 0 1px 0 #cfcfcf;"></div><svg class="a" style="left:1577px;top:562.5px" width="11" height="12" viewBox="0 0 11 12"><rect x="4" y="0" width="3" height="2" fill="#ddd" stroke="#555" stroke-width="0.500"/><circle cx="5.500" cy="7" r="4.300" fill="#e6e6e6" stroke="#4a4a4a" stroke-width="1"/><path d="M5.500 7V3.200A3.800 3.800 0 0 1 8.800 5.200z" fill="#d22"/><path d="M5.500 7L5.500 10.500M5.500 7L2.500 8.500M5.500 7L8.500 8.500" stroke="#777" stroke-width="0.600"/></svg><div class="a" style="left:1589.00px;top:562.60px;line-height:14px;font-size:11px;color:#000;white-space:pre;font-family:'DejaVu Sans','Liberation Sans',sans-serif;letter-spacing:0.247px;">Profiler</div><svg class="a" style="left:2510px;top:565.5px" width="13" height="7" viewBox="0 0 13 7"><path d="M0 1.500H4L2 4z" fill="#444"/><path d="M5 1H13M5 3.500H13M5 6H13" stroke="#444" stroke-width="1"/></svg><div class="a" style="left:1366px;top:576px;width:1161px;height:16.5px;background:linear-gradient(#bdbdbd,#a6a6a6);border-bottom:1px solid #6c6c6c;box-sizing:border-box;"></div><div class="a" style="left:1371px;top:576px;width:1px;height:16px;background:#868686;"></div><div class="a" style="left:1491.5px;top:576px;width:1px;height:16px;background:#868686;"></div><div class="a" style="left:1725px;top:576px;width:1px;height:16px;background:#868686;"></div><div class="a" style="left:1796px;top:576px;width:1px;height:16px;background:#868686;"></div><div class="a" style="left:1871px;top:576px;width:1px;height:16px;background:#868686;"></div><div class="a" style="left:1972px;top:576px;width:1px;height:16px;background:#868686;"></div><div class="a" style="left:1976.4px;top:576px;width:1px;height:16px;background:#868686;"></div><div class="a" style="left:2013.7px;top:576px;width:1px;height:16px;background:#868686;"></div><div class="a" style="left:2047.3px;top:576px;width:1px;height:16px;background:#868686;"></div><div class="a" style="left:2082.4px;top:576px;width:1px;height:16px;background:#868686;"></div><div class="a" style="left:2411px;top:576px;width:1px;height:16px;background:#868686;"></div><div class="a" style="left:2438px;top:576px;width:1px;height:16px;background:#868686;"></div><div class="a" style="left:2463.3px;top:576px;width:1px;height:16px;background:#868686;"></div><div class="a" style="left:2473.4px;top:576px;width:1px;height:16px;background:#868686;"></div><div class="a" style="left:2522px;top:576px;width:1px;height:16px;background:#868686;"></div><div class="a" style="left:1665px;top:576px;width:60px;height:16px;background:linear-gradient(#e4e4e4,#c6c6c6);border-left:1px solid #999;box-sizing:border-box;"></div><div class="a" style="left:1377.60px;top:578.60px;line-height:13px;font-size:9.8px;color:#000;white-space:pre;font-family:'DejaVu Sans','Liberation Sans',sans-serif;letter-spacing:0.201px;">Add Profiler</div><svg class="a" style="left:1482px;top:582px" width="4.5" height="2.8" viewBox="0 0 4.5 2.8"><path d="M0 0H4.5L2.25 2.8z" fill="#444"/></svg><svg class="a" style="left:1673px;top:578px" width="11" height="12" viewBox="0 0 11 12"><rect x="4" y="0" width="3" height="2" fill="#ddd" stroke="#555" stroke-width="0.500"/><circle cx="5.500" cy="7" r="4.300" fill="#e6e6e6" stroke="#4a4a4a" stroke-width="1"/><path d="M5.500 7V3.200A3.800 3.800 0 0 1 8.800 5.200z" fill="#d22"/><path d="M5.500 7L5.500 10.500M5.500 7L2.500 8.500M5.500 7L8.500 8.500" stroke="#777" stroke-width="0.600"/></svg><div class="a" style="left:1686.00px;top:578.60px;line-height:13px;font-size:9.8px;color:#000;white-space:pre;font-family:'DejaVu Sans','Liberation Sans',sans-serif;letter-spacing:0.107px;">Record</div><div class="a" style="left:1729.80px;top:578.60px;line-height:13px;font-size:9.8px;color:#000;white-space:pre;font-family:'DejaVu Sans','Liberation Sans',sans-serif;letter-spacing:0.132px;">Deep Profile</div><div class="a" style="left:1801.00px;top:578.60px;line-height:13px;font-size:9.8px;color:#000;white-space:pre;font-family:'DejaVu Sans','Liberation Sans',sans-serif;letter-spacing:0.172px;">Profile Editor</div><div class="a" style="left:1877.40px;top:578.60px;line-height:13px;font-size:9.8px;color:#000;white-space:pre;font-family:'DejaVu Sans','Liberation Sans',sans-serif;letter-spacing:0.271px;">Active Profiler</div><svg class="a" style="left:1963px;top:582px" width="4.5" height="2.8" viewBox="0 0 4.5 2.8"><path d="M0 0H4.5L2.25 2.8z" fill="#444"/></svg><div class="a" style="left:1981.00px;top:578.60px;line-height:13px;font-size:9.8px;color:#000;white-space:pre;font-family:'DejaVu Sans','Liberation Sans',sans-serif;letter-spacing:0.274px;">Clear</div><div class="a" style="left:2018.00px;top:578.60px;line-height:13px;font-size:9.8px;color:#000;white-space:pre;font-family:'DejaVu Sans','Liberation Sans',sans-serif;letter-spacing:0.048px;">Load</div><div class="a" style="left:2053.00px;top:578.60px;line-height:13px;font-size:9.8px;color:#000;white-space:pre;font-family:'DejaVu Sans','Liberation Sans',sans-serif;letter-spacing:-0.064px;">Save</div><div class="a" style="left:2266.50px;top:579.30px;line-height:13px;font-size:9.8px;color:#000;white-space:pre;font-family:'DejaVu Sans','Liberation Sans',sans-serif;letter-spacing:-0.056px;">Frame:</div><div class="a" style="left:2318.40px;top:579.30px;line-height:13px;font-size:9.8px;color:#000;white-space:pre;font-family:'DejaVu Sans','Liberation Sans',sans-serif;letter-spacing:0.256px;">Current</div><svg class="a" style="left:2421.500px;top:580.500px" width="5" height="8" viewBox="0 0 5 8"><path d="M5 0V8L0 4z" fill="#222"/></svg><svg class="a" style="left:2448.500px;top:580.500px" width="5" height="8" viewBox="0 0 5 8"><path d="M0 0V8L5 4z" fill="#777"/></svg><div class="a" style="left:2478.00px;top:578.60px;line-height:13px;font-size:9.8px;color:#000;white-space:pre;font-family:'DejaVu Sans','Liberation Sans',sans-serif;letter-spacing:0.213px;">Current</div><div class="a" style="left:1366px;top:592.500px;width:168px;height:123.500px;background:linear-gradient(#66759a,#8a98b9)"></div><svg class="a" style="left:1522px;top:597px" width="9" height="9" viewBox="0 0 9 9"><path d="M0.500 0.500L8.500 8.500M8.500 0.500L0.500 8.500" stroke="#222" stroke-width="1"/></svg><svg class="a" style="left:1375px;top:602px" width="33" height="28" viewBox="0 0 33 28"><circle cx="12" cy="14" r="10" fill="#dcdcdc" stroke="#8a8a8a" stroke-width="2"/><circle cx="12" cy="14" r="7.500" fill="#f2f2f2"/><rect x="10" y="0.500" width="4" height="3.500" fill="#bbb" stroke="#777" stroke-width="0.700"/><path d="M12 14V7A7 7 0 0 1 18.500 11z" fill="#e8a0a0"/><path d="M12 14L12 20M12 14L7 16.500" stroke="#c33" stroke-width="0.800"/><circle cx="17" cy="11" r="6.500" fill="#ffffff" fill-opacity="0.350" stroke="#9a9a9a" stroke-width="1.500"/><path d="M22 16L30 24" stroke="#3a3a3a" stroke-width="3" stroke-linecap="round"/></svg><div class="a" style="left:1415.50px;top:606.10px;line-height:16px;font-size:12.5px;color:#1a1a1a;white-space:pre;font-family:'DejaVu Sans','Liberation Sans',sans-serif;letter-spacing:0.074px;">CPU Usage</div><div class="a" style="left:1415.500px;top:622.8px;width:6.500px;height:6.500px;background:#7f9c0a;box-shadow:0 0 0 0.500px rgba(0,0,0,.25)"></div><div class="a" style="left:1427.60px;top:620.90px;line-height:12px;font-size:9.3px;color:#111;white-space:pre;font-family:'DejaVu Sans','Liberation Sans',sans-serif;letter-spacing:0.168px;">Rendering</div><div class="a" style="left:1415.500px;top:633.8px;width:6.500px;height:6.500px;background:#2e90b2;box-shadow:0 0 0 0.500px rgba(0,0,0,.25)"></div><div class="a" style="left:1427.60px;top:631.89px;line-height:12px;font-size:9.3px;color:#111;white-space:pre;font-family:'DejaVu Sans','Liberation Sans',sans-serif;letter-spacing:0.383px;">Scripts</div><div class="a" style="left:1415.500px;top:644.8px;width:6.500px;height:6.500px;background:#7a650a;box-shadow:0 0 0 0.500px rgba(0,0,0,.25)"></div><div class="a" style="left:1427.60px;top:642.88px;line-height:12px;font-size:9.3px;color:#111;white-space:pre;font-family:'DejaVu Sans','Liberation Sans',sans-serif;letter-spacing:0.381px;">GarbageCollector</div><div class="a" style="left:1415.500px;top:655.8px;width:6.500px;height:6.500px;background:#d66f08;box-shadow:0 0 0 0.500px rgba(0,0,0,.25)"></div><div class="a" style="left:1427.60px;top:653.87px;line-height:12px;font-size:9.3px;color:#111;white-space:pre;font-family:'DejaVu Sans','Liberation Sans',sans-serif;letter-spacing:0.615px;">Physics</div><div class="a" style="left:1415.500px;top:666.8px;width:6.500px;height:6.500px;background:#c9a40c;box-shadow:0 0 0 0.500px rgba(0,0,0,.25)"></div><div class="a" style="left:1427.60px;top:664.86px;line-height:12px;font-size:9.3px;color:#111;white-space:pre;font-family:'DejaVu Sans','Liberation Sans',sans-serif;letter-spacing:0.525px;">VSync</div><div class="a" style="left:1415.500px;top:677.8px;width:6.500px;height:6.500px;background:#9a2a08;box-shadow:0 0 0 0.500px rgba(0,0,0,.25)"></div><div class="a" style="left:1427.60px;top:675.85px;line-height:12px;font-size:9.3px;color:#111;white-space:pre;font-family:'DejaVu Sans','Liberation Sans',sans-serif;letter-spacing:-0.045px;">Gi</div><div class="a" style="left:1415.500px;top:688.7px;width:6.500px;height:6.500px;background:#6c5494;box-shadow:0 0 0 0.500px rgba(0,0,0,.25)"></div><div class="a" style="left:1427.60px;top:686.84px;line-height:12px;font-size:9.3px;color:#111;white-space:pre;font-family:'DejaVu Sans','Liberation Sans',sans-serif;letter-spacing:0.316px;">Native Memory</div><div class="a" style="left:1415.500px;top:699.7px;width:6.500px;height:6.500px;background:#b9b81c;box-shadow:0 0 0 0.500px rgba(0,0,0,.25)"></div><div class="a" style="left:1427.60px;top:697.83px;line-height:12px;font-size:9.3px;color:#111;white-space:pre;font-family:'DejaVu Sans','Liberation Sans',sans-serif;letter-spacing:0.391px;">Others</div><div class="a" style="left:1534px;top:592.500px;width:978px;height:123.500px;background:linear-gradient(#333,#3f3f3f 18%,#393939 100%);border:1px solid #2a2a2a;border-left:3px solid #2e2e2e;border-bottom:4px solid #343434;box-sizing:border-box"></div><svg class="a" style="left:0;top:0" width="2806" height="1050" viewBox="0 0 2806 1050"><defs><linearGradient id="cg" gradientUnits="userSpaceOnUse" x1="0" y1="600" x2="0" y2="712"><stop offset="0" stop-color="#88a70c"/><stop offset="1" stop-color="#728f09"/></linearGradient><linearGradient id="cb" gradientUnits="userSpaceOnUse" x1="0" y1="600" x2="0" y2="712"><stop offset="0" stop-color="#3393b5"/><stop offset="1" stop-color="#256f8e"/></linearGradient><linearGradient id="co" gradientUnits="userSpaceOnUse" x1="0" y1="640" x2="0" y2="712"><stop offset="0" stop-color="#e67b08"/><stop offset="1" stop-color="#c06408"/></linearGradient></defs><g shape-rendering="auto"><polygon points="1537.0,712 1537.0,651.0 1538.0,655.6 1539.0,663.3 1540.0,667.3 1541.0,673.2 1542.0,678.4 1543.0,682.8 1544.0,679.4 1545.0,674.6 1546.0,670.3 1547.0,666.4 1548.0,662.7 1549.0,660.8 1550.0,658.0 1551.0,661.9 1552.0,665.1 1553.0,667.7 1554.0,669.4 1555.0,671.9 1556.0,674.9 1557.0,675.5 1558.0,671.1 1559.0,668.7 1560.0,662.0 1561.0,657.8 1562.0,658.5 1563.0,658.5 1564.0,656.2 1565.0,657.4 1566.0,654.9 1567.0,655.2 1568.0,655.5 1569.0,653.7 1570.0,654.7 1571.0,652.9 1572.0,650.7 1573.0,651.4 1574.0,649.6 1575.0,651.1 1576.0,652.9 1577.0,656.5 1578.0,655.2 1579.0,652.8 1580.0,652.3 1581.0,651.9 1582.0,649.7 1583.0,653.7 1584.0,657.0 1585.0,659.6 1586.0,657.9 1587.0,656.3 1588.0,653.6 1589.0,653.3 1590.0,655.0 1591.0,658.2 1592.0,659.2 1593.0,658.5 1594.0,655.4 1595.0,653.3 1596.0,651.1 1597.0,651.0 1598.0,646.8 1599.0,641.7 1600.0,637.5 1601.0,632.9 1602.0,628.2 1603.0,625.9 1604.0,629.3 1605.0,633.8 1606.0,638.6 1607.0,642.4 1608.0,646.0 1609.0,650.3 1610.0,653.9 1611.0,658.6 1612.0,662.8 1613.0,657.4 1614.0,649.1 1615.0,642.3 1616.0,636.7 1617.0,627.5 1618.0,621.7 1619.0,625.1 1620.0,632.9 1621.0,640.2 1622.0,648.2 1623.0,654.5 1624.0,653.5 1625.0,649.9 1626.0,646.5 1627.0,644.1 1628.0,640.5 1629.0,642.8 1630.0,646.2 1631.0,653.5 1632.0,659.1 1633.0,663.5 1634.0,669.5 1635.0,673.2 1636.0,678.0 1637.0,682.2 1638.0,687.5 1639.0,684.9 1640.0,684.1 1641.0,683.1 1642.0,681.5 1643.0,680.6 1644.0,679.5 1645.0,680.1 1646.0,682.4 1647.0,685.6 1648.0,688.5 1649.0,684.3 1650.0,669.8 1651.0,657.2 1652.0,653.2 1653.0,659.6 1654.0,665.3 1655.0,672.9 1656.0,678.1 1657.0,683.3 1658.0,686.6 1659.0,688.8 1660.0,692.5 1661.0,690.2 1662.0,672.4 1663.0,654.6 1664.0,634.4 1665.0,620.0 1666.0,617.6 1667.0,617.6 1668.0,621.9 1669.0,633.1 1670.0,644.0 1671.0,652.0 1672.0,646.2 1673.0,642.0 1674.0,634.5 1675.0,637.3 1676.0,646.9 1677.0,654.2 1678.0,659.2 1679.0,658.5 1680.0,659.9 1681.0,659.9 1682.0,660.8 1683.0,661.5 1684.0,660.9 1685.0,661.0 1686.0,661.2 1687.0,661.9 1688.0,661.4 1689.0,661.8 1690.0,661.8 1691.0,662.5 1692.0,660.2 1693.0,660.0 1694.0,658.3 1695.0,656.9 1696.0,657.4 1697.0,655.2 1698.0,658.5 1699.0,661.9 1700.0,667.5 1701.0,667.0 1702.0,663.0 1703.0,656.5 1704.0,654.3 1705.0,657.6 1706.0,657.7 1707.0,659.4 1708.0,661.0 1709.0,661.5 1710.0,660.5 1711.0,662.3 1712.0,662.9 1713.0,661.9 1714.0,664.0 1715.0,663.7 1716.0,663.8 1717.0,663.7 1718.0,662.9 1719.0,662.2 1720.0,660.7 1721.0,659.8 1722.0,657.9 1723.0,656.5 1724.0,656.2 1725.0,654.7 1726.0,653.2 1727.0,651.5 1728.0,650.2 1729.0,649.7 1730.0,649.0 1731.0,650.3 1732.0,648.3 1733.0,647.6 1734.0,646.1 1735.0,636.0 1736.0,629.4 1737.0,621.1 1738.0,611.7 1739.0,604.3 1740.0,613.8 1741.0,624.5 1742.0,633.6 1743.0,642.7 1744.0,652.1 1745.0,662.4 1746.0,670.7 1747.0,676.1 1748.0,681.0 1749.0,684.4 1750.0,689.4 1751.0,691.9 1752.0,675.2 1753.0,652.5 1754.0,631.9 1755.0,607.9 1756.0,607.6 1757.0,624.7 1758.0,644.1 1759.0,661.5 1760.0,668.5 1761.0,670.1 1762.0,671.5 1763.0,674.8 1764.0,677.2 1765.0,679.5 1766.0,682.0 1767.0,681.8 1768.0,683.4 1769.0,683.5 1770.0,677.5 1771.0,667.1 1772.0,656.8 1773.0,649.0 1774.0,652.3 1775.0,655.2 1776.0,654.6 1777.0,655.1 1778.0,653.9 1779.0,652.3 1780.0,652.9 1781.0,652.4 1782.0,651.5 1783.0,643.1 1784.0,635.6 1785.0,626.1 1786.0,626.3 1787.0,637.2 1788.0,645.5 1789.0,654.5 1790.0,654.8 1791.0,655.1 1792.0,655.7 1793.0,657.8 1794.0,657.8 1795.0,659.1 1796.0,657.0 1797.0,652.2 1798.0,647.8 1799.0,643.5 1800.0,640.2 1801.0,635.1 1802.0,625.7 1803.0,617.3 1804.0,608.4 1805.0,599.8 1806.0,615.8 1807.0,633.5 1808.0,651.5 1809.0,659.7 1810.0,657.8 1811.0,657.6 1812.0,656.1 1813.0,657.4 1814.0,658.0 1815.0,657.0 1816.0,657.6 1817.0,657.2 1818.0,657.5 1819.0,656.5 1820.0,656.7 1821.0,655.0 1822.0,655.7 1823.0,655.9 1824.0,656.0 1825.0,656.5 1826.0,659.3 1827.0,658.8 1828.0,657.1 1829.0,657.0 1830.0,656.4 1831.0,655.4 1832.0,656.6 1833.0,656.2 1834.0,657.4 1835.0,657.0 1836.0,659.8 1837.0,659.1 1838.0,659.0 1839.0,661.4 1840.0,660.7 1841.0,660.9 1842.0,657.9 1843.0,656.4 1844.0,655.1 1845.0,654.0 1846.0,651.6 1847.0,650.1 1848.0,647.7 1849.0,647.4 1850.0,647.3 1851.0,647.3 1852.0,646.7 1853.0,627.3 1854.0,615.0 1855.0,616.2 1856.0,617.0 1857.0,616.1 1858.0,625.0 1859.0,639.7 1860.0,652.9 1861.0,657.0 1862.0,658.2 1863.0,659.3 1864.0,660.4 1865.0,660.9 1866.0,662.1 1867.0,661.4 1868.0,663.4 1869.0,662.5 1870.0,660.3 1871.0,659.1 1872.0,658.0 1873.0,656.2 1874.0,655.9 1875.0,656.9 1876.0,657.4 1877.0,658.2 1878.0,660.7 1879.0,660.6 1880.0,662.4 1881.0,664.0 1882.0,664.4 1883.0,663.5 1884.0,664.0 1885.0,662.7 1886.0,662.0 1887.0,663.0 1888.0,662.7 1889.0,662.1 1890.0,663.1 1891.0,660.5 1892.0,660.4 1893.0,659.3 1894.0,659.4 1895.0,662.6 1896.0,663.0 1897.0,665.3 1898.0,658.8 1899.0,647.2 1900.0,639.2 1901.0,627.8 1902.0,623.6 1903.0,619.2 1904.0,615.3 1905.0,611.4 1906.0,611.6 1907.0,610.1 1908.0,619.4 1909.0,629.7 1910.0,628.1 1911.0,622.1 1912.0,617.1 1913.0,611.0 1914.0,608.3 1915.0,607.0 1916.0,603.7 1917.0,618.4 1918.0,632.3 1919.0,646.1 1920.0,657.3 1921.0,659.4 1922.0,658.2 1923.0,659.2 1924.0,657.3 1925.0,657.4 1926.0,656.5 1927.0,656.6 1928.0,658.7 1929.0,659.1 1930.0,661.7 1931.0,660.7 1932.0,661.7 1933.0,662.8 1934.0,662.4 1935.0,662.0 1936.0,660.6 1937.0,660.4 1938.0,660.5 1939.0,659.7 1940.0,658.6 1941.0,655.9 1942.0,651.0 1943.0,647.2 1944.0,643.2 1945.0,634.8 1946.0,624.2 1947.0,613.7 1948.0,611.2 1949.0,608.2 1950.0,617.2 1951.0,632.5 1952.0,646.2 1953.0,648.5 1954.0,648.8 1955.0,649.7 1956.0,649.7 1957.0,647.9 1958.0,646.5 1959.0,643.6 1960.0,642.4 1961.0,639.1 1962.0,634.9 1963.0,642.0 1964.0,652.8 1965.0,656.8 1966.0,655.8 1967.0,652.0 1968.0,649.7 1969.0,647.0 1970.0,641.1 1971.0,635.3 1972.0,629.9 1973.0,635.4 1974.0,645.5 1975.0,652.1 1976.0,652.5 1977.0,652.9 1978.0,656.1 1979.0,655.9 1980.0,656.2 1981.0,656.8 1982.0,656.3 1983.0,654.3 1984.0,649.3 1985.0,643.8 1986.0,640.7 1987.0,642.8 1988.0,644.7 1989.0,648.9 1990.0,657.5 1991.0,664.4 1992.0,664.7 1993.0,663.6 1994.0,662.2 1995.0,661.4 1996.0,659.1 1997.0,659.4 1998.0,657.8 1999.0,656.9 2000.0,657.8 2001.0,658.9 2002.0,658.3 2003.0,658.3 2004.0,657.3 2005.0,656.7 2006.0,655.4 2007.0,653.5 2008.0,651.7 2009.0,649.7 2010.0,650.5 2011.0,653.7 2012.0,654.2 2013.0,656.3 2014.0,656.4 2015.0,656.9 2016.0,658.2 2017.0,660.2 2018.0,660.3 2019.0,660.8 2020.0,661.8 2021.0,661.5 2022.0,661.8 2023.0,661.1 2024.0,661.4 2025.0,662.6 2026.0,659.3 2027.0,655.2 2028.0,653.5 2029.0,656.2 2030.0,658.3 2031.0,658.7 2032.0,658.5 2033.0,657.8 2034.0,655.4 2035.0,653.5 2036.0,651.0 2037.0,651.9 2038.0,653.7 2039.0,656.0 2040.0,660.5 2041.0,662.4 2042.0,664.4 2043.0,664.2 2044.0,662.1 2045.0,662.8 2046.0,661.6 2047.0,660.6 2048.0,659.5 2049.0,661.3 2050.0,661.1 2051.0,662.1 2052.0,661.1 2053.0,661.2 2054.0,660.0 2055.0,660.0 2056.0,660.7 2057.0,662.1 2058.0,662.2 2059.0,658.4 2060.0,652.3 2061.0,644.3 2062.0,637.9 2063.0,631.5 2064.0,628.8 2065.0,626.7 2066.0,627.8 2067.0,630.0 2068.0,633.2 2069.0,643.1 2070.0,654.8 2071.0,658.5 2072.0,656.6 2073.0,654.6 2074.0,656.2 2075.0,658.0 2076.0,660.5 2077.0,659.5 2078.0,657.3 2079.0,655.5 2080.0,653.9 2081.0,653.0 2082.0,650.8 2083.0,650.5 2084.0,650.5 2085.0,651.8 2086.0,651.4 2087.0,653.9 2088.0,655.1 2089.0,658.0 2090.0,659.8 2091.0,660.5 2092.0,660.8 2093.0,660.6 2094.0,659.7 2095.0,660.1 2096.0,660.4 2097.0,660.9 2098.0,659.0 2099.0,660.6 2100.0,660.8 2101.0,660.4 2102.0,659.3 2103.0,657.9 2104.0,659.5 2105.0,659.3 2106.0,657.8 2107.0,659.8 2108.0,655.1 2109.0,648.4 2110.0,644.0 2111.0,638.7 2112.0,635.0 2113.0,640.5 2114.0,649.2 2115.0,657.3 2116.0,656.3 2117.0,656.5 2118.0,655.6 2119.0,654.0 2120.0,654.6 2121.0,655.5 2122.0,654.8 2123.0,656.6 2124.0,655.7 2125.0,655.8 2126.0,656.4 2127.0,655.4 2128.0,652.5 2129.0,653.2 2130.0,651.3 2131.0,651.0 2132.0,654.5 2133.0,659.5 2134.0,660.7 2135.0,662.9 2136.0,661.0 2137.0,658.8 2138.0,655.8 2139.0,655.1 2140.0,655.5 2141.0,656.5 2142.0,659.0 2143.0,660.8 2144.0,658.3 2145.0,659.4 2146.0,659.2 2147.0,659.0 2148.0,657.1 2149.0,659.3 2150.0,660.3 2151.0,660.7 2152.0,662.3 2153.0,660.9 2154.0,659.8 2155.0,657.2 2156.0,658.3 2157.0,658.4 2158.0,657.9 2159.0,658.6 2160.0,660.3 2161.0,660.2 2162.0,659.4 2163.0,659.3 2164.0,660.0 2165.0,659.4 2166.0,659.6 2167.0,658.5 2168.0,657.9 2169.0,657.8 2170.0,657.6 2171.0,657.7 2172.0,655.8 2173.0,655.8 2174.0,655.0 2175.0,653.2 2176.0,651.1 2177.0,647.5 2178.0,639.3 2179.0,635.5 2180.0,635.9 2181.0,634.1 2182.0,639.2 2183.0,649.4 2184.0,662.6 2185.0,676.1 2186.0,678.7 2187.0,678.9 2188.0,681.1 2189.0,681.7 2190.0,684.6 2191.0,684.0 2192.0,685.1 2193.0,683.4 2194.0,682.9 2195.0,680.7 2196.0,678.1 2197.0,669.3 2198.0,661.9 2199.0,659.1 2200.0,657.5 2201.0,656.4 2202.0,656.6 2203.0,657.9 2204.0,658.8 2205.0,658.9 2206.0,658.8 2207.0,659.4 2208.0,661.8 2209.0,669.2 2210.0,677.1 2211.0,676.9 2212.0,670.4 2213.0,663.2 2214.0,658.6 2215.0,658.3 2216.0,657.3 2217.0,658.0 2218.0,659.3 2219.0,668.9 2220.0,676.7 2221.0,684.0 2222.0,687.1 2223.0,685.3 2224.0,683.3 2225.0,676.9 2226.0,658.6 2227.0,640.1 2228.0,645.4 2229.0,660.1 2230.0,676.6 2231.0,685.6 2232.0,685.1 2233.0,683.5 2234.0,682.4 2235.0,681.4 2236.0,682.4 2237.0,684.4 2238.0,683.2 2239.0,668.0 2240.0,650.3 2241.0,649.6 2242.0,651.3 2243.0,652.5 2244.0,656.3 2245.0,655.5 2246.0,658.4 2247.0,659.4 2248.0,660.4 2249.0,659.9 2250.0,661.2 2251.0,662.6 2252.0,657.3 2253.0,653.9 2254.0,649.9 2255.0,646.6 2256.0,642.1 2257.0,638.4 2258.0,641.7 2259.0,643.5 2260.0,646.6 2261.0,649.7 2262.0,652.9 2263.0,655.1 2264.0,664.2 2265.0,672.1 2266.0,679.3 2267.0,682.3 2268.0,682.0 2269.0,681.3 2270.0,679.5 2271.0,680.8 2272.0,682.9 2273.0,684.7 2274.0,686.7 2275.0,678.9 2276.0,665.4 2277.0,657.5 2278.0,656.8 2279.0,658.9 2280.0,657.1 2281.0,657.4 2282.0,658.6 2283.0,657.0 2284.0,658.4 2285.0,656.3 2286.0,652.4 2287.0,650.0 2288.0,647.3 2289.0,643.0 2290.0,639.8 2291.0,643.9 2292.0,649.9 2293.0,653.3 2294.0,662.7 2295.0,672.8 2296.0,682.7 2297.0,683.5 2298.0,684.8 2299.0,685.8 2300.0,687.5 2301.0,678.6 2302.0,667.3 2303.0,659.8 2304.0,659.7 2305.0,658.4 2306.0,656.8 2307.0,657.1 2308.0,656.8 2309.0,655.8 2310.0,654.4 2311.0,653.9 2312.0,653.6 2313.0,651.8 2314.0,652.0 2315.0,651.1 2316.0,650.8 2317.0,655.6 2318.0,658.1 2319.0,662.7 2320.0,669.4 2321.0,674.8 2322.0,679.4 2323.0,682.6 2324.0,682.8 2325.0,682.7 2326.0,682.9 2327.0,683.5 2328.0,681.6 2329.0,683.1 2330.0,676.6 2331.0,669.6 2332.0,663.0 2333.0,657.8 2334.0,657.8 2335.0,658.3 2336.0,657.1 2337.0,655.5 2338.0,656.4 2339.0,656.4 2340.0,656.5 2341.0,658.7 2342.0,659.5 2343.0,658.8 2344.0,661.5 2345.0,660.7 2346.0,660.8 2347.0,657.2 2348.0,657.0 2349.0,654.7 2350.0,651.2 2351.0,648.6 2352.0,647.7 2353.0,659.6 2354.0,671.4 2355.0,679.7 2356.0,681.3 2357.0,679.5 2358.0,681.0 2359.0,680.1 2360.0,680.1 2361.0,680.3 2362.0,678.7 2363.0,679.9 2364.0,679.6 2365.0,678.8 2366.0,674.3 2367.0,671.6 2368.0,670.7 2369.0,673.0 2370.0,679.4 2371.0,683.9 2372.0,683.7 2373.0,676.4 2374.0,669.3 2375.0,661.2 2376.0,655.4 2377.0,658.0 2378.0,659.5 2379.0,660.2 2380.0,662.4 2381.0,663.4 2382.0,668.2 2383.0,670.7 2384.0,674.5 2385.0,680.6 2386.0,683.4 2387.0,683.2 2388.0,681.6 2389.0,681.6 2390.0,660.6 2391.0,637.7 2392.0,641.7 2393.0,649.0 2394.0,657.0 2395.0,657.8 2396.0,658.9 2397.0,658.7 2398.0,659.2 2399.0,659.1 2400.0,657.0 2401.0,657.1 2402.0,656.4 2403.0,654.8 2404.0,654.3 2405.0,656.1 2406.0,663.2 2407.0,670.1 2408.0,670.5 2409.0,666.1 2410.0,661.7 2411.0,656.1 2412.0,654.6 2413.0,656.0 2414.0,655.8 2415.0,656.8 2416.0,655.2 2417.0,656.7 2418.0,657.7 2419.0,657.0 2420.0,658.1 2421.0,659.0 2422.0,664.5 2423.0,673.5 2424.0,676.3 2425.0,677.8 2426.0,677.4 2427.0,676.9 2428.0,677.5 2429.0,679.2 2430.0,681.2 2431.0,682.4 2432.0,682.3 2433.0,680.2 2434.0,680.4 2435.0,680.8 2436.0,681.0 2437.0,681.2 2438.0,681.4 2439.0,680.4 2440.0,682.2 2441.0,680.7 2442.0,674.6 2443.0,668.6 2444.0,661.9 2445.0,661.0 2446.0,659.5 2447.0,658.5 2448.0,656.7 2449.0,656.0 2450.0,654.4 2451.0,653.4 2452.0,651.7 2453.0,649.0 2454.0,651.0 2455.0,651.7 2456.0,653.0 2457.0,655.9 2458.0,655.9 2459.0,657.4 2460.0,659.1 2461.0,655.6 2462.0,652.9 2463.0,649.8 2464.0,647.1 2465.0,642.2 2466.0,638.8 2467.0,633.8 2468.0,626.9 2469.0,618.6 2470.0,622.7 2471.0,635.4 2472.0,647.8 2473.0,657.1 2474.0,652.5 2475.0,647.8 2476.0,642.2 2477.0,637.2 2478.0,635.0 2479.0,630.1 2480.0,631.0 2481.0,641.7 2482.0,649.6 2483.0,657.0 2484.0,657.0 2485.0,656.2 2486.0,656.9 2487.0,655.2 2488.0,655.1 2489.0,656.1 2490.0,657.0 2491.0,657.3 2492.0,656.3 2493.0,657.3 2494.0,657.1 2495.0,658.1 2496.0,656.3 2497.0,655.7 2498.0,655.6 2499.0,655.8 2500.0,656.8 2501.0,655.3 2502.0,654.9 2503.0,656.0 2504.0,656.0 2505.0,656.9 2506.0,656.0 2507.0,655.0 2508.0,656.5 2509.0,654.9 2510.0,655.3 2510.0,712" fill="url(#cg)"/><polygon points="1537.0,712 1537.0,662.5 1538.0,667.1 1539.0,674.8 1540.0,678.8 1541.0,684.7 1542.0,686.9 1543.0,691.3 1544.0,687.9 1545.0,686.1 1546.0,681.8 1547.0,677.9 1548.0,674.2 1549.0,672.3 1550.0,669.5 1551.0,673.4 1552.0,676.6 1553.0,679.2 1554.0,680.9 1555.0,683.4 1556.0,686.4 1557.0,687.0 1558.0,682.6 1559.0,680.2 1560.0,673.5 1561.0,669.3 1562.0,670.0 1563.0,670.0 1564.0,667.7 1565.0,668.9 1566.0,666.4 1567.0,666.7 1568.0,667.0 1569.0,665.2 1570.0,666.2 1571.0,664.4 1572.0,662.2 1573.0,662.9 1574.0,661.1 1575.0,662.6 1576.0,664.4 1577.0,668.0 1578.0,666.7 1579.0,664.3 1580.0,663.8 1581.0,663.4 1582.0,661.2 1583.0,665.2 1584.0,668.5 1585.0,671.1 1586.0,669.4 1587.0,667.8 1588.0,665.1 1589.0,664.8 1590.0,666.5 1591.0,669.7 1592.0,670.7 1593.0,670.0 1594.0,666.9 1595.0,664.8 1596.0,662.6 1597.0,662.5 1598.0,658.3 1599.0,651.2 1600.0,647.3 1601.0,643.0 1602.0,638.5 1603.0,636.3 1604.0,639.5 1605.0,643.8 1606.0,648.3 1607.0,653.9 1608.0,657.5 1609.0,661.8 1610.0,665.4 1611.0,670.1 1612.0,674.3 1613.0,668.9 1614.0,660.6 1615.0,653.8 1616.0,646.5 1617.0,637.9 1618.0,632.4 1619.0,635.6 1620.0,642.9 1621.0,649.8 1622.0,659.7 1623.0,666.0 1624.0,665.0 1625.0,661.4 1626.0,658.0 1627.0,655.6 1628.0,650.0 1629.0,654.3 1630.0,657.7 1631.0,665.0 1632.0,670.6 1633.0,675.0 1634.0,681.0 1635.0,684.7 1636.0,686.5 1637.0,690.7 1638.0,696.0 1639.0,693.4 1640.0,692.6 1641.0,691.6 1642.0,690.0 1643.0,689.1 1644.0,688.0 1645.0,688.6 1646.0,690.9 1647.0,694.1 1648.0,697.0 1649.0,692.8 1650.0,681.3 1651.0,668.7 1652.0,664.7 1653.0,671.1 1654.0,676.8 1655.0,684.4 1656.0,686.6 1657.0,691.8 1658.0,695.1 1659.0,697.3 1660.0,700.4 1661.0,698.5 1662.0,683.9 1663.0,666.1 1664.0,644.4 1665.0,630.8 1666.0,628.6 1667.0,628.5 1668.0,632.6 1669.0,643.1 1670.0,655.5 1671.0,663.5 1672.0,657.7 1673.0,651.5 1674.0,644.4 1675.0,647.1 1676.0,658.4 1677.0,665.7 1678.0,670.7 1679.0,670.0 1680.0,671.4 1681.0,671.4 1682.0,672.3 1683.0,673.0 1684.0,672.4 1685.0,672.5 1686.0,672.7 1687.0,673.4 1688.0,672.9 1689.0,673.3 1690.0,673.3 1691.0,674.0 1692.0,671.7 1693.0,671.5 1694.0,669.8 1695.0,668.4 1696.0,668.9 1697.0,666.7 1698.0,670.0 1699.0,673.4 1700.0,679.0 1701.0,678.5 1702.0,674.5 1703.0,668.0 1704.0,665.8 1705.0,669.1 1706.0,669.2 1707.0,670.9 1708.0,672.5 1709.0,673.0 1710.0,672.0 1711.0,673.8 1712.0,674.4 1713.0,673.4 1714.0,675.5 1715.0,675.2 1716.0,675.3 1717.0,675.2 1718.0,674.4 1719.0,673.7 1720.0,672.2 1721.0,671.3 1722.0,669.4 1723.0,668.0 1724.0,667.7 1725.0,666.2 1726.0,664.7 1727.0,663.0 1728.0,661.7 1729.0,661.2 1730.0,660.5 1731.0,661.8 1732.0,659.8 1733.0,659.1 1734.0,657.6 1735.0,645.9 1736.0,639.7 1737.0,631.8 1738.0,623.1 1739.0,616.1 1740.0,625.0 1741.0,635.0 1742.0,643.6 1743.0,654.2 1744.0,663.6 1745.0,673.9 1746.0,682.2 1747.0,687.6 1748.0,689.5 1749.0,692.9 1750.0,697.9 1751.0,698.8 1752.0,686.7 1753.0,664.0 1754.0,642.0 1755.0,619.5 1756.0,619.2 1757.0,635.3 1758.0,655.6 1759.0,673.0 1760.0,680.0 1761.0,681.6 1762.0,683.0 1763.0,686.3 1764.0,685.7 1765.0,688.0 1766.0,690.5 1767.0,690.3 1768.0,691.9 1769.0,692.0 1770.0,686.0 1771.0,678.6 1772.0,668.3 1773.0,660.5 1774.0,663.8 1775.0,666.7 1776.0,666.1 1777.0,666.6 1778.0,665.4 1779.0,663.8 1780.0,664.4 1781.0,663.9 1782.0,663.0 1783.0,654.6 1784.0,645.5 1785.0,636.5 1786.0,636.7 1787.0,647.0 1788.0,657.0 1789.0,666.0 1790.0,666.3 1791.0,666.6 1792.0,667.2 1793.0,669.3 1794.0,669.3 1795.0,670.6 1796.0,668.5 1797.0,663.7 1798.0,659.3 1799.0,655.0 1800.0,649.8 1801.0,645.0 1802.0,636.2 1803.0,628.3 1804.0,619.9 1805.0,611.8 1806.0,626.9 1807.0,643.5 1808.0,663.0 1809.0,671.2 1810.0,669.3 1811.0,669.1 1812.0,667.6 1813.0,668.9 1814.0,669.5 1815.0,668.5 1816.0,669.1 1817.0,668.7 1818.0,669.0 1819.0,668.0 1820.0,668.2 1821.0,666.5 1822.0,667.2 1823.0,667.4 1824.0,667.5 1825.0,668.0 1826.0,670.8 1827.0,670.3 1828.0,668.6 1829.0,668.5 1830.0,667.9 1831.0,666.9 1832.0,668.1 1833.0,667.7 1834.0,668.9 1835.0,668.5 1836.0,671.3 1837.0,670.6 1838.0,670.5 1839.0,672.9 1840.0,672.2 1841.0,672.4 1842.0,669.4 1843.0,667.9 1844.0,666.6 1845.0,665.5 1846.0,663.1 1847.0,661.6 1848.0,659.2 1849.0,658.9 1850.0,658.8 1851.0,658.8 1852.0,658.2 1853.0,637.7 1854.0,626.1 1855.0,627.3 1856.0,628.0 1857.0,627.1 1858.0,635.6 1859.0,649.3 1860.0,664.4 1861.0,668.5 1862.0,669.7 1863.0,670.8 1864.0,671.9 1865.0,672.4 1866.0,673.6 1867.0,672.9 1868.0,674.9 1869.0,674.0 1870.0,671.8 1871.0,670.6 1872.0,669.5 1873.0,667.7 1874.0,667.4 1875.0,668.4 1876.0,668.9 1877.0,669.7 1878.0,672.2 1879.0,672.1 1880.0,673.9 1881.0,675.5 1882.0,675.9 1883.0,675.0 1884.0,675.5 1885.0,674.2 1886.0,673.5 1887.0,674.5 1888.0,674.2 1889.0,673.6 1890.0,674.6 1891.0,672.0 1892.0,671.9 1893.0,670.8 1894.0,670.9 1895.0,674.1 1896.0,674.5 1897.0,676.8 1898.0,670.3 1899.0,658.7 1900.0,648.9 1901.0,638.2 1902.0,634.2 1903.0,630.1 1904.0,626.4 1905.0,622.8 1906.0,622.9 1907.0,621.6 1908.0,630.2 1909.0,639.9 1910.0,638.5 1911.0,632.8 1912.0,628.1 1913.0,622.4 1914.0,619.8 1915.0,618.6 1916.0,615.5 1917.0,629.3 1918.0,642.4 1919.0,657.6 1920.0,668.8 1921.0,670.9 1922.0,669.7 1923.0,670.7 1924.0,668.8 1925.0,668.9 1926.0,668.0 1927.0,668.1 1928.0,670.2 1929.0,670.6 1930.0,673.2 1931.0,672.2 1932.0,673.2 1933.0,674.3 1934.0,673.9 1935.0,673.5 1936.0,672.1 1937.0,671.9 1938.0,672.0 1939.0,671.2 1940.0,670.1 1941.0,667.4 1942.0,662.5 1943.0,658.7 1944.0,654.7 1945.0,644.7 1946.0,634.8 1947.0,624.9 1948.0,622.6 1949.0,619.7 1950.0,628.2 1951.0,642.6 1952.0,657.7 1953.0,660.0 1954.0,660.3 1955.0,661.2 1956.0,661.2 1957.0,659.4 1958.0,658.0 1959.0,655.1 1960.0,653.9 1961.0,648.8 1962.0,644.9 1963.0,651.5 1964.0,664.3 1965.0,668.3 1966.0,667.3 1967.0,663.5 1968.0,661.2 1969.0,658.5 1970.0,650.7 1971.0,645.2 1972.0,640.1 1973.0,645.3 1974.0,657.0 1975.0,663.6 1976.0,664.0 1977.0,664.4 1978.0,667.6 1979.0,667.4 1980.0,667.7 1981.0,668.3 1982.0,667.8 1983.0,665.8 1984.0,660.8 1985.0,655.3 1986.0,650.3 1987.0,654.3 1988.0,656.2 1989.0,660.4 1990.0,669.0 1991.0,675.9 1992.0,676.2 1993.0,675.1 1994.0,673.7 1995.0,672.9 1996.0,670.6 1997.0,670.9 1998.0,669.3 1999.0,668.4 2000.0,669.3 2001.0,670.4 2002.0,669.8 2003.0,669.8 2004.0,668.8 2005.0,668.2 2006.0,666.9 2007.0,665.0 2008.0,663.2 2009.0,661.2 2010.0,662.0 2011.0,665.2 2012.0,665.7 2013.0,667.8 2014.0,667.9 2015.0,668.4 2016.0,669.7 2017.0,671.7 2018.0,671.8 2019.0,672.3 2020.0,673.3 2021.0,673.0 2022.0,673.3 2023.0,672.6 2024.0,672.9 2025.0,674.1 2026.0,670.8 2027.0,666.7 2028.0,665.0 2029.0,667.7 2030.0,669.8 2031.0,670.2 2032.0,670.0 2033.0,669.3 2034.0,666.9 2035.0,665.0 2036.0,662.5 2037.0,663.4 2038.0,665.2 2039.0,667.5 2040.0,672.0 2041.0,673.9 2042.0,675.9 2043.0,675.7 2044.0,673.6 2045.0,674.3 2046.0,673.1 2047.0,672.1 2048.0,671.0 2049.0,672.8 2050.0,672.6 2051.0,673.6 2052.0,672.6 2053.0,672.7 2054.0,671.5 2055.0,671.5 2056.0,672.2 2057.0,673.6 2058.0,673.7 2059.0,669.9 2060.0,663.8 2061.0,655.8 2062.0,647.6 2063.0,641.7 2064.0,639.1 2065.0,637.1 2066.0,638.2 2067.0,640.2 2068.0,643.2 2069.0,654.6 2070.0,666.3 2071.0,670.0 2072.0,668.1 2073.0,666.1 2074.0,667.7 2075.0,669.5 2076.0,672.0 2077.0,671.0 2078.0,668.8 2079.0,667.0 2080.0,665.4 2081.0,664.5 2082.0,662.3 2083.0,662.0 2084.0,662.0 2085.0,663.3 2086.0,662.9 2087.0,665.4 2088.0,666.6 2089.0,669.5 2090.0,671.3 2091.0,672.0 2092.0,672.3 2093.0,672.1 2094.0,671.2 2095.0,671.6 2096.0,671.9 2097.0,672.4 2098.0,670.5 2099.0,672.1 2100.0,672.3 2101.0,671.9 2102.0,670.8 2103.0,669.4 2104.0,671.0 2105.0,670.8 2106.0,669.3 2107.0,671.3 2108.0,666.6 2109.0,659.9 2110.0,655.5 2111.0,648.4 2112.0,644.9 2113.0,650.1 2114.0,660.7 2115.0,668.8 2116.0,667.8 2117.0,668.0 2118.0,667.1 2119.0,665.5 2120.0,666.1 2121.0,667.0 2122.0,666.3 2123.0,668.1 2124.0,667.2 2125.0,667.3 2126.0,667.9 2127.0,666.9 2128.0,664.0 2129.0,664.7 2130.0,662.8 2131.0,662.5 2132.0,666.0 2133.0,671.0 2134.0,672.2 2135.0,674.4 2136.0,672.5 2137.0,670.3 2138.0,667.3 2139.0,666.6 2140.0,667.0 2141.0,668.0 2142.0,670.5 2143.0,672.3 2144.0,669.8 2145.0,670.9 2146.0,670.7 2147.0,670.5 2148.0,668.6 2149.0,670.8 2150.0,671.8 2151.0,672.2 2152.0,673.8 2153.0,672.4 2154.0,671.3 2155.0,668.7 2156.0,669.8 2157.0,669.9 2158.0,669.4 2159.0,670.1 2160.0,671.8 2161.0,671.7 2162.0,670.9 2163.0,670.8 2164.0,671.5 2165.0,670.9 2166.0,671.1 2167.0,670.0 2168.0,669.4 2169.0,669.3 2170.0,669.1 2171.0,669.2 2172.0,667.3 2173.0,667.3 2174.0,666.5 2175.0,664.7 2176.0,662.6 2177.0,659.0 2178.0,649.0 2179.0,645.4 2180.0,645.8 2181.0,644.0 2182.0,648.9 2183.0,660.9 2184.0,674.1 2185.0,687.6 2186.0,687.2 2187.0,687.4 2188.0,689.6 2189.0,690.2 2190.0,693.1 2191.0,692.5 2192.0,693.6 2193.0,691.9 2194.0,691.4 2195.0,689.2 2196.0,686.6 2197.0,680.8 2198.0,673.4 2199.0,670.6 2200.0,669.0 2201.0,667.9 2202.0,668.1 2203.0,669.4 2204.0,670.3 2205.0,670.4 2206.0,670.3 2207.0,670.9 2208.0,673.3 2209.0,680.7 2210.0,685.6 2211.0,688.4 2212.0,681.9 2213.0,674.7 2214.0,670.1 2215.0,669.8 2216.0,668.8 2217.0,669.5 2218.0,670.8 2219.0,680.4 2220.0,688.2 2221.0,692.5 2222.0,695.6 2223.0,693.8 2224.0,691.8 2225.0,688.4 2226.0,670.1 2227.0,649.7 2228.0,656.9 2229.0,671.6 2230.0,688.1 2231.0,694.1 2232.0,693.6 2233.0,692.0 2234.0,690.9 2235.0,689.9 2236.0,690.9 2237.0,692.9 2238.0,691.7 2239.0,679.5 2240.0,661.8 2241.0,661.1 2242.0,662.8 2243.0,664.0 2244.0,667.8 2245.0,667.0 2246.0,669.9 2247.0,670.9 2248.0,671.9 2249.0,671.4 2250.0,672.7 2251.0,674.1 2252.0,668.8 2253.0,665.4 2254.0,661.4 2255.0,658.1 2256.0,653.6 2257.0,648.1 2258.0,651.2 2259.0,655.0 2260.0,658.1 2261.0,661.2 2262.0,664.4 2263.0,666.6 2264.0,675.7 2265.0,683.6 2266.0,687.8 2267.0,690.8 2268.0,690.5 2269.0,689.8 2270.0,688.0 2271.0,689.3 2272.0,691.4 2273.0,693.2 2274.0,695.2 2275.0,687.4 2276.0,676.9 2277.0,669.0 2278.0,668.3 2279.0,670.4 2280.0,668.6 2281.0,668.9 2282.0,670.1 2283.0,668.5 2284.0,669.9 2285.0,667.8 2286.0,663.9 2287.0,661.5 2288.0,658.8 2289.0,654.5 2290.0,649.5 2291.0,655.4 2292.0,661.4 2293.0,664.8 2294.0,674.2 2295.0,684.3 2296.0,691.2 2297.0,692.0 2298.0,693.3 2299.0,694.3 2300.0,696.0 2301.0,687.1 2302.0,678.8 2303.0,671.3 2304.0,671.2 2305.0,669.9 2306.0,668.3 2307.0,668.6 2308.0,668.3 2309.0,667.3 2310.0,665.9 2311.0,665.4 2312.0,665.1 2313.0,663.3 2314.0,663.5 2315.0,662.6 2316.0,662.3 2317.0,667.1 2318.0,669.6 2319.0,674.2 2320.0,680.9 2321.0,686.3 2322.0,687.9 2323.0,691.1 2324.0,691.3 2325.0,691.2 2326.0,691.4 2327.0,692.0 2328.0,690.1 2329.0,691.6 2330.0,688.1 2331.0,681.1 2332.0,674.5 2333.0,669.3 2334.0,669.3 2335.0,669.8 2336.0,668.6 2337.0,667.0 2338.0,667.9 2339.0,667.9 2340.0,668.0 2341.0,670.2 2342.0,671.0 2343.0,670.3 2344.0,673.0 2345.0,672.2 2346.0,672.3 2347.0,668.7 2348.0,668.5 2349.0,666.2 2350.0,662.7 2351.0,660.1 2352.0,659.2 2353.0,671.1 2354.0,682.9 2355.0,688.2 2356.0,689.8 2357.0,688.0 2358.0,689.5 2359.0,688.6 2360.0,688.6 2361.0,688.8 2362.0,687.2 2363.0,688.4 2364.0,688.1 2365.0,687.3 2366.0,685.8 2367.0,683.1 2368.0,682.2 2369.0,684.5 2370.0,687.9 2371.0,692.4 2372.0,692.2 2373.0,687.9 2374.0,680.8 2375.0,672.7 2376.0,666.9 2377.0,669.5 2378.0,671.0 2379.0,671.7 2380.0,673.9 2381.0,674.9 2382.0,679.7 2383.0,682.2 2384.0,686.0 2385.0,689.1 2386.0,691.9 2387.0,691.7 2388.0,690.1 2389.0,690.1 2390.0,672.1 2391.0,647.4 2392.0,651.2 2393.0,660.5 2394.0,668.5 2395.0,669.3 2396.0,670.4 2397.0,670.2 2398.0,670.7 2399.0,670.6 2400.0,668.5 2401.0,668.6 2402.0,667.9 2403.0,666.3 2404.0,665.8 2405.0,667.6 2406.0,674.7 2407.0,681.6 2408.0,682.0 2409.0,677.6 2410.0,673.2 2411.0,667.6 2412.0,666.1 2413.0,667.5 2414.0,667.3 2415.0,668.3 2416.0,666.7 2417.0,668.2 2418.0,669.2 2419.0,668.5 2420.0,669.6 2421.0,670.5 2422.0,676.0 2423.0,685.0 2424.0,687.8 2425.0,686.3 2426.0,685.9 2427.0,688.4 2428.0,686.0 2429.0,687.7 2430.0,689.7 2431.0,690.9 2432.0,690.8 2433.0,688.7 2434.0,688.9 2435.0,689.3 2436.0,689.5 2437.0,689.7 2438.0,689.9 2439.0,688.9 2440.0,690.7 2441.0,689.2 2442.0,686.1 2443.0,680.1 2444.0,673.4 2445.0,672.5 2446.0,671.0 2447.0,670.0 2448.0,668.2 2449.0,667.5 2450.0,665.9 2451.0,664.9 2452.0,663.2 2453.0,660.5 2454.0,662.5 2455.0,663.2 2456.0,664.5 2457.0,667.4 2458.0,667.4 2459.0,668.9 2460.0,670.6 2461.0,667.1 2462.0,664.4 2463.0,661.3 2464.0,658.6 2465.0,653.7 2466.0,648.5 2467.0,643.8 2468.0,637.3 2469.0,629.5 2470.0,633.4 2471.0,645.3 2472.0,659.3 2473.0,668.6 2474.0,664.0 2475.0,659.3 2476.0,653.7 2477.0,647.0 2478.0,644.9 2479.0,640.4 2480.0,641.1 2481.0,651.2 2482.0,661.1 2483.0,668.5 2484.0,668.5 2485.0,667.7 2486.0,668.4 2487.0,666.7 2488.0,666.6 2489.0,667.6 2490.0,668.5 2491.0,668.8 2492.0,667.8 2493.0,668.8 2494.0,668.6 2495.0,669.6 2496.0,667.8 2497.0,667.2 2498.0,667.1 2499.0,667.3 2500.0,668.3 2501.0,666.8 2502.0,666.4 2503.0,667.5 2504.0,667.5 2505.0,668.4 2506.0,667.5 2507.0,666.5 2508.0,668.0 2509.0,666.4 2510.0,666.8 2510.0,712" fill="url(#cb)"/><polygon points="1537.0,712 1537.0,689.0 1538.0,689.8 1539.0,694.2 1540.0,698.0 1541.0,701.1 1542.0,702.1 1543.0,700.5 1544.0,702.4 1545.0,702.8 1546.0,702.2 1547.0,701.9 1548.0,700.8 1549.0,700.7 1550.0,701.9 1551.0,702.4 1552.0,701.0 1553.0,701.8 1554.0,701.4 1555.0,700.7 1556.0,702.7 1557.0,702.7 1558.0,701.1 1559.0,702.3 1560.0,700.5 1561.0,701.8 1562.0,700.5 1563.0,700.4 1564.0,700.0 1565.0,701.0 1566.0,700.0 1567.0,701.8 1568.0,702.4 1569.0,702.3 1570.0,701.2 1571.0,701.0 1572.0,701.5 1573.0,702.7 1574.0,702.4 1575.0,700.9 1576.0,701.5 1577.0,701.9 1578.0,700.2 1579.0,701.3 1580.0,701.9 1581.0,701.7 1582.0,700.9 1583.0,702.5 1584.0,700.2 1585.0,700.5 1586.0,700.5 1587.0,702.0 1588.0,700.7 1589.0,700.9 1590.0,701.2 1591.0,701.4 1592.0,700.4 1593.0,700.6 1594.0,700.3 1595.0,699.9 1596.0,701.2 1597.0,700.0 1598.0,700.6 1599.0,700.5 1600.0,700.6 1601.0,696.4 1602.0,691.3 1603.0,685.5 1604.0,679.2 1605.0,674.6 1606.0,681.2 1607.0,687.3 1608.0,692.9 1609.0,697.8 1610.0,701.5 1611.0,701.7 1612.0,702.5 1613.0,701.1 1614.0,701.5 1615.0,701.7 1616.0,695.9 1617.0,687.2 1618.0,677.2 1619.0,680.6 1620.0,690.3 1621.0,698.3 1622.0,701.7 1623.0,701.0 1624.0,701.3 1625.0,699.8 1626.0,701.1 1627.0,695.0 1628.0,687.0 1629.0,687.9 1630.0,695.8 1631.0,699.8 1632.0,701.4 1633.0,700.6 1634.0,701.9 1635.0,701.9 1636.0,701.7 1637.0,702.7 1638.0,700.1 1639.0,702.8 1640.0,701.1 1641.0,701.4 1642.0,701.6 1643.0,701.9 1644.0,700.3 1645.0,701.9 1646.0,702.4 1647.0,701.3 1648.0,701.0 1649.0,702.1 1650.0,700.8 1651.0,699.9 1652.0,702.7 1653.0,700.9 1654.0,702.4 1655.0,702.4 1656.0,702.3 1657.0,702.5 1658.0,702.6 1659.0,700.2 1660.0,701.9 1661.0,700.0 1662.0,700.7 1663.0,701.3 1664.0,700.9 1665.0,696.1 1666.0,685.4 1667.0,672.6 1668.0,671.0 1669.0,684.0 1670.0,695.0 1671.0,700.7 1672.0,694.5 1673.0,686.4 1674.0,677.2 1675.0,685.9 1676.0,694.0 1677.0,700.4 1678.0,702.4 1679.0,700.4 1680.0,701.2 1681.0,700.6 1682.0,702.7 1683.0,700.1 1684.0,702.8 1685.0,700.9 1686.0,702.5 1687.0,701.7 1688.0,702.3 1689.0,702.3 1690.0,701.4 1691.0,701.7 1692.0,700.8 1693.0,702.4 1694.0,700.8 1695.0,701.0 1696.0,697.7 1697.0,693.5 1698.0,695.8 1699.0,699.6 1700.0,700.0 1701.0,699.9 1702.0,700.5 1703.0,697.5 1704.0,698.8 1705.0,700.1 1706.0,702.6 1707.0,701.6 1708.0,701.6 1709.0,702.7 1710.0,701.3 1711.0,702.5 1712.0,701.2 1713.0,700.2 1714.0,701.2 1715.0,701.7 1716.0,700.1 1717.0,700.3 1718.0,701.9 1719.0,700.3 1720.0,702.6 1721.0,701.5 1722.0,702.6 1723.0,702.2 1724.0,702.5 1725.0,700.5 1726.0,700.8 1727.0,700.0 1728.0,698.1 1729.0,695.9 1730.0,695.4 1731.0,697.7 1732.0,699.7 1733.0,701.3 1734.0,701.7 1735.0,701.0 1736.0,694.0 1737.0,682.4 1738.0,668.9 1739.0,653.9 1740.0,667.8 1741.0,681.5 1742.0,693.2 1743.0,701.2 1744.0,702.5 1745.0,702.6 1746.0,701.1 1747.0,701.6 1748.0,702.2 1749.0,700.5 1750.0,702.1 1751.0,700.3 1752.0,702.4 1753.0,702.7 1754.0,690.4 1755.0,668.8 1756.0,648.8 1757.0,673.8 1758.0,694.2 1759.0,701.8 1760.0,701.7 1761.0,701.6 1762.0,700.0 1763.0,701.2 1764.0,701.0 1765.0,701.9 1766.0,701.7 1767.0,700.7 1768.0,702.0 1769.0,700.5 1770.0,700.1 1771.0,700.6 1772.0,701.2 1773.0,699.9 1774.0,702.8 1775.0,700.8 1776.0,701.0 1777.0,700.7 1778.0,701.7 1779.0,701.9 1780.0,700.1 1781.0,700.5 1782.0,700.0 1783.0,693.2 1784.0,684.8 1785.0,675.3 1786.0,674.0 1787.0,683.6 1788.0,692.2 1789.0,699.2 1790.0,701.3 1791.0,701.8 1792.0,700.0 1793.0,700.3 1794.0,702.2 1795.0,702.3 1796.0,700.5 1797.0,700.4 1798.0,699.9 1799.0,702.5 1800.0,702.2 1801.0,700.8 1802.0,700.0 1803.0,686.3 1804.0,668.4 1805.0,647.8 1806.0,663.7 1807.0,682.4 1808.0,697.4 1809.0,701.3 1810.0,701.1 1811.0,700.3 1812.0,701.5 1813.0,702.6 1814.0,701.4 1815.0,701.6 1816.0,701.7 1817.0,700.5 1818.0,702.0 1819.0,701.2 1820.0,699.9 1821.0,702.5 1822.0,700.7 1823.0,701.6 1824.0,701.0 1825.0,700.9 1826.0,700.5 1827.0,700.3 1828.0,699.8 1829.0,702.4 1830.0,699.9 1831.0,701.5 1832.0,701.9 1833.0,702.3 1834.0,701.7 1835.0,702.2 1836.0,699.9 1837.0,702.1 1838.0,702.7 1839.0,702.0 1840.0,700.5 1841.0,699.9 1842.0,702.5 1843.0,701.7 1844.0,699.9 1845.0,702.0 1846.0,701.0 1847.0,697.0 1848.0,691.9 1849.0,694.3 1850.0,698.9 1851.0,701.9 1852.0,700.0 1853.0,695.8 1854.0,686.5 1855.0,675.7 1856.0,663.6 1857.0,668.8 1858.0,664.8 1859.0,674.0 1860.0,682.5 1861.0,690.2 1862.0,696.9 1863.0,700.6 1864.0,700.9 1865.0,702.1 1866.0,701.5 1867.0,702.4 1868.0,701.1 1869.0,700.3 1870.0,702.7 1871.0,700.6 1872.0,702.1 1873.0,702.6 1874.0,702.6 1875.0,700.1 1876.0,700.9 1877.0,700.5 1878.0,702.8 1879.0,700.1 1880.0,702.2 1881.0,702.2 1882.0,702.6 1883.0,700.8 1884.0,701.3 1885.0,701.1 1886.0,702.0 1887.0,700.1 1888.0,701.5 1889.0,701.9 1890.0,701.7 1891.0,700.9 1892.0,702.5 1893.0,702.5 1894.0,701.1 1895.0,701.6 1896.0,702.0 1897.0,702.5 1898.0,701.6 1899.0,701.9 1900.0,700.4 1901.0,700.3 1902.0,693.8 1903.0,685.7 1904.0,676.5 1905.0,666.4 1906.0,656.4 1907.0,667.1 1908.0,677.1 1909.0,686.3 1910.0,694.3 1911.0,700.4 1912.0,698.2 1913.0,689.0 1914.0,677.9 1915.0,665.4 1916.0,651.8 1917.0,663.2 1918.0,675.9 1919.0,687.3 1920.0,696.9 1921.0,702.5 1922.0,701.7 1923.0,702.4 1924.0,701.0 1925.0,700.2 1926.0,701.8 1927.0,701.5 1928.0,702.4 1929.0,700.6 1930.0,701.9 1931.0,701.5 1932.0,701.8 1933.0,700.7 1934.0,702.3 1935.0,700.4 1936.0,702.7 1937.0,702.4 1938.0,700.2 1939.0,700.8 1940.0,702.1 1941.0,700.8 1942.0,701.3 1943.0,700.6 1944.0,700.5 1945.0,698.9 1946.0,690.8 1947.0,680.9 1948.0,669.7 1949.0,657.6 1950.0,666.8 1951.0,678.2 1952.0,688.5 1953.0,697.1 1954.0,698.1 1955.0,696.3 1956.0,694.3 1957.0,694.1 1958.0,696.1 1959.0,698.0 1960.0,699.0 1961.0,689.5 1962.0,677.6 1963.0,684.8 1964.0,695.5 1965.0,701.5 1966.0,702.0 1967.0,702.2 1968.0,701.7 1969.0,700.9 1970.0,694.8 1971.0,687.0 1972.0,678.1 1973.0,686.1 1974.0,694.1 1975.0,700.4 1976.0,701.4 1977.0,701.2 1978.0,701.5 1979.0,701.9 1980.0,701.2 1981.0,701.0 1982.0,701.6 1983.0,700.5 1984.0,702.4 1985.0,699.8 1986.0,695.8 1987.0,691.0 1988.0,685.7 1989.0,688.6 1990.0,693.6 1991.0,698.1 1992.0,701.5 1993.0,700.8 1994.0,700.2 1995.0,701.4 1996.0,702.1 1997.0,700.3 1998.0,701.3 1999.0,701.4 2000.0,701.6 2001.0,701.5 2002.0,701.7 2003.0,702.3 2004.0,702.7 2005.0,700.1 2006.0,699.8 2007.0,696.2 2008.0,691.9 2009.0,692.2 2010.0,696.4 2011.0,700.0 2012.0,700.1 2013.0,700.0 2014.0,700.2 2015.0,700.6 2016.0,702.0 2017.0,700.0 2018.0,700.9 2019.0,701.4 2020.0,700.3 2021.0,701.3 2022.0,700.1 2023.0,701.8 2024.0,700.0 2025.0,702.0 2026.0,702.1 2027.0,702.1 2028.0,702.4 2029.0,701.9 2030.0,702.5 2031.0,700.0 2032.0,702.0 2033.0,702.6 2034.0,701.3 2035.0,699.6 2036.0,696.6 2037.0,693.1 2038.0,695.3 2039.0,698.5 2040.0,701.1 2041.0,700.3 2042.0,701.8 2043.0,700.9 2044.0,701.9 2045.0,701.0 2046.0,701.9 2047.0,700.8 2048.0,700.6 2049.0,702.4 2050.0,700.6 2051.0,700.9 2052.0,702.2 2053.0,702.5 2054.0,701.4 2055.0,701.9 2056.0,700.8 2057.0,701.4 2058.0,702.4 2059.0,702.2 2060.0,702.7 2061.0,700.2 2062.0,695.8 2063.0,690.4 2064.0,684.3 2065.0,677.7 2066.0,673.8 2067.0,680.7 2068.0,687.1 2069.0,692.9 2070.0,697.9 2071.0,701.7 2072.0,700.8 2073.0,700.7 2074.0,701.0 2075.0,700.5 2076.0,701.2 2077.0,701.4 2078.0,701.1 2079.0,700.7 2080.0,700.0 2081.0,698.7 2082.0,697.2 2083.0,695.7 2084.0,696.3 2085.0,697.8 2086.0,699.2 2087.0,700.5 2088.0,699.9 2089.0,700.8 2090.0,699.9 2091.0,702.7 2092.0,702.0 2093.0,702.1 2094.0,700.1 2095.0,702.0 2096.0,702.4 2097.0,700.5 2098.0,702.1 2099.0,701.4 2100.0,702.0 2101.0,702.5 2102.0,701.2 2103.0,700.0 2104.0,701.5 2105.0,699.8 2106.0,700.4 2107.0,701.4 2108.0,702.4 2109.0,699.5 2110.0,694.3 2111.0,688.1 2112.0,681.2 2113.0,684.0 2114.0,690.6 2115.0,696.5 2116.0,701.0 2117.0,701.4 2118.0,699.9 2119.0,698.0 2120.0,696.0 2121.0,696.4 2122.0,698.4 2123.0,700.0 2124.0,701.5 2125.0,702.2 2126.0,701.2 2127.0,700.1 2128.0,700.4 2129.0,700.2 2130.0,701.6 2131.0,697.4 2132.0,691.8 2133.0,691.4 2134.0,697.1 2135.0,701.4 2136.0,701.7 2137.0,700.0 2138.0,700.0 2139.0,702.5 2140.0,700.5 2141.0,700.6 2142.0,702.1 2143.0,699.9 2144.0,701.6 2145.0,701.3 2146.0,700.0 2147.0,702.1 2148.0,701.9 2149.0,701.3 2150.0,701.4 2151.0,700.4 2152.0,701.0 2153.0,702.2 2154.0,700.8 2155.0,697.6 2156.0,697.9 2157.0,700.8 2158.0,702.1 2159.0,701.1 2160.0,700.1 2161.0,702.4 2162.0,700.9 2163.0,702.0 2164.0,700.8 2165.0,700.8 2166.0,702.5 2167.0,699.9 2168.0,699.8 2169.0,701.4 2170.0,701.1 2171.0,701.2 2172.0,701.0 2173.0,702.4 2174.0,702.4 2175.0,700.5 2176.0,700.5 2177.0,699.2 2178.0,694.9 2179.0,689.7 2180.0,684.0 2181.0,677.9 2182.0,678.4 2183.0,684.5 2184.0,690.1 2185.0,695.2 2186.0,699.5 2187.0,700.4 2188.0,700.5 2189.0,700.1 2190.0,700.2 2191.0,700.4 2192.0,701.8 2193.0,699.8 2194.0,702.4 2195.0,700.3 2196.0,700.0 2197.0,701.8 2198.0,699.9 2199.0,700.2 2200.0,700.6 2201.0,702.1 2202.0,701.0 2203.0,700.9 2204.0,701.7 2205.0,702.6 2206.0,701.8 2207.0,700.4 2208.0,701.1 2209.0,702.5 2210.0,702.8 2211.0,700.2 2212.0,702.5 2213.0,701.4 2214.0,700.0 2215.0,699.8 2216.0,702.2 2217.0,701.4 2218.0,701.0 2219.0,701.2 2220.0,702.4 2221.0,701.8 2222.0,699.9 2223.0,699.9 2224.0,701.5 2225.0,701.8 2226.0,701.2 2227.0,702.4 2228.0,702.6 2229.0,700.5 2230.0,700.0 2231.0,700.0 2232.0,701.4 2233.0,700.5 2234.0,700.7 2235.0,702.0 2236.0,701.1 2237.0,700.1 2238.0,700.7 2239.0,700.4 2240.0,700.0 2241.0,701.9 2242.0,700.0 2243.0,699.9 2244.0,701.8 2245.0,702.0 2246.0,702.4 2247.0,702.2 2248.0,702.4 2249.0,700.2 2250.0,702.0 2251.0,701.6 2252.0,700.4 2253.0,700.8 2254.0,698.4 2255.0,695.5 2256.0,692.3 2257.0,688.8 2258.0,687.6 2259.0,691.2 2260.0,694.5 2261.0,697.5 2262.0,700.1 2263.0,701.8 2264.0,701.1 2265.0,701.6 2266.0,701.7 2267.0,700.8 2268.0,700.0 2269.0,702.0 2270.0,702.1 2271.0,702.7 2272.0,701.7 2273.0,699.9 2274.0,701.6 2275.0,700.1 2276.0,701.5 2277.0,702.5 2278.0,700.8 2279.0,699.8 2280.0,701.5 2281.0,701.3 2282.0,699.9 2283.0,702.4 2284.0,701.5 2285.0,700.5 2286.0,701.3 2287.0,697.4 2288.0,692.3 2289.0,686.5 2290.0,683.2 2291.0,689.4 2292.0,694.9 2293.0,699.5 2294.0,701.6 2295.0,701.1 2296.0,701.3 2297.0,701.8 2298.0,701.9 2299.0,700.7 2300.0,701.0 2301.0,701.7 2302.0,700.3 2303.0,701.8 2304.0,699.8 2305.0,700.2 2306.0,701.9 2307.0,702.2 2308.0,702.4 2309.0,700.1 2310.0,702.0 2311.0,700.2 2312.0,700.5 2313.0,701.0 2314.0,698.9 2315.0,696.3 2316.0,693.4 2317.0,694.5 2318.0,697.2 2319.0,699.7 2320.0,700.6 2321.0,700.5 2322.0,700.5 2323.0,702.2 2324.0,700.4 2325.0,700.6 2326.0,699.8 2327.0,700.1 2328.0,702.2 2329.0,700.0 2330.0,701.3 2331.0,702.4 2332.0,701.0 2333.0,700.5 2334.0,701.2 2335.0,700.0 2336.0,700.9 2337.0,701.3 2338.0,701.0 2339.0,700.1 2340.0,700.0 2341.0,698.0 2342.0,695.9 2343.0,698.2 2344.0,700.2 2345.0,701.0 2346.0,700.5 2347.0,701.1 2348.0,701.6 2349.0,699.9 2350.0,699.0 2351.0,696.9 2352.0,694.6 2353.0,696.7 2354.0,698.8 2355.0,700.6 2356.0,699.9 2357.0,700.6 2358.0,701.8 2359.0,702.6 2360.0,702.3 2361.0,702.7 2362.0,700.1 2363.0,701.5 2364.0,701.2 2365.0,700.7 2366.0,701.6 2367.0,702.4 2368.0,701.8 2369.0,700.9 2370.0,701.8 2371.0,699.9 2372.0,700.4 2373.0,700.8 2374.0,701.6 2375.0,701.7 2376.0,701.7 2377.0,701.3 2378.0,702.0 2379.0,700.7 2380.0,702.2 2381.0,702.8 2382.0,700.5 2383.0,700.4 2384.0,702.3 2385.0,702.2 2386.0,700.1 2387.0,701.0 2388.0,701.1 2389.0,701.3 2390.0,700.2 2391.0,701.4 2392.0,701.4 2393.0,700.6 2394.0,700.6 2395.0,700.2 2396.0,702.2 2397.0,700.6 2398.0,701.0 2399.0,700.4 2400.0,702.7 2401.0,701.5 2402.0,700.5 2403.0,701.4 2404.0,700.4 2405.0,699.4 2406.0,698.2 2407.0,697.0 2408.0,697.3 2409.0,698.6 2410.0,699.7 2411.0,700.0 2412.0,700.1 2413.0,699.8 2414.0,702.5 2415.0,701.6 2416.0,702.7 2417.0,702.0 2418.0,701.5 2419.0,699.8 2420.0,700.1 2421.0,699.5 2422.0,698.7 2423.0,699.2 2424.0,699.9 2425.0,700.3 2426.0,701.3 2427.0,701.6 2428.0,702.6 2429.0,702.6 2430.0,701.3 2431.0,701.9 2432.0,700.8 2433.0,702.6 2434.0,702.6 2435.0,700.1 2436.0,699.9 2437.0,702.1 2438.0,701.4 2439.0,701.3 2440.0,700.1 2441.0,702.4 2442.0,700.5 2443.0,701.9 2444.0,702.1 2445.0,702.3 2446.0,700.7 2447.0,702.2 2448.0,700.4 2449.0,702.6 2450.0,700.9 2451.0,699.0 2452.0,696.7 2453.0,694.2 2454.0,692.1 2455.0,694.8 2456.0,697.3 2457.0,699.5 2458.0,701.3 2459.0,702.2 2460.0,700.9 2461.0,702.0 2462.0,700.7 2463.0,702.4 2464.0,700.1 2465.0,701.1 2466.0,701.7 2467.0,700.9 2468.0,692.7 2469.0,674.3 2470.0,667.5 2471.0,687.2 2472.0,701.4 2473.0,700.2 2474.0,701.3 2475.0,702.0 2476.0,702.4 2477.0,702.5 2478.0,698.9 2479.0,685.3 2480.0,676.1 2481.0,692.0 2482.0,702.7 2483.0,702.3 2484.0,701.8 2485.0,701.1 2486.0,700.0 2487.0,701.6 2488.0,700.7 2489.0,700.6 2490.0,702.1 2491.0,701.9 2492.0,700.0 2493.0,702.5 2494.0,701.9 2495.0,700.5 2496.0,701.8 2497.0,702.5 2498.0,701.5 2499.0,700.3 2500.0,700.0 2501.0,701.6 2502.0,700.4 2503.0,700.2 2504.0,701.0 2505.0,701.1 2506.0,700.3 2507.0,699.9 2508.0,700.5 2509.0,700.4 2510.0,700.9 2510.0,712" fill="url(#co)"/><polygon points="1537.0,712 1537.0,705.1 1538.0,705.1 1539.0,705.4 1540.0,704.9 1541.0,705.6 1542.0,705.9 1543.0,704.9 1544.0,705.0 1545.0,705.8 1546.0,705.7 1547.0,704.9 1548.0,705.3 1549.0,704.9 1550.0,704.9 1551.0,705.7 1552.0,705.6 1553.0,705.2 1554.0,705.0 1555.0,705.4 1556.0,704.8 1557.0,705.0 1558.0,705.5 1559.0,705.8 1560.0,705.7 1561.0,704.9 1562.0,705.3 1563.0,705.1 1564.0,705.9 1565.0,705.5 1566.0,705.5 1567.0,705.6 1568.0,705.8 1569.0,704.8 1570.0,704.8 1571.0,705.6 1572.0,705.4 1573.0,704.9 1574.0,705.0 1575.0,704.9 1576.0,705.8 1577.0,705.0 1578.0,704.8 1579.0,705.4 1580.0,705.4 1581.0,705.7 1582.0,704.8 1583.0,705.5 1584.0,705.0 1585.0,705.0 1586.0,705.2 1587.0,705.1 1588.0,705.1 1589.0,704.9 1590.0,705.9 1591.0,705.2 1592.0,705.2 1593.0,705.2 1594.0,705.5 1595.0,705.1 1596.0,705.3 1597.0,705.0 1598.0,705.1 1599.0,705.7 1600.0,705.2 1601.0,705.0 1602.0,705.9 1603.0,705.2 1604.0,705.2 1605.0,705.7 1606.0,705.6 1607.0,705.9 1608.0,705.2 1609.0,704.9 1610.0,705.6 1611.0,705.0 1612.0,705.2 1613.0,705.5 1614.0,705.0 1615.0,705.2 1616.0,705.2 1617.0,704.8 1618.0,704.9 1619.0,705.3 1620.0,705.2 1621.0,705.4 1622.0,704.8 1623.0,704.9 1624.0,704.8 1625.0,705.5 1626.0,705.6 1627.0,705.2 1628.0,705.0 1629.0,705.3 1630.0,705.0 1631.0,705.7 1632.0,705.2 1633.0,705.2 1634.0,705.1 1635.0,705.5 1636.0,705.4 1637.0,705.3 1638.0,705.4 1639.0,705.3 1640.0,705.4 1641.0,705.2 1642.0,705.5 1643.0,705.7 1644.0,705.8 1645.0,705.4 1646.0,704.9 1647.0,705.3 1648.0,705.7 1649.0,705.8 1650.0,705.0 1651.0,705.1 1652.0,705.1 1653.0,705.7 1654.0,705.1 1655.0,704.9 1656.0,705.4 1657.0,705.9 1658.0,705.8 1659.0,705.1 1660.0,705.4 1661.0,705.4 1662.0,705.8 1663.0,705.2 1664.0,705.3 1665.0,705.3 1666.0,705.3 1667.0,705.5 1668.0,705.1 1669.0,705.2 1670.0,705.2 1671.0,705.4 1672.0,705.9 1673.0,705.7 1674.0,705.7 1675.0,705.2 1676.0,705.2 1677.0,705.5 1678.0,705.5 1679.0,705.2 1680.0,705.0 1681.0,705.3 1682.0,705.8 1683.0,705.9 1684.0,705.1 1685.0,704.9 1686.0,705.4 1687.0,705.7 1688.0,704.9 1689.0,705.6 1690.0,705.6 1691.0,704.9 1692.0,705.1 1693.0,704.9 1694.0,705.6 1695.0,705.7 1696.0,705.6 1697.0,704.8 1698.0,705.4 1699.0,705.1 1700.0,705.2 1701.0,705.4 1702.0,705.8 1703.0,705.9 1704.0,705.3 1705.0,705.8 1706.0,704.9 1707.0,705.8 1708.0,705.6 1709.0,705.8 1710.0,705.7 1711.0,705.3 1712.0,705.8 1713.0,705.2 1714.0,705.9 1715.0,705.3 1716.0,705.1 1717.0,705.4 1718.0,705.8 1719.0,705.1 1720.0,705.8 1721.0,705.8 1722.0,705.6 1723.0,705.8 1724.0,705.5 1725.0,705.6 1726.0,704.9 1727.0,705.3 1728.0,705.2 1729.0,705.1 1730.0,705.5 1731.0,705.7 1732.0,705.6 1733.0,705.3 1734.0,705.8 1735.0,704.9 1736.0,705.4 1737.0,705.9 1738.0,705.1 1739.0,705.7 1740.0,704.9 1741.0,705.6 1742.0,705.4 1743.0,704.9 1744.0,705.2 1745.0,705.4 1746.0,705.9 1747.0,704.9 1748.0,705.6 1749.0,705.5 1750.0,705.5 1751.0,705.0 1752.0,705.5 1753.0,705.4 1754.0,705.8 1755.0,705.7 1756.0,705.1 1757.0,705.0 1758.0,705.3 1759.0,705.5 1760.0,705.6 1761.0,705.1 1762.0,705.0 1763.0,705.2 1764.0,705.5 1765.0,705.3 1766.0,705.8 1767.0,705.1 1768.0,704.9 1769.0,705.8 1770.0,704.8 1771.0,705.0 1772.0,705.7 1773.0,705.6 1774.0,705.5 1775.0,705.7 1776.0,704.9 1777.0,705.8 1778.0,705.1 1779.0,705.7 1780.0,705.2 1781.0,705.2 1782.0,705.8 1783.0,704.9 1784.0,705.4 1785.0,705.6 1786.0,704.8 1787.0,705.8 1788.0,705.7 1789.0,705.2 1790.0,705.8 1791.0,704.8 1792.0,705.2 1793.0,705.1 1794.0,705.8 1795.0,705.8 1796.0,705.8 1797.0,705.0 1798.0,704.9 1799.0,704.8 1800.0,705.8 1801.0,705.4 1802.0,705.8 1803.0,705.5 1804.0,705.5 1805.0,704.8 1806.0,705.1 1807.0,705.8 1808.0,705.1 1809.0,705.6 1810.0,705.0 1811.0,705.5 1812.0,705.8 1813.0,705.2 1814.0,705.8 1815.0,705.3 1816.0,705.8 1817.0,705.9 1818.0,705.9 1819.0,705.5 1820.0,705.7 1821.0,705.4 1822.0,704.8 1823.0,705.8 1824.0,705.4 1825.0,705.2 1826.0,705.9 1827.0,704.9 1828.0,705.5 1829.0,704.9 1830.0,705.4 1831.0,705.7 1832.0,705.4 1833.0,705.8 1834.0,705.8 1835.0,704.9 1836.0,705.0 1837.0,705.8 1838.0,704.9 1839.0,705.4 1840.0,705.5 1841.0,705.3 1842.0,705.8 1843.0,705.5 1844.0,705.3 1845.0,705.3 1846.0,705.1 1847.0,705.1 1848.0,705.4 1849.0,705.0 1850.0,705.9 1851.0,705.9 1852.0,705.2 1853.0,705.3 1854.0,704.9 1855.0,705.7 1856.0,705.4 1857.0,705.5 1858.0,705.3 1859.0,705.5 1860.0,705.7 1861.0,705.8 1862.0,704.8 1863.0,705.0 1864.0,705.0 1865.0,705.2 1866.0,704.9 1867.0,705.7 1868.0,705.1 1869.0,705.9 1870.0,704.9 1871.0,705.8 1872.0,705.2 1873.0,705.8 1874.0,705.8 1875.0,705.2 1876.0,705.8 1877.0,705.8 1878.0,705.6 1879.0,705.3 1880.0,705.7 1881.0,704.9 1882.0,705.5 1883.0,705.2 1884.0,705.7 1885.0,705.4 1886.0,705.7 1887.0,705.3 1888.0,705.2 1889.0,705.0 1890.0,705.6 1891.0,705.6 1892.0,704.8 1893.0,705.5 1894.0,705.0 1895.0,704.8 1896.0,705.1 1897.0,705.5 1898.0,705.1 1899.0,705.8 1900.0,704.9 1901.0,705.3 1902.0,705.7 1903.0,705.6 1904.0,704.9 1905.0,705.8 1906.0,705.3 1907.0,705.3 1908.0,705.3 1909.0,705.7 1910.0,705.5 1911.0,705.5 1912.0,705.7 1913.0,705.4 1914.0,705.3 1915.0,705.1 1916.0,705.1 1917.0,705.7 1918.0,705.8 1919.0,705.7 1920.0,705.2 1921.0,705.1 1922.0,705.6 1923.0,705.1 1924.0,705.5 1925.0,705.4 1926.0,705.6 1927.0,705.8 1928.0,704.8 1929.0,705.1 1930.0,704.9 1931.0,705.2 1932.0,705.2 1933.0,705.3 1934.0,705.0 1935.0,705.9 1936.0,705.0 1937.0,705.4 1938.0,704.8 1939.0,705.0 1940.0,705.2 1941.0,705.9 1942.0,705.1 1943.0,705.6 1944.0,705.2 1945.0,705.1 1946.0,705.0 1947.0,705.9 1948.0,705.4 1949.0,705.4 1950.0,705.0 1951.0,705.0 1952.0,705.0 1953.0,704.9 1954.0,705.8 1955.0,705.5 1956.0,705.9 1957.0,705.1 1958.0,704.9 1959.0,705.7 1960.0,705.5 1961.0,705.1 1962.0,705.1 1963.0,704.9 1964.0,705.2 1965.0,705.1 1966.0,705.5 1967.0,705.1 1968.0,705.0 1969.0,705.2 1970.0,705.6 1971.0,705.4 1972.0,705.3 1973.0,705.5 1974.0,705.7 1975.0,705.2 1976.0,705.0 1977.0,705.2 1978.0,705.4 1979.0,705.6 1980.0,705.8 1981.0,705.2 1982.0,705.1 1983.0,705.0 1984.0,705.2 1985.0,705.8 1986.0,705.2 1987.0,705.4 1988.0,705.6 1989.0,705.2 1990.0,705.8 1991.0,705.6 1992.0,704.9 1993.0,705.7 1994.0,705.8 1995.0,705.1 1996.0,705.8 1997.0,705.6 1998.0,705.5 1999.0,705.3 2000.0,705.2 2001.0,705.8 2002.0,705.6 2003.0,705.3 2004.0,705.1 2005.0,705.1 2006.0,705.8 2007.0,705.2 2008.0,705.7 2009.0,705.3 2010.0,705.2 2011.0,705.4 2012.0,705.8 2013.0,705.0 2014.0,705.5 2015.0,705.8 2016.0,705.4 2017.0,705.4 2018.0,705.6 2019.0,705.2 2020.0,705.9 2021.0,705.6 2022.0,705.3 2023.0,705.6 2024.0,705.7 2025.0,705.4 2026.0,705.8 2027.0,705.0 2028.0,705.9 2029.0,704.8 2030.0,705.8 2031.0,705.1 2032.0,705.0 2033.0,705.6 2034.0,705.1 2035.0,705.6 2036.0,705.1 2037.0,705.3 2038.0,705.6 2039.0,705.4 2040.0,705.6 2041.0,705.4 2042.0,705.2 2043.0,705.6 2044.0,705.0 2045.0,705.9 2046.0,705.9 2047.0,705.7 2048.0,705.6 2049.0,704.9 2050.0,705.1 2051.0,704.9 2052.0,705.8 2053.0,705.3 2054.0,705.5 2055.0,705.0 2056.0,705.2 2057.0,705.6 2058.0,705.2 2059.0,705.3 2060.0,704.9 2061.0,705.6 2062.0,705.7 2063.0,705.8 2064.0,705.2 2065.0,705.6 2066.0,705.6 2067.0,705.7 2068.0,705.4 2069.0,704.8 2070.0,705.3 2071.0,705.1 2072.0,705.2 2073.0,705.1 2074.0,705.6 2075.0,705.8 2076.0,705.4 2077.0,705.1 2078.0,705.4 2079.0,705.5 2080.0,705.8 2081.0,705.3 2082.0,705.7 2083.0,705.1 2084.0,705.0 2085.0,704.9 2086.0,705.5 2087.0,705.2 2088.0,705.1 2089.0,705.4 2090.0,705.8 2091.0,705.4 2092.0,704.9 2093.0,705.0 2094.0,705.3 2095.0,705.5 2096.0,705.9 2097.0,705.6 2098.0,705.5 2099.0,705.2 2100.0,705.3 2101.0,705.0 2102.0,705.1 2103.0,705.6 2104.0,704.9 2105.0,705.6 2106.0,705.1 2107.0,705.6 2108.0,704.9 2109.0,705.3 2110.0,705.4 2111.0,705.6 2112.0,705.6 2113.0,705.4 2114.0,704.8 2115.0,705.2 2116.0,705.5 2117.0,705.8 2118.0,705.2 2119.0,705.6 2120.0,705.0 2121.0,705.8 2122.0,705.6 2123.0,704.9 2124.0,705.8 2125.0,705.2 2126.0,705.8 2127.0,705.4 2128.0,705.4 2129.0,704.9 2130.0,704.9 2131.0,705.5 2132.0,704.9 2133.0,705.6 2134.0,705.2 2135.0,705.5 2136.0,705.3 2137.0,705.4 2138.0,705.1 2139.0,704.9 2140.0,705.1 2141.0,705.4 2142.0,705.7 2143.0,705.9 2144.0,705.5 2145.0,705.0 2146.0,704.9 2147.0,705.4 2148.0,705.5 2149.0,705.2 2150.0,705.2 2151.0,705.4 2152.0,705.2 2153.0,705.1 2154.0,705.7 2155.0,705.5 2156.0,705.9 2157.0,705.4 2158.0,705.1 2159.0,705.7 2160.0,705.6 2161.0,705.1 2162.0,705.6 2163.0,705.5 2164.0,704.8 2165.0,705.3 2166.0,705.8 2167.0,705.2 2168.0,705.0 2169.0,705.4 2170.0,705.1 2171.0,704.8 2172.0,705.3 2173.0,705.8 2174.0,705.5 2175.0,705.1 2176.0,705.8 2177.0,705.2 2178.0,705.9 2179.0,705.3 2180.0,705.1 2181.0,705.6 2182.0,705.2 2183.0,705.4 2184.0,705.5 2185.0,705.5 2186.0,705.5 2187.0,705.4 2188.0,705.5 2189.0,705.4 2190.0,705.3 2191.0,705.7 2192.0,704.9 2193.0,705.2 2194.0,705.5 2195.0,705.8 2196.0,705.7 2197.0,705.1 2198.0,705.5 2199.0,704.9 2200.0,705.6 2201.0,705.2 2202.0,704.8 2203.0,705.7 2204.0,705.9 2205.0,705.4 2206.0,705.2 2207.0,705.3 2208.0,705.2 2209.0,705.8 2210.0,705.0 2211.0,705.2 2212.0,705.5 2213.0,705.1 2214.0,705.5 2215.0,705.7 2216.0,705.7 2217.0,705.5 2218.0,705.6 2219.0,705.7 2220.0,704.9 2221.0,705.6 2222.0,705.6 2223.0,705.0 2224.0,705.7 2225.0,705.6 2226.0,705.2 2227.0,705.6 2228.0,705.4 2229.0,705.6 2230.0,705.0 2231.0,705.6 2232.0,704.9 2233.0,705.6 2234.0,704.9 2235.0,705.9 2236.0,705.5 2237.0,705.4 2238.0,705.1 2239.0,704.8 2240.0,705.4 2241.0,705.2 2242.0,705.4 2243.0,704.8 2244.0,705.8 2245.0,705.3 2246.0,705.6 2247.0,705.1 2248.0,705.2 2249.0,705.2 2250.0,705.1 2251.0,705.5 2252.0,705.4 2253.0,705.8 2254.0,705.0 2255.0,705.5 2256.0,704.9 2257.0,705.5 2258.0,705.5 2259.0,704.9 2260.0,705.5 2261.0,705.7 2262.0,705.7 2263.0,705.2 2264.0,705.2 2265.0,705.4 2266.0,704.9 2267.0,705.3 2268.0,705.6 2269.0,705.2 2270.0,705.4 2271.0,704.8 2272.0,705.1 2273.0,705.0 2274.0,705.1 2275.0,705.2 2276.0,705.8 2277.0,705.7 2278.0,704.9 2279.0,705.1 2280.0,705.1 2281.0,704.9 2282.0,705.7 2283.0,704.9 2284.0,705.1 2285.0,705.6 2286.0,705.1 2287.0,705.5 2288.0,705.4 2289.0,705.8 2290.0,705.5 2291.0,705.8 2292.0,705.4 2293.0,705.2 2294.0,705.0 2295.0,705.0 2296.0,704.9 2297.0,704.8 2298.0,705.3 2299.0,704.8 2300.0,705.1 2301.0,705.2 2302.0,705.5 2303.0,705.7 2304.0,704.9 2305.0,705.6 2306.0,705.6 2307.0,705.8 2308.0,705.8 2309.0,705.6 2310.0,705.2 2311.0,705.5 2312.0,705.1 2313.0,705.1 2314.0,705.5 2315.0,705.6 2316.0,704.9 2317.0,705.9 2318.0,705.4 2319.0,705.5 2320.0,704.9 2321.0,705.7 2322.0,705.1 2323.0,705.0 2324.0,705.1 2325.0,705.5 2326.0,705.4 2327.0,704.9 2328.0,705.6 2329.0,705.7 2330.0,705.0 2331.0,704.8 2332.0,705.0 2333.0,704.8 2334.0,705.1 2335.0,705.5 2336.0,705.9 2337.0,705.2 2338.0,705.2 2339.0,704.9 2340.0,705.1 2341.0,705.4 2342.0,704.9 2343.0,705.0 2344.0,705.7 2345.0,705.5 2346.0,705.2 2347.0,705.3 2348.0,705.6 2349.0,705.8 2350.0,705.3 2351.0,705.2 2352.0,704.8 2353.0,705.0 2354.0,705.1 2355.0,705.3 2356.0,704.9 2357.0,705.6 2358.0,705.3 2359.0,705.6 2360.0,705.6 2361.0,705.8 2362.0,705.8 2363.0,705.8 2364.0,705.8 2365.0,705.6 2366.0,705.7 2367.0,705.6 2368.0,704.9 2369.0,704.9 2370.0,705.4 2371.0,705.2 2372.0,705.3 2373.0,705.7 2374.0,705.7 2375.0,705.9 2376.0,705.3 2377.0,705.1 2378.0,705.3 2379.0,705.4 2380.0,705.2 2381.0,705.4 2382.0,705.4 2383.0,705.0 2384.0,705.7 2385.0,705.0 2386.0,705.7 2387.0,705.6 2388.0,705.9 2389.0,705.3 2390.0,705.0 2391.0,705.9 2392.0,705.2 2393.0,705.0 2394.0,705.5 2395.0,705.7 2396.0,705.3 2397.0,705.4 2398.0,705.3 2399.0,705.6 2400.0,705.9 2401.0,705.8 2402.0,705.6 2403.0,704.9 2404.0,705.2 2405.0,705.7 2406.0,704.8 2407.0,705.0 2408.0,705.0 2409.0,705.7 2410.0,705.6 2411.0,705.2 2412.0,705.4 2413.0,705.3 2414.0,705.7 2415.0,705.1 2416.0,705.0 2417.0,705.6 2418.0,705.6 2419.0,705.3 2420.0,705.8 2421.0,705.3 2422.0,704.9 2423.0,705.5 2424.0,705.6 2425.0,705.5 2426.0,705.4 2427.0,705.4 2428.0,705.6 2429.0,705.1 2430.0,704.9 2431.0,705.8 2432.0,704.9 2433.0,705.5 2434.0,705.5 2435.0,704.9 2436.0,705.8 2437.0,705.6 2438.0,705.9 2439.0,705.8 2440.0,705.0 2441.0,705.3 2442.0,705.8 2443.0,704.9 2444.0,705.4 2445.0,705.4 2446.0,705.3 2447.0,705.2 2448.0,705.6 2449.0,705.6 2450.0,705.3 2451.0,704.9 2452.0,705.5 2453.0,704.9 2454.0,705.3 2455.0,705.0 2456.0,705.2 2457.0,705.3 2458.0,705.3 2459.0,705.2 2460.0,705.2 2461.0,705.6 2462.0,705.7 2463.0,705.7 2464.0,705.3 2465.0,705.0 2466.0,705.5 2467.0,705.6 2468.0,705.8 2469.0,704.9 2470.0,705.9 2471.0,705.0 2472.0,705.0 2473.0,705.1 2474.0,705.3 2475.0,705.0 2476.0,705.4 2477.0,705.7 2478.0,705.5 2479.0,704.9 2480.0,705.7 2481.0,705.8 2482.0,705.6 2483.0,705.6 2484.0,705.1 2485.0,705.7 2486.0,704.9 2487.0,705.4 2488.0,705.3 2489.0,705.5 2490.0,705.5 2491.0,705.0 2492.0,705.8 2493.0,705.1 2494.0,705.0 2495.0,705.5 2496.0,705.8 2497.0,705.6 2498.0,705.0 2499.0,705.1 2500.0,705.1 2501.0,705.3 2502.0,704.8 2503.0,704.9 2504.0,705.8 2505.0,705.5 2506.0,705.2 2507.0,705.6 2508.0,705.5 2509.0,705.3 2510.0,705.6 2510.0,712" fill="#c2c023"/></g><rect x="1537" y="644.6" width="973" height="1.200" fill="#ffffff" opacity="0.240"/><rect x="1537" y="671.1999999999999" width="973" height="1.200" fill="#ffffff" opacity="0.240"/><rect x="1537" y="691.6999999999999" width="973" height="1.200" fill="#ffffff" opacity="0.240"/></svg><div class="a" style="left:1539.700px;top:636.1px;width:80.3px;height:12.300px;background:rgba(0,0,0,.620);border-radius:6px"></div><div class="a" style="left:1543.70px;top:636.20px;line-height:13px;font-size:9.8px;color:#fff;white-space:pre;font-family:'DejaVu Sans','Liberation Sans',sans-serif;letter-spacing:0.365px;">16ms (60FPS)</div><div class="a" style="left:1539.700px;top:663.2px;width:86.8px;height:12.300px;background:rgba(0,0,0,.620);border-radius:6px"></div><div class="a" style="left:1543.70px;top:663.30px;line-height:13px;font-size:9.8px;color:#fff;white-space:pre;font-family:'DejaVu Sans','Liberation Sans',sans-serif;letter-spacing:0.473px;">10ms (100FPS)</div><div class="a" style="left:1539.700px;top:683.6px;width:80.3px;height:12.300px;background:rgba(0,0,0,.620);border-radius:6px"></div><div class="a" style="left:1543.70px;top:683.70px;line-height:13px;font-size:9.8px;color:#fff;white-space:pre;font-family:'DejaVu Sans','Liberation Sans',sans-serif;letter-spacing:0.365px;">5ms (200FPS)</div><div class="a" style="left:1366px;top:716px;width:1161px;height:18.5px;background:linear-gradient(#bdbdbd,#a6a6a6);border-bottom:1px solid #5a5a5a;box-sizing:border-box;"></div><div class="a" style="left:1371px;top:717px;width:1px;height:16px;background:#868686;"></div><div class="a" style="left:1491.5px;top:717px;width:1px;height:16px;background:#868686;"></div><div class="a" style="left:2401px;top:717px;width:1px;height:16px;background:#868686;"></div><div class="a" style="left:2521px;top:717px;width:1px;height:16px;background:#868686;"></div><div class="a" style="left:1377.30px;top:719.80px;line-height:13px;font-size:9.8px;color:#000;white-space:pre;font-family:'DejaVu Sans','Liberation Sans',sans-serif;letter-spacing:0.126px;">Hierarchy</div><svg class="a" style="left:1482px;top:723px" width="4.5" height="2.8" viewBox="0 0 4.5 2.8"><path d="M0 0H4.5L2.25 2.8z" fill="#444"/></svg><div class="a" style="left:1722.30px;top:720.30px;line-height:13px;font-size:9.8px;color:#000;white-space:pre;font-family:'DejaVu Sans','Liberation Sans',sans-serif;letter-spacing:0.495px;">CPU:14.76ms   GPU:0.00ms</div><div class="a" style="left:2101px;top:719px;width:299px;height:13px;background:linear-gradient(#b5b5b5,#bcbcbc);border:1px solid #848484;border-radius:7px;box-sizing:border-box;box-shadow:inset 0 1px 1px #999;"></div><svg class="a" style="left:2107px;top:721.500px" width="9" height="9" viewBox="0 0 9 9"><circle cx="3.500" cy="3.500" r="2.700" fill="none" stroke="#6a6a6a" stroke-width="1"/><path d="M5.500 5.500L8 8.500" stroke="#6a6a6a" stroke-width="1.200"/></svg><div class="a" style="left:2407.30px;top:719.80px;line-height:13px;font-size:9.8px;color:#000;white-space:pre;font-family:'DejaVu Sans','Liberation Sans',sans-serif;letter-spacing:0.091px;">No details</div><svg class="a" style="left:2512.5px;top:723px" width="4.5" height="2.8" viewBox="0 0 4.5 2.8"><path d="M0 0H4.5L2.25 2.8z" fill="#444"/></svg><div class="a" style="left:1366px;top:734.5px;width:1161px;height:103.5px;background:#b1b1b1;"></div><div class="a" style="left:1366px;top:734.5px;width:1146px;height:20px;background:linear-gradient(#bcbcbc,#b0b0b0);border-bottom:1px solid #555;box-sizing:border-box;"></div><div class="a" style="left:2289.4px;top:735px;width:99px;height:19px;background:#9aa8ba;"></div><div class="a" style="left:1892.9px;top:735px;width:1px;height:19px;background:#5f5f5f;"></div><div class="a" style="left:1991.9px;top:735px;width:1px;height:19px;background:#5f5f5f;"></div><div class="a" style="left:2091.1px;top:735px;width:1px;height:19px;background:#5f5f5f;"></div><div class="a" style="left:2189.8px;top:735px;width:1px;height:19px;background:#5f5f5f;"></div><div class="a" style="left:2288.9px;top:735px;width:1px;height:19px;background:#5f5f5f;"></div><div class="a" style="left:2388.0px;top:735px;width:1px;height:19px;background:#5f5f5f;"></div><div class="a" style="left:2486.8px;top:735px;width:1px;height:19px;background:#5f5f5f;"></div><div class="a" style="left:2511.5px;top:735px;width:1px;height:19px;background:#5f5f5f;"></div><div class="a" style="left:1370.60px;top:738.80px;line-height:14px;font-size:11px;color:#000;white-space:pre;font-family:'DejaVu Sans','Liberation Sans',sans-serif;letter-spacing:0.151px;">Overview</div><div class="a" style="left:1962.41px;top:738.80px;line-height:14px;font-size:11px;color:#000;white-space:pre;font-family:'DejaVu Sans','Liberation Sans',sans-serif;">Total</div><div class="a" style="left:2066.62px;top:738.80px;line-height:14px;font-size:11px;color:#000;white-space:pre;font-family:'DejaVu Sans','Liberation Sans',sans-serif;">Self</div><div class="a" style="left:2159.74px;top:738.80px;line-height:14px;font-size:11px;color:#000;white-space:pre;font-family:'DejaVu Sans','Liberation Sans',sans-serif;">Calls</div><div class="a" style="left:2238.98px;top:738.80px;line-height:14px;font-size:11px;color:#000;white-space:pre;font-family:'DejaVu Sans','Liberation Sans',sans-serif;">GC Alloc</div><div class="a" style="left:2337.34px;top:738.80px;line-height:14px;font-size:11px;color:#000;white-space:pre;font-family:'DejaVu Sans','Liberation Sans',sans-serif;">Time ms</div><div class="a" style="left:2442.38px;top:738.80px;line-height:14px;font-size:11px;color:#000;white-space:pre;font-family:'DejaVu Sans','Liberation Sans',sans-serif;">Self ms</div><svg class="a" style="left:2492.500px;top:738px" width="14" height="13" viewBox="0 0 14 13"><path d="M7 0.800L13.300 12.200H0.700z" fill="#c4c4c4" stroke="#8a8a8a" stroke-width="1"/><rect x="6.300" y="4" width="1.400" height="5" fill="#dcdcdc"/><rect x="6.300" y="10" width="1.400" height="1.300" fill="#dcdcdc"/></svg><div class="a" style="left:1366px;top:756px;width:1146px;height:16px;background:#aeaeae;"></div><div class="a" style="left:1388.40px;top:757.80px;line-height:14px;font-size:11px;color:#000;white-space:pre;font-family:'DejaVu Sans','Liberation Sans',sans-serif;letter-spacing:0.237px;">CoroutinesDelayedCalls</div><svg class="a" style="left:1373.5px;top:759.5px" width="8" height="10" viewBox="0 0 8 10"><path d="M0.300 0.300L7.800 5L0.300 9.700z" fill="#5c5c5c"/></svg><div class="a" style="left:1953.16px;top:757.80px;line-height:14px;font-size:11px;color:#000;white-space:pre;font-family:'DejaVu Sans','Liberation Sans',sans-serif;letter-spacing:0.400px;">59.5%</div><div class="a" style="left:2059.35px;top:757.80px;line-height:14px;font-size:11px;color:#000;white-space:pre;font-family:'DejaVu Sans','Liberation Sans',sans-serif;letter-spacing:0.400px;">0.4%</div><div class="a" style="left:2179.00px;top:757.80px;line-height:14px;font-size:11px;color:#000;white-space:pre;font-family:'DejaVu Sans','Liberation Sans',sans-serif;letter-spacing:0.400px;">5</div><div class="a" style="left:2235.35px;top:757.80px;line-height:14px;font-size:11px;color:#000;white-space:pre;font-family:'DejaVu Sans','Liberation Sans',sans-serif;letter-spacing:0.400px;">122.1 KB</div><div class="a" style="left:2359.71px;top:757.80px;line-height:14px;font-size:11px;color:#000;white-space:pre;font-family:'DejaVu Sans','Liberation Sans',sans-serif;letter-spacing:0.400px;">8.79</div><div class="a" style="left:2458.51px;top:757.80px;line-height:14px;font-size:11px;color:#000;white-space:pre;font-family:'DejaVu Sans','Liberation Sans',sans-serif;letter-spacing:0.400px;">0.06</div><div class="a" style="left:1366px;top:772px;width:1146px;height:16px;background:#b5b5b5;"></div><div class="a" style="left:1388.40px;top:773.80px;line-height:14px;font-size:11px;color:#000;white-space:pre;font-family:'DejaVu Sans','Liberation Sans',sans-serif;letter-spacing:0.398px;">Camera.Render</div><svg class="a" style="left:1373.5px;top:775.5px" width="8" height="10" viewBox="0 0 8 10"><path d="M0.300 0.300L7.800 5L0.300 9.700z" fill="#5c5c5c"/></svg><div class="a" style="left:1953.16px;top:773.80px;line-height:14px;font-size:11px;color:#000;white-space:pre;font-family:'DejaVu Sans','Liberation Sans',sans-serif;letter-spacing:0.400px;">19.1%</div><div class="a" style="left:2059.35px;top:773.80px;line-height:14px;font-size:11px;color:#000;white-space:pre;font-family:'DejaVu Sans','Liberation Sans',sans-serif;letter-spacing:0.400px;">1.3%</div><div class="a" style="left:2179.00px;top:773.80px;line-height:14px;font-size:11px;color:#000;white-space:pre;font-family:'DejaVu Sans','Liberation Sans',sans-serif;letter-spacing:0.400px;">2</div><div class="a" style="left:2267.06px;top:773.80px;line-height:14px;font-size:11px;color:#000;white-space:pre;font-family:'DejaVu Sans','Liberation Sans',sans-serif;letter-spacing:0.400px;">0 B</div><div class="a" style="left:2359.71px;top:773.80px;line-height:14px;font-size:11px;color:#000;white-space:pre;font-family:'DejaVu Sans','Liberation Sans',sans-serif;letter-spacing:0.400px;">2.83</div><div class="a" style="left:2458.51px;top:773.80px;line-height:14px;font-size:11px;color:#000;white-space:pre;font-family:'DejaVu Sans','Liberation Sans',sans-serif;letter-spacing:0.400px;">0.20</div><div class="a" style="left:1366px;top:788px;width:1146px;height:16px;background:#aeaeae;"></div><div class="a" style="left:1388.40px;top:789.80px;line-height:14px;font-size:11px;color:#000;white-space:pre;font-family:'DejaVu Sans','Liberation Sans',sans-serif;letter-spacing:0.171px;">Physics.Processing</div><svg class="a" style="left:1373.5px;top:791.5px" width="8" height="10" viewBox="0 0 8 10"><path d="M0.300 0.300L7.800 5L0.300 9.700z" fill="#5c5c5c"/></svg><div class="a" style="left:1960.15px;top:789.80px;line-height:14px;font-size:11px;color:#000;white-space:pre;font-family:'DejaVu Sans','Liberation Sans',sans-serif;letter-spacing:0.400px;">7.8%</div><div class="a" style="left:2059.35px;top:789.80px;line-height:14px;font-size:11px;color:#000;white-space:pre;font-family:'DejaVu Sans','Liberation Sans',sans-serif;letter-spacing:0.400px;">4.3%</div><div class="a" style="left:2179.00px;top:789.80px;line-height:14px;font-size:11px;color:#000;white-space:pre;font-family:'DejaVu Sans','Liberation Sans',sans-serif;letter-spacing:0.400px;">2</div><div class="a" style="left:2267.06px;top:789.80px;line-height:14px;font-size:11px;color:#000;white-space:pre;font-family:'DejaVu Sans','Liberation Sans',sans-serif;letter-spacing:0.400px;">0 B</div><div class="a" style="left:2359.71px;top:789.80px;line-height:14px;font-size:11px;color:#000;white-space:pre;font-family:'DejaVu Sans','Liberation Sans',sans-serif;letter-spacing:0.400px;">1.15</div><div class="a" style="left:2458.51px;top:789.80px;line-height:14px;font-size:11px;color:#000;white-space:pre;font-family:'DejaVu Sans','Liberation Sans',sans-serif;letter-spacing:0.400px;">0.64</div><div class="a" style="left:1366px;top:804px;width:1146px;height:16px;background:#b5b5b5;"></div><div class="a" style="left:1386.40px;top:805.80px;line-height:14px;font-size:11px;color:#000;white-space:pre;font-family:'DejaVu Sans','Liberation Sans',sans-serif;letter-spacing:0.209px;">Overhead</div><div class="a" style="left:1960.15px;top:805.80px;line-height:14px;font-size:11px;color:#000;white-space:pre;font-family:'DejaVu Sans','Liberation Sans',sans-serif;letter-spacing:0.400px;">3.3%</div><div class="a" style="left:2059.35px;top:805.80px;line-height:14px;font-size:11px;color:#000;white-space:pre;font-family:'DejaVu Sans','Liberation Sans',sans-serif;letter-spacing:0.400px;">3.3%</div><div class="a" style="left:2179.00px;top:805.80px;line-height:14px;font-size:11px;color:#000;white-space:pre;font-family:'DejaVu Sans','Liberation Sans',sans-serif;letter-spacing:0.400px;">1</div><div class="a" style="left:2267.06px;top:805.80px;line-height:14px;font-size:11px;color:#000;white-space:pre;font-family:'DejaVu Sans','Liberation Sans',sans-serif;letter-spacing:0.400px;">0 B</div><div class="a" style="left:2359.71px;top:805.80px;line-height:14px;font-size:11px;color:#000;white-space:pre;font-family:'DejaVu Sans','Liberation Sans',sans-serif;letter-spacing:0.400px;">0.49</div><div class="a" style="left:2458.51px;top:805.80px;line-height:14px;font-size:11px;color:#000;white-space:pre;font-family:'DejaVu Sans','Liberation Sans',sans-serif;letter-spacing:0.400px;">0.49</div><div class="a" style="left:1366px;top:820px;width:1146px;height:16px;background:#aeaeae;"></div><div class="a" style="left:1388.40px;top:821.80px;line-height:14px;font-size:11px;color:#000;white-space:pre;font-family:'DejaVu Sans','Liberation Sans',sans-serif;letter-spacing:0.090px;">BehaviourUpdate</div><svg class="a" style="left:1373.5px;top:823.5px" width="8" height="10" viewBox="0 0 8 10"><path d="M0.300 0.300L7.800 5L0.300 9.700z" fill="#5c5c5c"/></svg><div class="a" style="left:1960.15px;top:821.80px;line-height:14px;font-size:11px;color:#000;white-space:pre;font-family:'DejaVu Sans','Liberation Sans',sans-serif;letter-spacing:0.400px;">1.6%</div><div class="a" style="left:2059.35px;top:821.80px;line-height:14px;font-size:11px;color:#000;white-space:pre;font-family:'DejaVu Sans','Liberation Sans',sans-serif;letter-spacing:0.400px;">0.2%</div><div class="a" style="left:2179.00px;top:821.80px;line-height:14px;font-size:11px;color:#000;white-space:pre;font-family:'DejaVu Sans','Liberation Sans',sans-serif;letter-spacing:0.400px;">1</div><div class="a" style="left:2267.06px;top:821.80px;line-height:14px;font-size:11px;color:#000;white-space:pre;font-family:'DejaVu Sans','Liberation Sans',sans-serif;letter-spacing:0.400px;">0 B</div><div class="a" style="left:2359.71px;top:821.80px;line-height:14px;font-size:11px;color:#000;white-space:pre;font-family:'DejaVu Sans','Liberation Sans',sans-serif;letter-spacing:0.400px;">0.24</div><div class="a" style="left:2458.51px;top:821.80px;line-height:14px;font-size:11px;color:#000;white-space:pre;font-family:'DejaVu Sans','Liberation Sans',sans-serif;letter-spacing:0.400px;">0.04</div><div class="a" style="left:2512px;top:593px;width:15px;height:123px;background:#adadad;"></div><div class="a" style="left:2514px;top:605px;width:11px;height:99px;background:linear-gradient(90deg,#9e9e9e,#c4c4c4);border-radius:6px;border:1px solid #8f8f8f;box-sizing:border-box;"></div><div class="a" style="left:2514px;top:611px;width:11px;height:28px;background:linear-gradient(90deg,#5f6f8c,#8594ad);border-radius:5.500px;border:1px solid #3e4a60;box-sizing:border-box;"></div><svg class="a" style="left:2516px;top:597px" width="7" height="5" viewBox="0 0 7 5"><path d="M0 5H7L3.500 0z" fill="#2a2a2a"/></svg><svg class="a" style="left:2516px;top:708px" width="7" height="5" viewBox="0 0 7 5"><path d="M0 0H7L3.500 5z" fill="#2a2a2a"/></svg><div class="a" style="left:2512px;top:755px;width:15px;height:83px;background:#adadad;"></div><div class="a" style="left:2514px;top:767px;width:11px;height:59px;background:linear-gradient(90deg,#9e9e9e,#c4c4c4);border-radius:6px;border:1px solid #8f8f8f;box-sizing:border-box;"></div><div class="a" style="left:2514px;top:772px;width:11px;height:19px;background:linear-gradient(90deg,#5f6f8c,#8594ad);border-radius:5.500px;border:1px solid #3e4a60;box-sizing:border-box;"></div><svg class="a" style="left:2516px;top:759px" width="7" height="5" viewBox="0 0 7 5"><path d="M0 5H7L3.500 0z" fill="#2a2a2a"/></svg><svg class="a" style="left:2516px;top:830px" width="7" height="5" viewBox="0 0 7 5"><path d="M0 0H7L3.500 5z" fill="#2a2a2a"/></svg><div class="a" style="left:1366px;top:838px;width:1440px;height:22px;background:#858585;"></div><svg class="a" style="left:1369px;top:843px" width="14" height="14" viewBox="0 0 14 14"><circle cx="7" cy="6.500" r="6" fill="#e4e4e4" stroke="#8f8f8f" stroke-width="1"/><path d="M4 11.500L3.500 13.500L6.500 12z" fill="#e4e4e4"/><rect x="6.200" y="2.500" width="1.600" height="5.500" fill="#555"/><rect x="6.200" y="9" width="1.600" height="1.600" fill="#555"/></svg><div class="a" style="left:1386.40px;top:844.60px;line-height:14px;font-size:11px;color:#000;white-space:pre;font-family:'DejaVu Sans','Liberation Sans',sans-serif;letter-spacing:0.230px;">Shifting chunk registry by 0, 2, 0.</div>
<div class="a" style="left:1366px;top:860px;width:1440px;height:40px;background:#2b1a45"></div><svg class="a" style="left:1381.5px;top:871.5px" width="17" height="16.5" viewBox="0 0 17 17"><path d="M0 2.400L7 1.400V8H0zM8 1.250L17 0V8H8zM0 9H7V15.600L0 14.600zM8 9H17V17L8 15.750z" fill="#fff"/></svg><svg class="a" style="left:1427.5px;top:873px" width="21" height="15" viewBox="0 0 21 15"><rect x="4.500" y="0.500" width="12" height="13" fill="none" stroke="#fff" stroke-width="1.2"/><path d="M2.500 2.500H0.600V11.500H2.500M18.500 2.500H20.400V11.500H18.500" fill="none" stroke="#fff" stroke-width="1.2"/></svg><svg class="a" style="left:1475px;top:870px" width="22.0" height="20.0" viewBox="0 0 22 20"><path d="M6 1.500L21 3L14.500 19L1 17.500z" fill="#9fd8e6" stroke="#dff3f8" stroke-width="1"/><path d="M8 4L19 5.200L14 17L3 15.800z" fill="#6cc0d6"/><path d="M1 17.500L14.500 19L15.500 17" fill="none" stroke="#e8e2c8" stroke-width="1.300"/></svg><div class="a" style="left:1503.00px;top:871.90px;line-height:16px;font-size:12px;color:#fff;white-space:pre;font-family:'Liberation Sans',sans-serif;letter-spacing:-0.168px;">CYB next.txt - Note...</div><div class="a" style="left:1469px;top:898px;width:152px;height:2px;background:#b79ce4"></div><svg class="a" style="left:1636px;top:869px" width="23" height="22" viewBox="0 0 23 22"><circle cx="11.500" cy="11" r="10.500" fill="#7fb2e5"/><circle cx="11.500" cy="11" r="10" fill="none" stroke="#c6def5" stroke-width="1"/><path d="M4 13Q3 5 11 4.500Q18 4.500 18.500 10.500Q18.500 16 13 16Q8.500 16 8.500 12Q8.500 9 11.500 9Q14 9 14 11.500" fill="none" stroke="#eef5fc" stroke-width="2.200"/></svg><div class="a" style="left:1664.50px;top:871.90px;line-height:16px;font-size:12px;color:#fff;white-space:pre;font-family:'Liberation Sans',sans-serif;letter-spacing:-0.202px;">Assembly-CSharp -...</div><div class="a" style="left:1630px;top:898px;width:152px;height:2px;background:#b79ce4"></div><div class="a" style="left:1787px;top:860px;width:160px;height:40px;background:#4d3a73"></div><div class="a" style="left:1787px;top:898px;width:160px;height:2px;background:#c5aef0"></div><div class="a" style="left:1796px;top:867px"><svg width="24" height="24" viewBox="0 0 100 100"><path d="M3 48.500L84 3Q108 50 86 97Z" fill="#1a1326" stroke="#1a1326" stroke-width="4" stroke-linejoin="round"/><path d="M21.200 44.600L74.600 14.400L57.300 44.900ZM21.700 55.400L57.300 55.100L74.200 85.900ZM82.700 20.800L92.900 50L82.700 79.700L67 50Z" fill="#fff"/></svg></div><div class="a" style="left:1825.00px;top:871.90px;line-height:16px;font-size:12px;color:#fff;white-space:pre;font-family:'Liberation Sans',sans-serif;letter-spacing:-0.275px;">Unity 5.6.1f1 Perso...</div><svg class="a" style="left:2717px;top:871px" width="18" height="17" viewBox="0 0 18 17"><path d="M6 15.500C2 17 0.500 14 2.500 12C4 10.500 6 11 6.500 12.500" fill="none" stroke="#fff" stroke-width="1.300"/><path d="M6 15L12.500 1.500Q14 0.500 14.500 2.500L8.500 15.500z" fill="none" stroke="#fff" stroke-width="1.300"/><path d="M13 7.500Q17.500 7 16.500 10Q15.500 11.500 13.500 10.500" fill="none" stroke="#fff" stroke-width="1.300"/></svg><div class="a" style="left:2753.15px;top:862.60px;line-height:16px;font-size:12px;color:#fff;white-space:pre;font-family:'Liberation Sans',sans-serif;letter-spacing:-0.427px;">9:56 PM</div><div class="a" style="left:2748.15px;top:880.80px;line-height:16px;font-size:12px;color:#fff;white-space:pre;font-family:'Liberation Sans',sans-serif;letter-spacing:-0.187px;">6/23/2017</div></body></html>
